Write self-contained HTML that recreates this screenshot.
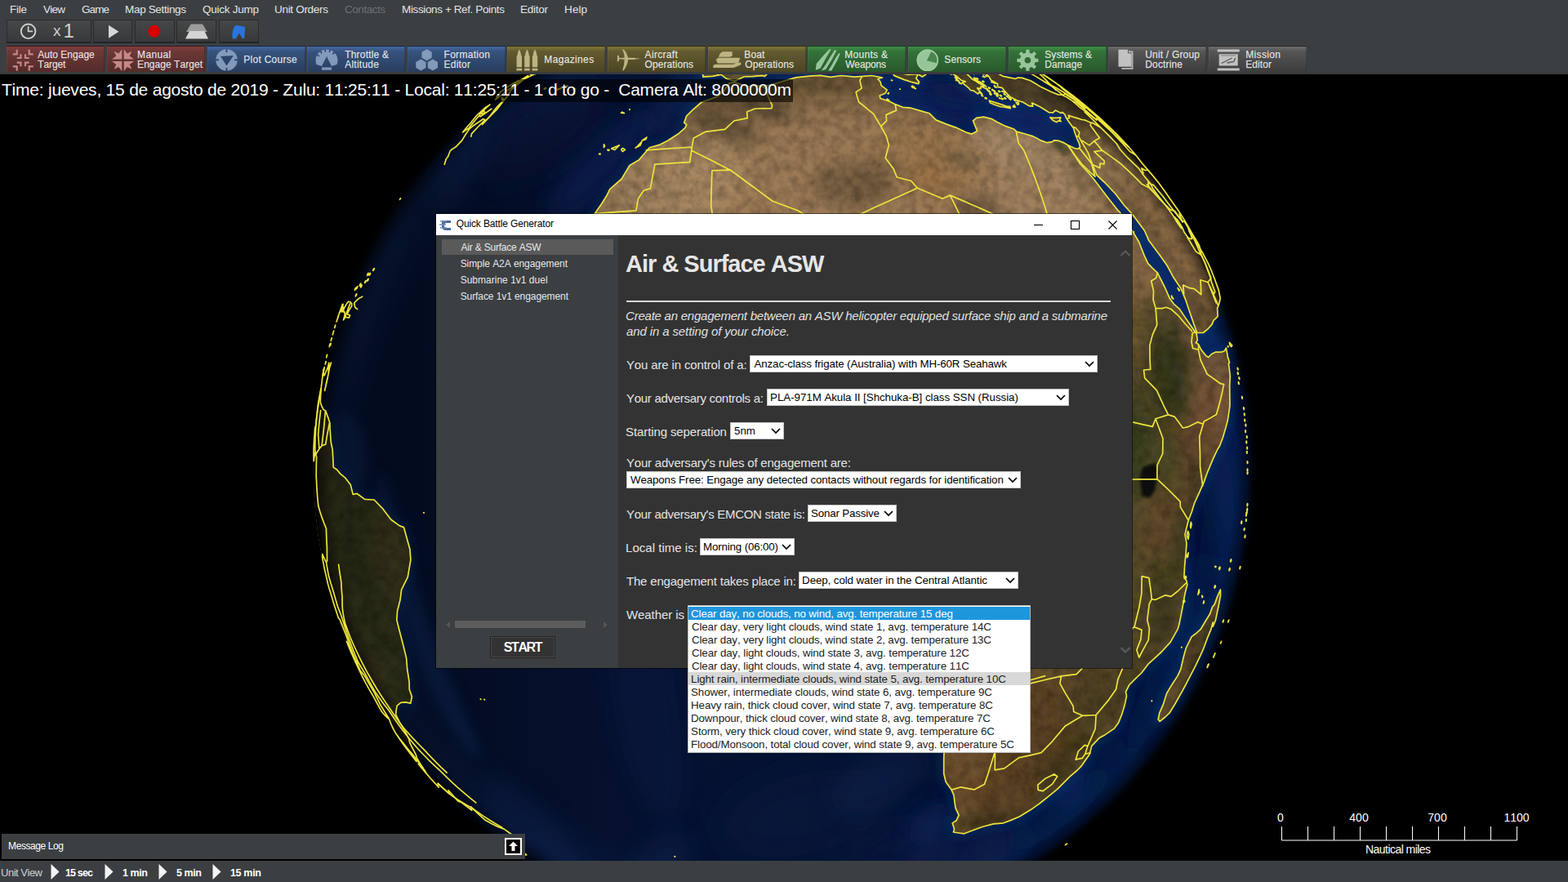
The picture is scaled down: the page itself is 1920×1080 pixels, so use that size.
<!DOCTYPE html>
<html lang="es"><head><meta charset="utf-8"><title>Quick Battle Generator</title>
<style>
*{box-sizing:border-box;margin:0;padding:0}
html,body{width:1920px;height:1080px;overflow:hidden;background:#000}
body{position:relative;font-family:"Liberation Sans",sans-serif;font-kerning:none}
.b{position:absolute}
.t{position:absolute;white-space:pre;font-weight:normal;font-style:normal;list-style:none}
svg{position:absolute;left:0;top:0}
</style></head>
<body>
<main id="map" aria-label="Map view">
<svg width="1920" height="1080" viewBox="0 0 1920 1080" class="globe">
<defs>
<clipPath id="disk"><circle cx="960.1" cy="572.4" r="576.5"/></clipPath>
<clipPath id="land"><path d="M893.0,101.8 899.3,100.8 915.1,105.9 926.7,104.8 934.6,106.4 953.2,101.2 961.2,98.8 974.7,94.9 993.6,92.9 1004.7,92.4 1017.1,94.3 1030.0,92.5 1046.5,94.2 1057.0,93.3 1067.3,92.5 1080.5,95.0 1074.9,96.8 1077.9,100.1 1079.3,104.9 1086.2,110.2 1084.1,114.2 1077.2,117.0 1078.0,120.5 1085.3,122.7 1090.3,124.8 1096.7,127.9 1105.4,131.3 1115.5,132.2 1128.6,136.1 1138.1,138.8 1146.1,146.9 1158.5,151.9 1170.4,156.1 1184.1,162.4 1189.9,164.1 1196.5,160.4 1193.4,152.7 1191.5,148.0 1195.6,144.3 1204.4,143.2 1214.6,145.7 1220.7,149.2 1231.1,154.4 1241.5,158.0 1244.8,161.1 1255.4,164.0 1264.0,166.6 1275.7,172.4 1282.2,174.7 1288.3,173.6 1290.9,171.8 1296.1,172.3 1302.2,174.6 1307.2,177.5 1316.1,190.4 1322.5,200.5 1333.2,212.0 1339.9,220.0 1349.3,232.6 1359.3,245.6 1368.1,256.6 1371.8,260.5 1375.3,270.4 1385.6,281.2 1394.5,296.0 1401.1,312.6 1405.8,322.6 1411.0,328.2 1417.4,334.2 1427.1,353.5 1432.2,365.2 1437.2,372.1 1444.3,378.4 1452.7,390.9 1460.4,402.1 1465.2,409.1 1466.3,416.6 1464.3,419.8 1467.4,421.6 1470.9,428.4 1476.9,435.7 1479.7,437.5 1483.6,433.6 1488.3,431.2 1492.2,431.1 1495.9,431.0 1499.3,429.8 1501.4,426.1 1503.3,436.7 1505.6,444.2 1504.4,444.9 1506.3,460.4 1505.7,472.1 1505.8,484.2 1506.0,496.4 1504.8,504.9 1503.3,514.8 1501.0,523.4 1497.3,536.0 1493.4,546.2 1491.0,550.0 1485.4,561.8 1478.7,577.8 1474.4,589.9 1468.3,603.6 1462.6,616.0 1459.2,627.0 1455.4,636.8 1453.9,642.3 1451.0,654.7 1453.0,665.2 1452.0,678.6 1450.6,693.2 1449.9,707.5 1452.9,710.9 1453.8,715.8 1450.9,727.5 1447.7,745.4 1444.0,764.1 1442.1,770.4 1433.1,786.4 1422.5,798.0 1412.6,807.1 1406.0,813.2 1397.7,824.0 1388.5,832.8 1382.9,838.5 1378.5,847.2 1379.5,852.4 1377.1,863.6 1373.7,874.8 1369.6,884.9 1364.4,892.1 1352.8,899.9 1346.3,903.4 1336.8,913.4 1334.3,923.4 1323.6,938.7 1318.8,943.5 1310.0,950.8 1304.6,956.4 1294.6,966.4 1283.3,975.6 1273.4,983.5 1262.1,991.6 1248.2,1000.0 1237.9,1004.4 1228.8,1007.8 1216.6,1008.9 1203.6,1012.3 1195.1,1015.3 1180.6,1020.8 1174.5,1020.0 1167.4,1019.0 1168.6,1015.2 1166.2,1007.9 1171.0,1004.8 1174.1,998.2 1170.1,989.7 1169.0,982.3 1168.0,973.8 1165.1,967.1 1158.2,957.6 1155.7,947.2 1155.7,929.5 1156.1,918.0 1156.3,906.2 1155.5,894.2 1149.9,882.2 1144.6,869.9 1139.1,857.2 1131.7,834.8 1135.8,820.2 1139.8,805.3 1149.3,780.6 1161.9,767.0 1170.0,738.7 1161.5,717.9 1163.4,710.3 1160.4,687.3 1152.4,667.3 1145.6,648.6 1129.5,628.2 1113.0,609.2 1100.8,583.6 1110.1,566.0 1113.2,556.4 1116.1,542.0 1117.5,526.0 1112.6,511.7 1103.3,508.4 1093.8,498.8 1075.1,501.8 1056.2,503.3 1040.1,484.0 1014.5,469.6 998.5,470.3 979.3,474.2 956.9,483.8 934.4,491.8 926.3,495.8 911.9,490.2 896.0,487.9 880.0,490.0 864.1,492.1 837.3,501.9 814.3,489.4 790.4,472.4 778.8,461.7 765.9,454.3 755.0,439.2 750.2,424.1 737.2,409.6 726.6,402.6 726.5,389.4 712.1,384.3 715.4,367.6 713.7,359.9 705.8,350.5 714.9,341.6 721.5,331.6 728.9,317.5 732.5,302.6 729.0,285.9 725.5,268.5 728.1,262.1 736.0,250.4 742.5,240.3 746.8,231.7 761.2,219.0 771.0,202.5 782.1,196.1 787.1,190.3 795.3,180.7 808.1,177.1 817.5,172.3 831.5,163.2 838.8,156.7 840.8,152.7 837.7,150.4 840.6,142.1 848.7,134.2 859.2,125.0 870.3,121.3 879.6,117.4 885.7,112.0 889.4,106.8 893.0,101.8Z M1494.4,722.2 1494.5,728.8 1492.9,738.1 1489.3,755.3 1488.4,759.7 1485.2,767.1 1485.2,762.1 1482.7,771.2 1478.6,780.9 1473.7,794.2 1469.1,804.3 1464.1,814.9 1456.2,830.1 1450.8,840.5 1446.5,848.4 1438.8,862.0 1431.9,873.2 1426.8,878.0 1420.2,883.4 1418.2,881.0 1419.8,872.8 1424.3,862.7 1428.7,848.7 1430.9,845.1 1436.2,836.5 1442.0,827.6 1445.8,819.4 1447.3,812.8 1449.7,802.8 1452.3,793.5 1459.1,779.6 1464.3,775.8 1470.1,770.7 1475.7,761.3 1481.5,751.8 1484.6,743.1 1487.2,740.1 1490.8,730.1 1494.4,722.2Z M899.6,99.2 907.3,95.7 910.9,94.0 922.0,93.7 932.7,92.7 936.6,93.4 940.1,89.6 951.3,86.4 954.7,82.0 962.3,78.4 956.9,72.8 965.3,66.1 970.3,63.0 982.4,61.2 991.8,55.3 992.0,49.6 1006.4,49.5 1018.3,51.7 1030.6,49.0 1043.2,46.2 1055.1,49.2 1061.2,55.0 1069.3,59.1 1079.4,63.5 1089.7,68.1 1103.3,72.0 1115.4,78.4 1126.6,86.3 1125.0,91.5 1129.4,94.1 1133.5,91.2 1136.5,88.2 1134.3,84.0 1127.8,80.0 1129.6,77.1 1140.8,81.8 1144.8,83.6 1144.8,81.4 1138.4,77.8 1126.5,73.1 1117.2,67.2 1105.9,65.2 1096.4,59.6 1087.1,54.3 1073.7,48.3 1071.2,43.6 1081.5,43.4 1084.5,47.0 1095.6,49.2 1109.6,57.5 1120.5,61.4 1131.4,65.3 1145.6,71.4 1149.0,75.3 1151.9,81.0 1161.6,87.4 1170.5,92.7 1177.2,98.4 1182.1,99.9 1178.0,101.2 1185.7,107.3 1188.4,110.5 1192.1,111.1 1197.5,114.9 1198.9,113.1 1202.8,115.5 1196.6,107.8 1201.0,108.6 1201.2,105.4 1205.5,107.8 1203.2,103.8 1190.4,96.9 1187.6,93.9 1181.7,88.5 1181.9,85.6 1189.2,88.8 1192.7,90.7 1190.1,86.1 1197.2,86.5 1205.6,88.9 1207.5,90.4 1211.5,94.7 1213.3,98.0 1221.6,102.8 1221.5,106.4 1227.2,107.7 1231.7,113.1 1237.1,118.8 1244.4,122.5 1252.9,125.2 1259.9,129.6 1264.7,130.2 1263.6,126.1 1273.5,130.7 1282.3,136.3 1284.3,137.6 1289.5,137.9 1292.1,135.1 1299.3,138.6 1300.7,137.4 1303.8,140.2 1305.6,144.3 1308.0,148.1 1314.7,157.3 1315.7,160.9 1317.2,165.5 1318.7,169.5 1321.3,175.4 1322.6,180.2 1319.7,182.5 1315.2,181.2 1307.9,177.7 1316.5,190.5 1324.9,201.1 1334.5,210.6 1341.0,216.3 1339.0,209.2 1336.6,200.1 1337.3,200.3 1343.1,214.7 1352.7,223.5 1365.5,237.0 1376.5,251.2 1386.8,262.7 1401.5,282.5 1406.4,293.9 1420.0,312.2 1429.2,325.3 1436.6,339.2 1446.4,353.9 1451.9,367.6 1456.1,380.1 1462.6,399.0 1465.6,407.4 1473.3,407.5 1479.6,402.3 1484.1,397.1 1486.0,392.4 1488.7,389.8 1491.1,387.3 1490.6,377.3 1491.9,374.3 1492.8,371.3 1493.7,368.1 1494.2,365.0 1492.3,355.6 1487.2,341.3 1483.6,332.2 1479.8,323.3 1472.8,310.0 1466.5,299.7 1460.1,288.6 1454.8,278.9 1456.1,283.3 1457.7,286.3 1459.8,292.3 1457.6,292.4 1455.2,291.4 1450.3,284.8 1447.6,278.4 1441.4,268.5 1443.9,274.6 1446.6,279.7 1441.3,272.3 1436.5,264.1 1427.4,251.5 1417.2,238.6 1411.3,230.3 1409.6,225.9 1412.2,226.4 1424.0,240.5 1433.1,252.8 1442.5,264.6 1448.2,270.9 1449.9,270.8 1460.1,287.1 1463.3,291.7 1466.1,296.2 1468.3,297.7 1469.4,299.8 1470.4,301.7 1468.3,297.7 1466.1,293.8 1463.9,289.8 1461.7,285.9 1459.4,281.9 1457.1,277.9 1454.7,274.0 1452.3,270.0 1447.7,262.6 1443.0,255.4 1438.2,248.2 1433.3,241.0 1428.3,234.0 1423.2,227.1 1418.0,220.2 1412.7,213.4 1407.3,206.7 1401.8,200.1 1396.2,193.6 1389.5,186.0 1382.6,178.5 1375.7,171.2 1368.6,164.0 1361.4,156.9 1354.1,150.0 1346.7,143.2 1339.2,136.5 1331.6,130.0 1323.8,123.6 1318.6,119.5 1313.3,115.3 1307.9,111.2 1302.4,107.1 1296.9,103.1 1291.2,99.1 1285.5,95.1 1279.7,91.2 1273.9,87.4 1267.9,83.6 1261.9,79.9 1255.9,76.2 1249.8,72.6 1243.6,69.1 1237.4,65.6 1231.1,62.3 1224.8,59.0 1218.4,55.7 1214.2,53.7 1210.0,51.6 1205.7,49.5 1201.3,47.5 1196.9,45.5 1192.4,43.5 1187.9,41.6 1183.3,39.6 1178.7,37.7 1174.1,35.8 1169.4,34.0 1164.7,32.2 1159.9,30.4 1155.1,28.7 1150.3,27.0 1145.5,25.3 1140.6,23.7 1135.7,22.1 1130.8,20.6 1126.0,19.1 1122.8,18.1 1119.5,17.2 1116.2,16.2 1112.8,15.3 1109.4,14.4 1105.9,13.4 1102.3,12.5 1098.7,11.6 1095.0,10.7 1091.3,9.8 1087.5,9.0 1083.6,8.1 1079.7,7.3 1075.8,6.5 1071.8,5.6 1067.7,4.9 1063.6,4.1 1059.5,3.4 1055.3,2.6 1051.1,2.0 1046.8,1.3 1042.5,0.7 1038.1,0.0 1033.7,-0.5 1029.3,-1.1 1024.9,-1.6 1020.4,-2.1 1015.8,-2.6 1011.3,-3.0 1006.7,-3.4 1004.9,-3.5 1002.8,-3.7 1000.4,-2.7 997.9,-2.7 995.2,-2.6 992.2,-2.3 989.0,-1.9 985.6,-1.4 981.9,-0.8 978.0,0.0 973.9,1.0 969.5,2.1 964.9,3.3 960.1,4.8 955.0,6.4 949.7,8.1 944.2,10.1 938.4,12.2 932.4,14.5 926.1,17.0 919.7,19.6 922.7,22.9 926.0,26.4 929.5,30.2 933.2,34.2 937.1,38.6 941.3,43.2 945.6,48.2 935.2,48.4 924.8,48.8 914.4,49.2 904.0,49.7 893.7,50.4 883.4,51.0 870.3,54.2 870.6,59.9 871.0,65.9 865.6,73.7 860.1,81.9 860.8,94.2 872.7,93.4 882.9,91.4 889.5,96.4 899.6,99.2Z M1095.3,88.3 1102.8,89.7 1112.2,91.4 1124.1,90.7 1121.8,96.1 1125.5,100.1 1124.6,102.6 1116.9,100.7 1106.7,97.4 1095.0,92.6 1093.3,89.5 1095.3,88.3Z M1053.8,65.0 1058.4,67.2 1060.4,73.1 1061.1,78.5 1056.2,78.8 1051.4,79.9 1048.5,77.0 1044.0,68.1 1044.3,65.6 1053.8,65.0Z M1211.3,123.2 1217.2,125.1 1225.9,127.9 1232.8,130.4 1236.7,130.4 1237.3,132.7 1231.2,131.5 1224.3,130.5 1217.3,128.0 1212.5,126.0 1211.3,123.2Z M1285.9,143.9 1289.7,144.3 1294.3,144.4 1298.7,143.9 1297.6,146.7 1299.1,148.7 1296.2,147.9 1293.9,149.6 1289.7,147.7 1285.9,143.9Z M396.6,451.7 394.6,464.0 393.2,475.5 392.6,484.1 392.3,492.7 393.3,495.6 394.5,498.5 396.1,501.4 398.7,503.1 402.0,511.9 403.8,517.7 404.4,529.3 405.2,541.0 407.2,550.9 408.3,572.4 412.5,575.0 416.7,580.1 423.1,585.4 429.2,593.4 432.2,605.4 437.0,604.3 446.6,611.4 458.1,612.0 469.1,623.4 478.8,636.3 489.4,643.9 494.4,645.6 496.8,654.0 501.9,672.4 502.9,685.5 499.3,706.7 491.6,722.1 490.0,734.8 486.6,748.0 485.8,758.9 488.6,770.3 493.8,790.3 497.6,805.9 498.7,819.5 501.1,834.9 501.3,844.2 504.4,853.0 502.8,861.1 496.6,859.8 490.8,860.3 486.2,864.2 485.1,870.1 484.7,875.1 489.6,884.9 496.4,896.1 500.4,904.1 501.8,909.6 504.6,915.2 509.3,924.2 510.5,928.5 514.0,934.3 517.7,939.9 520.7,944.3 522.1,946.8 518.6,943.0 515.3,939.1 511.2,936.0 518.6,944.9 526.2,953.7 536.3,965.0 535.5,964.0 534.7,963.2 534.1,962.5 533.5,961.9 540.0,968.9 546.6,975.8 550.9,980.1 555.3,984.5 559.7,988.8 564.3,993.1 568.9,997.4 575.7,1003.6 582.6,1009.6 589.6,1015.6 596.7,1021.4 603.9,1027.1 597.2,1021.8 590.6,1016.4 584.1,1010.9 577.7,1005.4 571.5,999.8 565.3,994.1 559.3,988.4 553.4,982.6 547.6,976.7 541.9,970.9 536.3,965.0 530.9,959.0 525.6,953.0 520.4,947.0 513.9,939.3 507.6,931.4 501.3,923.4 495.3,915.3 489.3,907.1 483.5,898.8 477.9,890.4 472.3,881.9 467.0,873.3 461.8,864.5 456.7,855.7 451.8,846.8 447.0,837.8 442.5,828.8 438.0,819.6 433.7,810.4 429.6,801.0 425.7,791.7 421.9,782.2 418.3,772.7 414.8,762.9 411.5,753.1 408.3,743.3 405.4,733.5 402.6,723.5 400.0,713.6 397.6,703.6 395.3,693.6 393.3,683.6 391.4,673.5 389.7,663.5 388.2,653.4 386.8,643.3 385.7,633.2 384.7,623.0 383.9,612.9 383.2,602.8 382.8,592.7 382.5,582.5 382.4,572.4 382.5,563.1 382.7,553.7 383.1,544.3 383.7,535.0 384.3,525.6 385.2,516.2 386.2,506.8 387.3,497.4 388.6,488.0 390.1,478.7 391.7,469.3 393.5,459.9 395.4,450.5 395.4,450.9 395.3,451.2 395.2,451.5 395.2,451.7 395.2,451.9 395.1,452.1 395.1,452.2 395.1,452.3 395.0,452.4 395.0,452.4 395.0,452.4 395.0,452.4 395.1,452.3 395.1,452.2 395.1,452.1 395.2,451.9 396.3,451.9 396.6,451.7Z M1246.5,124.7 1247.6,127.3 1246.2,128.3 1244.2,125.8 1246.5,124.7Z M1192.5,96.7 1201.3,100.9 1207.7,106.0 1198.0,101.5 1192.5,96.7Z"/></clipPath>
<radialGradient id="ocean" cx="0.5" cy="0.5" r="0.5"><stop offset="0" stop-color="#051232"/><stop offset="1" stop-color="#051232"/></radialGradient>
<radialGradient id="limb" cx="0.5" cy="0.5" r="0.5"><stop offset="0" stop-color="#000" stop-opacity="0"/><stop offset="0.96" stop-color="#000" stop-opacity="0"/><stop offset="0.985" stop-color="#000" stop-opacity="0.4"/><stop offset="0.997" stop-color="#000" stop-opacity="0.9"/><stop offset="1" stop-color="#000" stop-opacity="1"/></radialGradient>
<radialGradient id="rim" cx="0.5" cy="0.5" r="0.5"><stop offset="0.86" stop-color="#1a4a9a" stop-opacity="0"/><stop offset="0.95" stop-color="#1a4a9a" stop-opacity="0.13"/><stop offset="0.98" stop-color="#1a4a9a" stop-opacity="0.08"/><stop offset="1" stop-color="#1a4a9a" stop-opacity="0"/></radialGradient>
<linearGradient id="night" gradientUnits="userSpaceOnUse" x1="385" y1="0" x2="850" y2="0"><stop offset="0" stop-color="#000" stop-opacity="0.5"/><stop offset="0.3" stop-color="#000" stop-opacity="0.36"/><stop offset="0.65" stop-color="#000" stop-opacity="0.14"/><stop offset="1" stop-color="#000" stop-opacity="0"/></linearGradient>
<filter id="b1" x="-20%" y="-20%" width="140%" height="140%"><feGaussianBlur stdDeviation="1.500"/></filter>
<filter id="b4" x="-20%" y="-20%" width="140%" height="140%"><feGaussianBlur stdDeviation="4"/></filter>
<filter id="b8" x="-30%" y="-30%" width="160%" height="160%"><feGaussianBlur stdDeviation="8"/></filter>
<filter id="b14" x="-40%" y="-40%" width="180%" height="180%"><feGaussianBlur stdDeviation="14"/></filter>
<filter id="b25" x="-50%" y="-50%" width="200%" height="200%"><feGaussianBlur stdDeviation="25"/></filter>
<filter id="grain" x="0" y="0" width="100%" height="100%"><feTurbulence type="fractalNoise" baseFrequency="0.09" numOctaves="3" seed="7" result="n"/><feColorMatrix in="n" type="matrix" values="0 0 0 0 0  0 0 0 0 0  0 0 0 0 0  1.500 1.500 0 0 -1.150"/></filter>
<filter id="grain2" x="0" y="0" width="100%" height="100%"><feTurbulence type="fractalNoise" baseFrequency="0.025" numOctaves="3" seed="3" result="n"/><feColorMatrix in="n" type="matrix" values="0 0 0 0 .350  0 0 0 0 .250  0 0 0 0 .120  0 1.800 1.200 0 -1.250"/></filter>
</defs>
<g clip-path="url(#disk)">
<circle cx="960.1" cy="572.4" r="576.5" fill="url(#ocean)"/>
<path d="M1309.4,164.5 1302.5,157.3 1289.3,148.3 1269.9,137.9 1244.7,126.9 1214.6,116.1 1180.4,106.4 1143.7,98.3 1106.6,92.5 1071.1,89.2 1039.4,88.3 1013.4,89.5 994.9,92.6 985.0,97.1 984.6,102.7 994.2,109.1 1013.6,116.1 1041.9,123.7 1077.4,131.8 1117.6,140.1 1159.5,148.4 1199.8,156.2 1235.9,162.9 1265.6,168.0 1287.9,171.0 1302.5,171.5 1309.5,169.3 1309.4,164.5Z" fill="#09225a" opacity="0.95" filter="url(#b14)"/>
<path d="M1317.5,167.7 1313.3,162.8 1306.5,157.5 1297.6,151.9 1286.9,146.4 1274.8,141.4 1261.7,137.1 1248.2,133.7 1235.0,131.5 1222.7,130.5 1212.2,130.9 1204.1,132.5 1199.0,135.3 1197.4,139.1 1199.5,143.7 1205.3,148.8 1214.5,154.2 1226.5,159.6 1240.4,164.7 1255.4,169.2 1270.4,173.0 1284.4,175.8 1296.7,177.4 1306.6,177.9 1313.7,177.0 1317.9,175.0 1319.2,171.8 1317.5,167.7Z" fill="#09225a" opacity="0.95" filter="url(#b14)"/>
<path d="M1101.8,97.6 1098.3,93.9 1090.5,90.0 1079.0,86.2 1064.2,82.8 1047.0,80.1 1028.1,78.1 1008.5,77.1 989.1,77.1 970.9,78.2 954.8,80.1 941.8,82.8 932.4,86.0 927.4,89.5 927.1,93.1 931.7,96.5 940.9,99.7 954.5,102.5 971.6,104.8 991.4,106.6 1012.6,107.8 1033.8,108.4 1053.7,108.3 1071.2,107.5 1085.3,106.0 1095.3,103.8 1100.9,101.0 1101.8,97.6Z" fill="#0a2860" opacity="0.9" filter="url(#b14)"/>
<path d="M1213.0,120.6 1210.4,117.7 1206.0,114.6 1200.1,111.4 1192.9,108.5 1184.8,105.9 1176.1,103.7 1167.4,102.2 1158.9,101.4 1151.2,101.2 1144.7,101.8 1139.8,103.1 1136.7,105.1 1135.6,107.5 1136.8,110.3 1140.2,113.3 1145.6,116.4 1152.7,119.4 1161.0,122.1 1170.2,124.5 1179.6,126.3 1188.6,127.5 1196.8,128.1 1203.7,127.9 1209.0,127.0 1212.3,125.4 1213.7,123.3 1213.0,120.6Z" fill="#071c4a" opacity="0.7" filter="url(#b8)"/>
<path d="M1416.2,304.6 1401.5,282.0 1386.7,261.3 1372.7,243.5 1360.5,229.6 1350.9,219.9 1344.6,214.9 1342.1,214.7 1343.4,219.4 1348.5,228.8 1357.0,242.8 1368.2,260.6 1381.5,281.6 1395.8,304.7 1410.2,328.6 1423.8,351.9 1436.0,373.2 1446.3,391.1 1454.3,404.5 1460.0,412.7 1463.3,415.3 1464.1,412.1 1462.4,403.4 1458.0,389.8 1451.1,371.9 1441.5,350.9 1429.7,328.0 1416.2,304.6Z" fill="#0c2e6c" opacity="1" filter="url(#b8)"/>
<path d="M1499.2,427.1 1498.1,422.7 1496.1,418.0 1493.4,413.1 1490.0,408.3 1486.1,403.9 1481.8,400.0 1477.3,397.0 1472.8,394.9 1468.5,394.0 1464.9,394.2 1462.0,395.6 1460.2,398.1 1459.7,401.6 1460.4,405.9 1462.4,410.7 1465.5,415.8 1469.5,420.8 1474.1,425.6 1478.9,429.7 1483.8,433.0 1488.2,435.4 1492.1,436.7 1495.3,436.8 1497.6,435.8 1499.1,433.8 1499.6,430.8 1499.2,427.1Z" fill="#0c2e6c" opacity="1" filter="url(#b8)"/>
<path d="M1537.3,594.6 1534.1,507.5 1518.8,425.8 1495.2,354.9 1468.4,298.0 1442.8,257.3 1425.0,231.9 1416.7,222.4 1418.8,229.1 1430.3,253.6 1448.3,297.8 1468.1,363.0 1484.5,447.9 1492.2,546.8 1488.5,650.2 1473.8,746.7 1451.6,827.6 1427.3,888.3 1406.3,928.6 1393.0,950.3 1390.2,955.8 1398.8,946.4 1419.1,923.2 1446.4,884.2 1477.2,829.8 1506.0,761.2 1527.4,681.2 1537.3,594.6Z" fill="#06163c" opacity="0.95" filter="url(#b25)"/>
<path d="M1468.5,829.6 1482.2,795.3 1491.9,762.2 1497.1,732.2 1497.9,707.2 1494.4,689.0 1487.2,678.9 1476.8,678.2 1463.7,687.4 1448.5,706.1 1432.0,733.4 1414.9,767.5 1397.9,805.7 1381.8,845.1 1367.5,882.6 1355.6,915.9 1346.7,943.2 1341.3,963.6 1339.7,976.8 1342.3,983.1 1349.1,982.8 1360.1,976.3 1374.9,963.8 1392.6,945.7 1412.2,922.4 1432.3,894.6 1451.5,863.2 1468.5,829.6Z" fill="#06163c" opacity="0.9" filter="url(#b25)"/>
<path d="M1368.9,972.1 1381.5,955.7 1390.2,941.0 1394.1,928.6 1392.5,919.6 1385.0,914.6 1371.5,914.3 1352.7,918.8 1329.7,928.0 1304.2,941.5 1278.5,958.3 1254.5,977.2 1234.2,996.7 1218.7,1015.4 1208.7,1032.3 1204.2,1046.3 1204.7,1056.9 1209.5,1063.9 1218.1,1067.1 1229.7,1066.9 1244.0,1063.3 1260.3,1056.7 1278.2,1047.3 1297.1,1035.4 1316.5,1021.3 1335.5,1005.6 1353.2,989.0 1368.9,972.1Z" fill="#06173e" opacity="0.9" filter="url(#b25)"/>
<path d="M1247.7,1041.0 1254.1,1031.6 1256.3,1023.2 1253.8,1016.3 1246.4,1011.4 1234.3,1008.9 1217.9,1009.0 1198.4,1011.7 1177.1,1016.8 1155.5,1024.2 1135.4,1033.2 1118.1,1043.3 1104.7,1053.8 1095.8,1064.0 1091.7,1073.4 1092.2,1081.4 1096.9,1087.8 1105.0,1092.2 1116.1,1094.6 1129.4,1095.0 1144.4,1093.4 1160.5,1089.9 1177.2,1084.6 1194.0,1077.7 1210.1,1069.6 1225.0,1060.5 1237.7,1050.8 1247.7,1041.0Z" fill="#071c46" opacity="0.8" filter="url(#b25)"/>
<path d="M1156.2,1033.4 1158.8,1024.1 1157.9,1015.4 1153.1,1007.7 1144.7,1001.6 1133.0,997.5 1118.6,995.7 1102.6,996.4 1085.9,999.5 1069.8,1004.9 1055.3,1012.1 1043.3,1020.7 1034.5,1030.2 1029.3,1039.8 1027.7,1049.1 1029.6,1057.6 1034.7,1064.8 1042.6,1070.5 1052.6,1074.4 1064.3,1076.5 1077.3,1076.6 1090.9,1074.9 1104.7,1071.3 1118.1,1066.1 1130.6,1059.4 1141.5,1051.5 1150.2,1042.7 1156.2,1033.4Z" fill="#071c46" opacity="0.5" filter="url(#b25)"/>
<path d="M1504.5,556.3 1495.3,520.2 1483.6,486.2 1470.7,456.4 1458.0,432.6 1447.1,416.3 1439.3,408.3 1435.5,409.2 1436.0,419.1 1440.6,437.6 1448.4,463.7 1458.4,495.9 1469.0,532.2 1478.9,570.2 1487.2,607.4 1493.2,641.6 1497.2,670.9 1499.5,694.1 1500.9,710.3 1502.3,719.1 1504.1,720.6 1506.4,714.8 1509.3,701.9 1512.0,682.4 1513.7,657.0 1513.5,626.6 1510.6,592.4 1504.5,556.3Z" fill="#0a2660" opacity="0.6" filter="url(#b14)"/>
<path d="M1452.3,779.3 1458.3,756.8 1462.9,735.1 1465.9,715.6 1467.4,699.4 1467.6,687.6 1466.6,680.9 1464.7,679.8 1462.0,684.3 1458.5,694.3 1454.3,709.1 1449.3,727.9 1443.6,749.4 1437.4,772.3 1430.9,795.3 1424.4,816.9 1418.4,836.1 1413.4,852.0 1409.9,863.9 1408.2,871.3 1408.7,874.1 1411.2,872.3 1415.8,865.8 1422.0,855.0 1429.3,840.2 1437.3,822.1 1445.1,801.5 1452.3,779.3Z" fill="#092258" opacity="0.5" filter="url(#b14)"/>
<path d="M1329.0,948.6 1327.5,941.8 1324.8,936.1 1321.0,931.7 1316.5,929.1 1311.5,928.4 1306.5,929.8 1301.8,933.1 1297.7,938.2 1294.5,944.7 1292.2,952.2 1290.8,960.2 1290.4,968.2 1290.8,975.7 1292.0,982.3 1293.8,987.7 1296.3,991.7 1299.2,994.1 1302.6,995.0 1306.4,994.3 1310.5,992.1 1314.7,988.5 1318.8,983.6 1322.6,977.6 1325.7,970.8 1328.0,963.5 1329.1,955.9 1329.0,948.6Z" fill="#0a2860" opacity="0.6" filter="url(#b14)"/>
<path d="M762.2,212.3 776.3,196.1 788.2,180.3 797.2,166.0 802.9,153.8 805.3,144.0 804.1,137.1 799.6,133.3 792.1,132.6 781.8,135.1 769.2,140.7 754.9,149.2 739.5,160.3 724.0,173.7 709.0,188.8 695.5,204.7 684.2,220.8 675.8,235.9 670.8,249.1 669.5,259.7 672.0,266.8 678.2,270.0 687.7,268.9 700.1,263.8 714.6,254.9 730.4,242.7 746.6,228.2 762.2,212.3Z" fill="#092458" opacity="0.8" filter="url(#b14)"/>
<path d="M855.2,143.3 862.1,135.4 867.2,127.4 870.1,119.7 870.9,112.7 869.6,106.8 866.3,102.1 861.2,99.0 854.6,97.4 846.8,97.5 838.2,99.2 829.1,102.4 819.9,107.1 811.1,113.1 803.2,120.1 796.5,127.8 791.5,135.8 788.6,143.6 788.0,150.8 789.7,157.0 793.7,161.7 799.9,164.7 807.8,165.7 817.1,164.7 827.1,161.7 837.1,156.9 846.7,150.6 855.2,143.3Z" fill="#092250" opacity="0.7" filter="url(#b14)"/>
<path d="M903.4,99.8 903.0,94.4 900.3,89.5 895.5,85.4 888.9,82.2 881.0,80.2 872.0,79.3 862.5,79.7 852.8,81.2 843.3,83.9 834.6,87.5 827.0,92.0 821.0,97.2 816.8,102.7 814.8,108.3 815.3,113.7 818.2,118.5 823.4,122.6 830.8,125.6 839.9,127.4 850.3,127.7 861.1,126.7 871.9,124.4 881.8,120.8 890.4,116.3 897.0,111.1 901.4,105.5 903.4,99.8Z" fill="#0a2558" opacity="0.6" filter="url(#b14)"/>
<path d="M742.5,138.4 746.3,124.6 745.4,113.1 740.4,104.2 731.8,98.3 720.2,95.5 706.3,95.8 690.6,99.1 673.8,105.0 656.3,113.6 638.9,124.2 622.3,136.7 607.2,150.5 594.4,164.9 584.7,179.2 578.8,192.8 577.3,204.8 580.6,214.5 588.8,221.3 601.8,224.4 618.9,223.7 639.1,219.1 660.9,210.7 682.8,199.1 703.2,185.0 720.6,169.5 733.9,153.7 742.5,138.4Z" fill="#07193f" opacity="0.6" filter="url(#b25)"/>
<path d="M1094.9,966.0 1089.0,955.6 1076.9,947.7 1059.2,942.6 1036.9,940.8 1011.3,942.3 984.2,947.0 957.4,954.5 932.9,964.2 912.0,975.5 896.0,987.7 885.6,1000.1 880.9,1012.2 881.9,1023.2 888.0,1032.9 898.7,1040.8 913.4,1046.5 931.3,1049.9 951.7,1050.8 973.8,1049.0 996.7,1044.5 1019.6,1037.5 1041.2,1028.2 1060.6,1016.9 1076.6,1004.4 1088.2,991.2 1094.5,978.1 1094.9,966.0Z" fill="#071a42" opacity="0.45" filter="url(#b25)"/>
<path d="M1138.6,925.2 1133.9,919.3 1126.0,915.5 1115.4,914.0 1102.6,914.8 1088.3,918.0 1073.5,923.2 1059.0,930.3 1045.7,938.6 1034.4,947.8 1025.6,957.3 1019.9,966.6 1017.3,975.2 1018.1,982.7 1021.9,988.7 1028.6,993.0 1037.7,995.4 1048.8,995.8 1061.4,994.2 1074.9,990.5 1088.6,985.0 1101.9,978.0 1114.0,969.6 1124.5,960.4 1132.5,950.8 1137.8,941.4 1139.9,932.7 1138.6,925.2Z" fill="#09204c" opacity="0.5" filter="url(#b14)"/>
<path d="M1167.3,1007.8 1169.1,1001.6 1169.3,995.8 1167.8,990.6 1164.8,986.5 1160.4,983.7 1154.7,982.4 1148.2,982.7 1141.3,984.6 1134.4,987.9 1127.9,992.5 1122.1,998.0 1117.5,1004.1 1114.1,1010.5 1112.2,1016.8 1111.8,1022.7 1112.9,1027.7 1115.4,1031.8 1119.1,1034.7 1123.8,1036.4 1129.3,1036.7 1135.4,1035.7 1141.8,1033.4 1148.2,1029.9 1154.2,1025.4 1159.6,1020.0 1164.1,1014.0 1167.3,1007.8Z" fill="#0a2a5e" opacity="0.6" filter="url(#b14)"/>
<path d="M604.3,153.9 608.6,141.0 612.0,131.0 613.9,124.0 614.1,120.1 612.2,119.1 608.1,120.8 601.8,125.2 593.5,132.1 583.6,141.4 572.7,152.9 561.8,166.3 551.5,181.2 542.8,196.9 536.5,212.8 533.0,227.7 532.5,240.7 534.9,250.8 539.8,257.0 546.5,258.8 554.4,255.6 562.8,247.8 571.2,235.9 579.1,220.8 586.5,203.8 593.1,186.2 599.1,169.2 604.3,153.9Z" fill="#0a2050" opacity="0.55" filter="url(#b14)"/>
<path d="M468.2,382.7 478.1,354.2 487.5,327.9 495.8,305.0 502.2,286.8 506.1,274.0 507.0,266.8 504.7,265.5 499.4,270.0 491.4,280.1 481.3,295.3 470.0,315.2 458.3,338.8 447.2,365.0 437.5,392.6 429.8,420.0 424.2,445.8 420.8,468.4 419.5,486.5 420.0,499.1 422.0,505.4 425.2,504.8 429.6,497.4 435.2,483.4 441.9,463.7 449.7,439.2 458.6,411.7 468.2,382.7Z" fill="#0a2050" opacity="0.5" filter="url(#b14)"/>
<path d="M852.0,586.8 842.2,574.6 823.5,566.7 797.1,563.4 765.0,565.0 729.2,571.2 692.4,581.6 657.1,595.4 625.2,611.7 598.4,629.6 577.8,648.0 563.6,666.0 556.1,683.0 554.8,698.0 559.6,710.6 570.2,720.3 586.5,726.6 608.2,729.0 634.8,727.3 665.6,721.3 699.4,711.2 734.5,697.2 768.6,680.2 799.6,661.0 825.0,640.8 843.1,620.9 852.3,602.6 852.0,586.8Z" fill="#081c48" opacity="0.4" filter="url(#b14)"/>
<path d="M831.0,872.7 826.2,835.5 819.7,798.5 811.6,764.3 802.3,735.4 792.1,714.0 781.5,701.4 771.1,698.7 761.4,705.9 753.2,722.4 747.2,747.1 743.9,778.1 743.8,813.2 747.0,849.9 753.3,885.9 761.9,919.1 772.3,947.8 783.4,971.2 794.4,988.6 804.8,999.9 813.9,1005.2 821.6,1004.3 827.6,997.2 831.8,983.9 834.4,964.3 835.1,938.7 834.0,907.7 831.0,872.7Z" fill="#081c48" opacity="0.45" filter="url(#b14)"/>
<path d="M833.7,1090.0 837.8,1079.0 841.1,1066.6 843.0,1053.7 843.0,1041.2 840.6,1030.5 835.8,1022.4 828.7,1017.9 819.7,1017.2 809.6,1020.4 799.4,1027.1 790.1,1036.6 782.6,1047.7 777.5,1059.6 775.1,1071.4 775.4,1082.2 777.9,1091.7 782.2,1099.6 787.7,1105.9 793.6,1110.5 799.5,1113.6 805.2,1115.3 810.4,1115.6 815.3,1114.3 820.0,1111.3 824.6,1106.3 829.2,1099.2 833.7,1090.0Z" fill="#0a2050" opacity="0.5" filter="url(#b14)"/>
<path d="M1004.1,1113.2 1002.7,1109.1 996.4,1105.1 985.2,1101.4 969.4,1098.3 950.0,1095.7 928.3,1093.9 905.8,1092.8 884.2,1092.5 864.9,1093.2 849.3,1094.7 838.1,1097.1 831.7,1100.3 830.2,1104.1 833.4,1108.4 840.7,1112.8 851.5,1117.1 865.2,1121.0 881.0,1124.3 898.3,1126.8 916.3,1128.3 934.4,1128.8 951.8,1128.3 967.9,1126.7 981.9,1124.2 993.1,1121.0 1000.7,1117.3 1004.1,1113.2Z" fill="#0a2050" opacity="0.5" filter="url(#b14)"/>
<path d="M699.9,1036.2 689.1,1021.6 676.1,1006.3 661.6,991.2 646.4,977.6 631.4,966.5 617.5,958.8 605.8,954.9 596.9,955.2 591.6,959.5 590.2,967.3 592.7,978.0 598.9,990.6 608.4,1004.4 620.5,1018.4 634.3,1031.8 649.0,1044.1 663.7,1054.9 677.6,1063.6 690.0,1070.3 700.4,1074.8 708.4,1076.9 713.9,1076.5 716.7,1073.7 716.6,1068.1 713.8,1059.9 708.2,1049.1 699.9,1036.2Z" fill="#0a2252" opacity="0.5" filter="url(#b14)"/>
<path d="M524.3,760.9 510.1,717.9 497.7,676.8 487.4,640.2 479.1,610.6 472.6,589.7 467.6,578.4 463.8,577.3 461.3,586.3 460.5,604.8 462.1,631.9 466.6,665.9 474.7,704.8 486.4,746.3 501.2,787.7 518.3,826.6 536.3,861.0 553.5,889.3 568.4,910.5 579.9,924.2 586.9,930.0 589.1,927.9 586.3,917.8 579.1,899.8 568.2,874.0 554.5,841.2 539.5,802.8 524.3,760.9Z" fill="#0a2a5e" opacity="0.8" filter="url(#b8)"/>
<path d="M446.7,592.6 448.6,581.0 449.2,568.1 448.3,554.7 446.2,541.6 443.0,529.7 438.9,519.5 434.2,511.7 429.2,506.6 424.2,504.4 419.4,505.2 415.0,508.8 411.1,515.1 408.0,523.5 405.8,533.8 404.5,545.3 404.2,557.5 405.0,569.9 406.9,581.9 409.9,592.7 413.7,602.0 418.4,609.1 423.6,613.6 429.0,615.3 434.4,614.0 439.3,609.6 443.5,602.3 446.7,592.6Z" fill="#0a2a5e" opacity="0.7" filter="url(#b8)"/>
<circle cx="960.1" cy="572.4" r="576.5" fill="url(#rim)"/>
<path d="M893.0,101.8 899.3,100.8 915.1,105.9 926.7,104.8 934.6,106.4 953.2,101.2 961.2,98.8 974.7,94.9 993.6,92.9 1004.7,92.4 1017.1,94.3 1030.0,92.5 1046.5,94.2 1057.0,93.3 1067.3,92.5 1080.5,95.0 1074.9,96.8 1077.9,100.1 1079.3,104.9 1086.2,110.2 1084.1,114.2 1077.2,117.0 1078.0,120.5 1085.3,122.7 1090.3,124.8 1096.7,127.9 1105.4,131.3 1115.5,132.2 1128.6,136.1 1138.1,138.8 1146.1,146.9 1158.5,151.9 1170.4,156.1 1184.1,162.4 1189.9,164.1 1196.5,160.4 1193.4,152.7 1191.5,148.0 1195.6,144.3 1204.4,143.2 1214.6,145.7 1220.7,149.2 1231.1,154.4 1241.5,158.0 1244.8,161.1 1255.4,164.0 1264.0,166.6 1275.7,172.4 1282.2,174.7 1288.3,173.6 1290.9,171.8 1296.1,172.3 1302.2,174.6 1307.2,177.5 1316.1,190.4 1322.5,200.5 1333.2,212.0 1339.9,220.0 1349.3,232.6 1359.3,245.6 1368.1,256.6 1371.8,260.5 1375.3,270.4 1385.6,281.2 1394.5,296.0 1401.1,312.6 1405.8,322.6 1411.0,328.2 1417.4,334.2 1427.1,353.5 1432.2,365.2 1437.2,372.1 1444.3,378.4 1452.7,390.9 1460.4,402.1 1465.2,409.1 1466.3,416.6 1464.3,419.8 1467.4,421.6 1470.9,428.4 1476.9,435.7 1479.7,437.5 1483.6,433.6 1488.3,431.2 1492.2,431.1 1495.9,431.0 1499.3,429.8 1501.4,426.1 1503.3,436.7 1505.6,444.2 1504.4,444.9 1506.3,460.4 1505.7,472.1 1505.8,484.2 1506.0,496.4 1504.8,504.9 1503.3,514.8 1501.0,523.4 1497.3,536.0 1493.4,546.2 1491.0,550.0 1485.4,561.8 1478.7,577.8 1474.4,589.9 1468.3,603.6 1462.6,616.0 1459.2,627.0 1455.4,636.8 1453.9,642.3 1451.0,654.7 1453.0,665.2 1452.0,678.6 1450.6,693.2 1449.9,707.5 1452.9,710.9 1453.8,715.8 1450.9,727.5 1447.7,745.4 1444.0,764.1 1442.1,770.4 1433.1,786.4 1422.5,798.0 1412.6,807.1 1406.0,813.2 1397.7,824.0 1388.5,832.8 1382.9,838.5 1378.5,847.2 1379.5,852.4 1377.1,863.6 1373.7,874.8 1369.6,884.9 1364.4,892.1 1352.8,899.9 1346.3,903.4 1336.8,913.4 1334.3,923.4 1323.6,938.7 1318.8,943.5 1310.0,950.8 1304.6,956.4 1294.6,966.4 1283.3,975.6 1273.4,983.5 1262.1,991.6 1248.2,1000.0 1237.9,1004.4 1228.8,1007.8 1216.6,1008.9 1203.6,1012.3 1195.1,1015.3 1180.6,1020.8 1174.5,1020.0 1167.4,1019.0 1168.6,1015.2 1166.2,1007.9 1171.0,1004.8 1174.1,998.2 1170.1,989.7 1169.0,982.3 1168.0,973.8 1165.1,967.1 1158.2,957.6 1155.7,947.2 1155.7,929.5 1156.1,918.0 1156.3,906.2 1155.5,894.2 1149.9,882.2 1144.6,869.9 1139.1,857.2 1131.7,834.8 1135.8,820.2 1139.8,805.3 1149.3,780.6 1161.9,767.0 1170.0,738.7 1161.5,717.9 1163.4,710.3 1160.4,687.3 1152.4,667.3 1145.6,648.6 1129.5,628.2 1113.0,609.2 1100.8,583.6 1110.1,566.0 1113.2,556.4 1116.1,542.0 1117.5,526.0 1112.6,511.7 1103.3,508.4 1093.8,498.8 1075.1,501.8 1056.2,503.3 1040.1,484.0 1014.5,469.6 998.5,470.3 979.3,474.2 956.9,483.8 934.4,491.8 926.3,495.8 911.9,490.2 896.0,487.9 880.0,490.0 864.1,492.1 837.3,501.9 814.3,489.4 790.4,472.4 778.8,461.7 765.9,454.3 755.0,439.2 750.2,424.1 737.2,409.6 726.6,402.6 726.5,389.4 712.1,384.3 715.4,367.6 713.7,359.9 705.8,350.5 714.9,341.6 721.5,331.6 728.9,317.5 732.5,302.6 729.0,285.9 725.5,268.5 728.1,262.1 736.0,250.4 742.5,240.3 746.8,231.7 761.2,219.0 771.0,202.5 782.1,196.1 787.1,190.3 795.3,180.7 808.1,177.1 817.5,172.3 831.5,163.2 838.8,156.7 840.8,152.7 837.7,150.4 840.6,142.1 848.7,134.2 859.2,125.0 870.3,121.3 879.6,117.4 885.7,112.0 889.4,106.8 893.0,101.8Z M1494.4,722.2 1494.5,728.8 1492.9,738.1 1489.3,755.3 1488.4,759.7 1485.2,767.1 1485.2,762.1 1482.7,771.2 1478.6,780.9 1473.7,794.2 1469.1,804.3 1464.1,814.9 1456.2,830.1 1450.8,840.5 1446.5,848.4 1438.8,862.0 1431.9,873.2 1426.8,878.0 1420.2,883.4 1418.2,881.0 1419.8,872.8 1424.3,862.7 1428.7,848.7 1430.9,845.1 1436.2,836.5 1442.0,827.6 1445.8,819.4 1447.3,812.8 1449.7,802.8 1452.3,793.5 1459.1,779.6 1464.3,775.8 1470.1,770.7 1475.7,761.3 1481.5,751.8 1484.6,743.1 1487.2,740.1 1490.8,730.1 1494.4,722.2Z M899.6,99.2 907.3,95.7 910.9,94.0 922.0,93.7 932.7,92.7 936.6,93.4 940.1,89.6 951.3,86.4 954.7,82.0 962.3,78.4 956.9,72.8 965.3,66.1 970.3,63.0 982.4,61.2 991.8,55.3 992.0,49.6 1006.4,49.5 1018.3,51.7 1030.6,49.0 1043.2,46.2 1055.1,49.2 1061.2,55.0 1069.3,59.1 1079.4,63.5 1089.7,68.1 1103.3,72.0 1115.4,78.4 1126.6,86.3 1125.0,91.5 1129.4,94.1 1133.5,91.2 1136.5,88.2 1134.3,84.0 1127.8,80.0 1129.6,77.1 1140.8,81.8 1144.8,83.6 1144.8,81.4 1138.4,77.8 1126.5,73.1 1117.2,67.2 1105.9,65.2 1096.4,59.6 1087.1,54.3 1073.7,48.3 1071.2,43.6 1081.5,43.4 1084.5,47.0 1095.6,49.2 1109.6,57.5 1120.5,61.4 1131.4,65.3 1145.6,71.4 1149.0,75.3 1151.9,81.0 1161.6,87.4 1170.5,92.7 1177.2,98.4 1182.1,99.9 1178.0,101.2 1185.7,107.3 1188.4,110.5 1192.1,111.1 1197.5,114.9 1198.9,113.1 1202.8,115.5 1196.6,107.8 1201.0,108.6 1201.2,105.4 1205.5,107.8 1203.2,103.8 1190.4,96.9 1187.6,93.9 1181.7,88.5 1181.9,85.6 1189.2,88.8 1192.7,90.7 1190.1,86.1 1197.2,86.5 1205.6,88.9 1207.5,90.4 1211.5,94.7 1213.3,98.0 1221.6,102.8 1221.5,106.4 1227.2,107.7 1231.7,113.1 1237.1,118.8 1244.4,122.5 1252.9,125.2 1259.9,129.6 1264.7,130.2 1263.6,126.1 1273.5,130.7 1282.3,136.3 1284.3,137.6 1289.5,137.9 1292.1,135.1 1299.3,138.6 1300.7,137.4 1303.8,140.2 1305.6,144.3 1308.0,148.1 1314.7,157.3 1315.7,160.9 1317.2,165.5 1318.7,169.5 1321.3,175.4 1322.6,180.2 1319.7,182.5 1315.2,181.2 1307.9,177.7 1316.5,190.5 1324.9,201.1 1334.5,210.6 1341.0,216.3 1339.0,209.2 1336.6,200.1 1337.3,200.3 1343.1,214.7 1352.7,223.5 1365.5,237.0 1376.5,251.2 1386.8,262.7 1401.5,282.5 1406.4,293.9 1420.0,312.2 1429.2,325.3 1436.6,339.2 1446.4,353.9 1451.9,367.6 1456.1,380.1 1462.6,399.0 1465.6,407.4 1473.3,407.5 1479.6,402.3 1484.1,397.1 1486.0,392.4 1488.7,389.8 1491.1,387.3 1490.6,377.3 1491.9,374.3 1492.8,371.3 1493.7,368.1 1494.2,365.0 1492.3,355.6 1487.2,341.3 1483.6,332.2 1479.8,323.3 1472.8,310.0 1466.5,299.7 1460.1,288.6 1454.8,278.9 1456.1,283.3 1457.7,286.3 1459.8,292.3 1457.6,292.4 1455.2,291.4 1450.3,284.8 1447.6,278.4 1441.4,268.5 1443.9,274.6 1446.6,279.7 1441.3,272.3 1436.5,264.1 1427.4,251.5 1417.2,238.6 1411.3,230.3 1409.6,225.9 1412.2,226.4 1424.0,240.5 1433.1,252.8 1442.5,264.6 1448.2,270.9 1449.9,270.8 1460.1,287.1 1463.3,291.7 1466.1,296.2 1468.3,297.7 1469.4,299.8 1470.4,301.7 1468.3,297.7 1466.1,293.8 1463.9,289.8 1461.7,285.9 1459.4,281.9 1457.1,277.9 1454.7,274.0 1452.3,270.0 1447.7,262.6 1443.0,255.4 1438.2,248.2 1433.3,241.0 1428.3,234.0 1423.2,227.1 1418.0,220.2 1412.7,213.4 1407.3,206.7 1401.8,200.1 1396.2,193.6 1389.5,186.0 1382.6,178.5 1375.7,171.2 1368.6,164.0 1361.4,156.9 1354.1,150.0 1346.7,143.2 1339.2,136.5 1331.6,130.0 1323.8,123.6 1318.6,119.5 1313.3,115.3 1307.9,111.2 1302.4,107.1 1296.9,103.1 1291.2,99.1 1285.5,95.1 1279.7,91.2 1273.9,87.4 1267.9,83.6 1261.9,79.9 1255.9,76.2 1249.8,72.6 1243.6,69.1 1237.4,65.6 1231.1,62.3 1224.8,59.0 1218.4,55.7 1214.2,53.7 1210.0,51.6 1205.7,49.5 1201.3,47.5 1196.9,45.5 1192.4,43.5 1187.9,41.6 1183.3,39.6 1178.7,37.7 1174.1,35.8 1169.4,34.0 1164.7,32.2 1159.9,30.4 1155.1,28.7 1150.3,27.0 1145.5,25.3 1140.6,23.7 1135.7,22.1 1130.8,20.6 1126.0,19.1 1122.8,18.1 1119.5,17.2 1116.2,16.2 1112.8,15.3 1109.4,14.4 1105.9,13.4 1102.3,12.5 1098.7,11.6 1095.0,10.7 1091.3,9.8 1087.5,9.0 1083.6,8.1 1079.7,7.3 1075.8,6.5 1071.8,5.6 1067.7,4.9 1063.6,4.1 1059.5,3.4 1055.3,2.6 1051.1,2.0 1046.8,1.3 1042.5,0.7 1038.1,0.0 1033.7,-0.5 1029.3,-1.1 1024.9,-1.6 1020.4,-2.1 1015.8,-2.6 1011.3,-3.0 1006.7,-3.4 1004.9,-3.5 1002.8,-3.7 1000.4,-2.7 997.9,-2.7 995.2,-2.6 992.2,-2.3 989.0,-1.9 985.6,-1.4 981.9,-0.8 978.0,0.0 973.9,1.0 969.5,2.1 964.9,3.3 960.1,4.8 955.0,6.4 949.7,8.1 944.2,10.1 938.4,12.2 932.4,14.5 926.1,17.0 919.7,19.6 922.7,22.9 926.0,26.4 929.5,30.2 933.2,34.2 937.1,38.6 941.3,43.2 945.6,48.2 935.2,48.4 924.8,48.8 914.4,49.2 904.0,49.7 893.7,50.4 883.4,51.0 870.3,54.2 870.6,59.9 871.0,65.9 865.6,73.7 860.1,81.9 860.8,94.2 872.7,93.4 882.9,91.4 889.5,96.4 899.6,99.2Z M1095.3,88.3 1102.8,89.7 1112.2,91.4 1124.1,90.7 1121.8,96.1 1125.5,100.1 1124.6,102.6 1116.9,100.7 1106.7,97.4 1095.0,92.6 1093.3,89.5 1095.3,88.3Z M1053.8,65.0 1058.4,67.2 1060.4,73.1 1061.1,78.5 1056.2,78.8 1051.4,79.9 1048.5,77.0 1044.0,68.1 1044.3,65.6 1053.8,65.0Z M1211.3,123.2 1217.2,125.1 1225.9,127.9 1232.8,130.4 1236.7,130.4 1237.3,132.7 1231.2,131.5 1224.3,130.5 1217.3,128.0 1212.5,126.0 1211.3,123.2Z M1285.9,143.9 1289.7,144.3 1294.3,144.4 1298.7,143.9 1297.6,146.7 1299.1,148.7 1296.2,147.9 1293.9,149.6 1289.7,147.7 1285.9,143.9Z M396.6,451.7 394.6,464.0 393.2,475.5 392.6,484.1 392.3,492.7 393.3,495.6 394.5,498.5 396.1,501.4 398.7,503.1 402.0,511.9 403.8,517.7 404.4,529.3 405.2,541.0 407.2,550.9 408.3,572.4 412.5,575.0 416.7,580.1 423.1,585.4 429.2,593.4 432.2,605.4 437.0,604.3 446.6,611.4 458.1,612.0 469.1,623.4 478.8,636.3 489.4,643.9 494.4,645.6 496.8,654.0 501.9,672.4 502.9,685.5 499.3,706.7 491.6,722.1 490.0,734.8 486.6,748.0 485.8,758.9 488.6,770.3 493.8,790.3 497.6,805.9 498.7,819.5 501.1,834.9 501.3,844.2 504.4,853.0 502.8,861.1 496.6,859.8 490.8,860.3 486.2,864.2 485.1,870.1 484.7,875.1 489.6,884.9 496.4,896.1 500.4,904.1 501.8,909.6 504.6,915.2 509.3,924.2 510.5,928.5 514.0,934.3 517.7,939.9 520.7,944.3 522.1,946.8 518.6,943.0 515.3,939.1 511.2,936.0 518.6,944.9 526.2,953.7 536.3,965.0 535.5,964.0 534.7,963.2 534.1,962.5 533.5,961.9 540.0,968.9 546.6,975.8 550.9,980.1 555.3,984.5 559.7,988.8 564.3,993.1 568.9,997.4 575.7,1003.6 582.6,1009.6 589.6,1015.6 596.7,1021.4 603.9,1027.1 597.2,1021.8 590.6,1016.4 584.1,1010.9 577.7,1005.4 571.5,999.8 565.3,994.1 559.3,988.4 553.4,982.6 547.6,976.7 541.9,970.9 536.3,965.0 530.9,959.0 525.6,953.0 520.4,947.0 513.9,939.3 507.6,931.4 501.3,923.4 495.3,915.3 489.3,907.1 483.5,898.8 477.9,890.4 472.3,881.9 467.0,873.3 461.8,864.5 456.7,855.7 451.8,846.8 447.0,837.8 442.5,828.8 438.0,819.6 433.7,810.4 429.6,801.0 425.7,791.7 421.9,782.2 418.3,772.7 414.8,762.9 411.5,753.1 408.3,743.3 405.4,733.5 402.6,723.5 400.0,713.6 397.6,703.6 395.3,693.6 393.3,683.6 391.4,673.5 389.7,663.5 388.2,653.4 386.8,643.3 385.7,633.2 384.7,623.0 383.9,612.9 383.2,602.8 382.8,592.7 382.5,582.5 382.4,572.4 382.5,563.1 382.7,553.7 383.1,544.3 383.7,535.0 384.3,525.6 385.2,516.2 386.2,506.8 387.3,497.4 388.6,488.0 390.1,478.7 391.7,469.3 393.5,459.9 395.4,450.5 395.4,450.9 395.3,451.2 395.2,451.5 395.2,451.7 395.2,451.9 395.1,452.1 395.1,452.2 395.1,452.3 395.0,452.4 395.0,452.4 395.0,452.4 395.0,452.4 395.1,452.3 395.1,452.2 395.1,452.1 395.2,451.9 396.3,451.9 396.6,451.7Z M1246.5,124.7 1247.6,127.3 1246.2,128.3 1244.2,125.8 1246.5,124.7Z M1192.5,96.7 1201.3,100.9 1207.7,106.0 1198.0,101.5 1192.5,96.7Z" fill="none" stroke="#0e367a" stroke-width="22" stroke-opacity="0.15" filter="url(#b8)"/>
<path d="M893.0,101.8 899.3,100.8 915.1,105.9 926.7,104.8 934.6,106.4 953.2,101.2 961.2,98.8 974.7,94.9 993.6,92.9 1004.7,92.4 1017.1,94.3 1030.0,92.5 1046.5,94.2 1057.0,93.3 1067.3,92.5 1080.5,95.0 1074.9,96.8 1077.9,100.1 1079.3,104.9 1086.2,110.2 1084.1,114.2 1077.2,117.0 1078.0,120.5 1085.3,122.7 1090.3,124.8 1096.7,127.9 1105.4,131.3 1115.5,132.2 1128.6,136.1 1138.1,138.8 1146.1,146.9 1158.5,151.9 1170.4,156.1 1184.1,162.4 1189.9,164.1 1196.5,160.4 1193.4,152.7 1191.5,148.0 1195.6,144.3 1204.4,143.2 1214.6,145.7 1220.7,149.2 1231.1,154.4 1241.5,158.0 1244.8,161.1 1255.4,164.0 1264.0,166.6 1275.7,172.4 1282.2,174.7 1288.3,173.6 1290.9,171.8 1296.1,172.3 1302.2,174.6 1307.2,177.5 1316.1,190.4 1322.5,200.5 1333.2,212.0 1339.9,220.0 1349.3,232.6 1359.3,245.6 1368.1,256.6 1371.8,260.5 1375.3,270.4 1385.6,281.2 1394.5,296.0 1401.1,312.6 1405.8,322.6 1411.0,328.2 1417.4,334.2 1427.1,353.5 1432.2,365.2 1437.2,372.1 1444.3,378.4 1452.7,390.9 1460.4,402.1 1465.2,409.1 1466.3,416.6 1464.3,419.8 1467.4,421.6 1470.9,428.4 1476.9,435.7 1479.7,437.5 1483.6,433.6 1488.3,431.2 1492.2,431.1 1495.9,431.0 1499.3,429.8 1501.4,426.1 1503.3,436.7 1505.6,444.2 1504.4,444.9 1506.3,460.4 1505.7,472.1 1505.8,484.2 1506.0,496.4 1504.8,504.9 1503.3,514.8 1501.0,523.4 1497.3,536.0 1493.4,546.2 1491.0,550.0 1485.4,561.8 1478.7,577.8 1474.4,589.9 1468.3,603.6 1462.6,616.0 1459.2,627.0 1455.4,636.8 1453.9,642.3 1451.0,654.7 1453.0,665.2 1452.0,678.6 1450.6,693.2 1449.9,707.5 1452.9,710.9 1453.8,715.8 1450.9,727.5 1447.7,745.4 1444.0,764.1 1442.1,770.4 1433.1,786.4 1422.5,798.0 1412.6,807.1 1406.0,813.2 1397.7,824.0 1388.5,832.8 1382.9,838.5 1378.5,847.2 1379.5,852.4 1377.1,863.6 1373.7,874.8 1369.6,884.9 1364.4,892.1 1352.8,899.9 1346.3,903.4 1336.8,913.4 1334.3,923.4 1323.6,938.7 1318.8,943.5 1310.0,950.8 1304.6,956.4 1294.6,966.4 1283.3,975.6 1273.4,983.5 1262.1,991.6 1248.2,1000.0 1237.9,1004.4 1228.8,1007.8 1216.6,1008.9 1203.6,1012.3 1195.1,1015.3 1180.6,1020.8 1174.5,1020.0 1167.4,1019.0 1168.6,1015.2 1166.2,1007.9 1171.0,1004.8 1174.1,998.2 1170.1,989.7 1169.0,982.3 1168.0,973.8 1165.1,967.1 1158.2,957.6 1155.7,947.2 1155.7,929.5 1156.1,918.0 1156.3,906.2 1155.5,894.2 1149.9,882.2 1144.6,869.9 1139.1,857.2 1131.7,834.8 1135.8,820.2 1139.8,805.3 1149.3,780.6 1161.9,767.0 1170.0,738.7 1161.5,717.9 1163.4,710.3 1160.4,687.3 1152.4,667.3 1145.6,648.6 1129.5,628.2 1113.0,609.2 1100.8,583.6 1110.1,566.0 1113.2,556.4 1116.1,542.0 1117.5,526.0 1112.6,511.7 1103.3,508.4 1093.8,498.8 1075.1,501.8 1056.2,503.3 1040.1,484.0 1014.5,469.6 998.5,470.3 979.3,474.2 956.9,483.8 934.4,491.8 926.3,495.8 911.9,490.2 896.0,487.9 880.0,490.0 864.1,492.1 837.3,501.9 814.3,489.4 790.4,472.4 778.8,461.7 765.9,454.3 755.0,439.2 750.2,424.1 737.2,409.6 726.6,402.6 726.5,389.4 712.1,384.3 715.4,367.6 713.7,359.9 705.8,350.5 714.9,341.6 721.5,331.6 728.9,317.5 732.5,302.6 729.0,285.9 725.5,268.5 728.1,262.1 736.0,250.4 742.5,240.3 746.8,231.7 761.2,219.0 771.0,202.5 782.1,196.1 787.1,190.3 795.3,180.7 808.1,177.1 817.5,172.3 831.5,163.2 838.8,156.7 840.8,152.7 837.7,150.4 840.6,142.1 848.7,134.2 859.2,125.0 870.3,121.3 879.6,117.4 885.7,112.0 889.4,106.8 893.0,101.8Z M1494.4,722.2 1494.5,728.8 1492.9,738.1 1489.3,755.3 1488.4,759.7 1485.2,767.1 1485.2,762.1 1482.7,771.2 1478.6,780.9 1473.7,794.2 1469.1,804.3 1464.1,814.9 1456.2,830.1 1450.8,840.5 1446.5,848.4 1438.8,862.0 1431.9,873.2 1426.8,878.0 1420.2,883.4 1418.2,881.0 1419.8,872.8 1424.3,862.7 1428.7,848.7 1430.9,845.1 1436.2,836.5 1442.0,827.6 1445.8,819.4 1447.3,812.8 1449.7,802.8 1452.3,793.5 1459.1,779.6 1464.3,775.8 1470.1,770.7 1475.7,761.3 1481.5,751.8 1484.6,743.1 1487.2,740.1 1490.8,730.1 1494.4,722.2Z M899.6,99.2 907.3,95.7 910.9,94.0 922.0,93.7 932.7,92.7 936.6,93.4 940.1,89.6 951.3,86.4 954.7,82.0 962.3,78.4 956.9,72.8 965.3,66.1 970.3,63.0 982.4,61.2 991.8,55.3 992.0,49.6 1006.4,49.5 1018.3,51.7 1030.6,49.0 1043.2,46.2 1055.1,49.2 1061.2,55.0 1069.3,59.1 1079.4,63.5 1089.7,68.1 1103.3,72.0 1115.4,78.4 1126.6,86.3 1125.0,91.5 1129.4,94.1 1133.5,91.2 1136.5,88.2 1134.3,84.0 1127.8,80.0 1129.6,77.1 1140.8,81.8 1144.8,83.6 1144.8,81.4 1138.4,77.8 1126.5,73.1 1117.2,67.2 1105.9,65.2 1096.4,59.6 1087.1,54.3 1073.7,48.3 1071.2,43.6 1081.5,43.4 1084.5,47.0 1095.6,49.2 1109.6,57.5 1120.5,61.4 1131.4,65.3 1145.6,71.4 1149.0,75.3 1151.9,81.0 1161.6,87.4 1170.5,92.7 1177.2,98.4 1182.1,99.9 1178.0,101.2 1185.7,107.3 1188.4,110.5 1192.1,111.1 1197.5,114.9 1198.9,113.1 1202.8,115.5 1196.6,107.8 1201.0,108.6 1201.2,105.4 1205.5,107.8 1203.2,103.8 1190.4,96.9 1187.6,93.9 1181.7,88.5 1181.9,85.6 1189.2,88.8 1192.7,90.7 1190.1,86.1 1197.2,86.5 1205.6,88.9 1207.5,90.4 1211.5,94.7 1213.3,98.0 1221.6,102.8 1221.5,106.4 1227.2,107.7 1231.7,113.1 1237.1,118.8 1244.4,122.5 1252.9,125.2 1259.9,129.6 1264.7,130.2 1263.6,126.1 1273.5,130.7 1282.3,136.3 1284.3,137.6 1289.5,137.9 1292.1,135.1 1299.3,138.6 1300.7,137.4 1303.8,140.2 1305.6,144.3 1308.0,148.1 1314.7,157.3 1315.7,160.9 1317.2,165.5 1318.7,169.5 1321.3,175.4 1322.6,180.2 1319.7,182.5 1315.2,181.2 1307.9,177.7 1316.5,190.5 1324.9,201.1 1334.5,210.6 1341.0,216.3 1339.0,209.2 1336.6,200.1 1337.3,200.3 1343.1,214.7 1352.7,223.5 1365.5,237.0 1376.5,251.2 1386.8,262.7 1401.5,282.5 1406.4,293.9 1420.0,312.2 1429.2,325.3 1436.6,339.2 1446.4,353.9 1451.9,367.6 1456.1,380.1 1462.6,399.0 1465.6,407.4 1473.3,407.5 1479.6,402.3 1484.1,397.1 1486.0,392.4 1488.7,389.8 1491.1,387.3 1490.6,377.3 1491.9,374.3 1492.8,371.3 1493.7,368.1 1494.2,365.0 1492.3,355.6 1487.2,341.3 1483.6,332.2 1479.8,323.3 1472.8,310.0 1466.5,299.7 1460.1,288.6 1454.8,278.9 1456.1,283.3 1457.7,286.3 1459.8,292.3 1457.6,292.4 1455.2,291.4 1450.3,284.8 1447.6,278.4 1441.4,268.5 1443.9,274.6 1446.6,279.7 1441.3,272.3 1436.5,264.1 1427.4,251.5 1417.2,238.6 1411.3,230.3 1409.6,225.9 1412.2,226.4 1424.0,240.5 1433.1,252.8 1442.5,264.6 1448.2,270.9 1449.9,270.8 1460.1,287.1 1463.3,291.7 1466.1,296.2 1468.3,297.7 1469.4,299.8 1470.4,301.7 1468.3,297.7 1466.1,293.8 1463.9,289.8 1461.7,285.9 1459.4,281.9 1457.1,277.9 1454.7,274.0 1452.3,270.0 1447.7,262.6 1443.0,255.4 1438.2,248.2 1433.3,241.0 1428.3,234.0 1423.2,227.1 1418.0,220.2 1412.7,213.4 1407.3,206.7 1401.8,200.1 1396.2,193.6 1389.5,186.0 1382.6,178.5 1375.7,171.2 1368.6,164.0 1361.4,156.9 1354.1,150.0 1346.7,143.2 1339.2,136.5 1331.6,130.0 1323.8,123.6 1318.6,119.5 1313.3,115.3 1307.9,111.2 1302.4,107.1 1296.9,103.1 1291.2,99.1 1285.5,95.1 1279.7,91.2 1273.9,87.4 1267.9,83.6 1261.9,79.9 1255.9,76.2 1249.8,72.6 1243.6,69.1 1237.4,65.6 1231.1,62.3 1224.8,59.0 1218.4,55.7 1214.2,53.7 1210.0,51.6 1205.7,49.5 1201.3,47.5 1196.9,45.5 1192.4,43.5 1187.9,41.6 1183.3,39.6 1178.7,37.7 1174.1,35.8 1169.4,34.0 1164.7,32.2 1159.9,30.4 1155.1,28.7 1150.3,27.0 1145.5,25.3 1140.6,23.7 1135.7,22.1 1130.8,20.6 1126.0,19.1 1122.8,18.1 1119.5,17.2 1116.2,16.2 1112.8,15.3 1109.4,14.4 1105.9,13.4 1102.3,12.5 1098.7,11.6 1095.0,10.7 1091.3,9.8 1087.5,9.0 1083.6,8.1 1079.7,7.3 1075.8,6.5 1071.8,5.6 1067.7,4.9 1063.6,4.1 1059.5,3.4 1055.3,2.6 1051.1,2.0 1046.8,1.3 1042.5,0.7 1038.1,0.0 1033.7,-0.5 1029.3,-1.1 1024.9,-1.6 1020.4,-2.1 1015.8,-2.6 1011.3,-3.0 1006.7,-3.4 1004.9,-3.5 1002.8,-3.7 1000.4,-2.7 997.9,-2.7 995.2,-2.6 992.2,-2.3 989.0,-1.9 985.6,-1.4 981.9,-0.8 978.0,0.0 973.9,1.0 969.5,2.1 964.9,3.3 960.1,4.8 955.0,6.4 949.7,8.1 944.2,10.1 938.4,12.2 932.4,14.5 926.1,17.0 919.7,19.6 922.7,22.9 926.0,26.4 929.5,30.2 933.2,34.2 937.1,38.6 941.3,43.2 945.6,48.2 935.2,48.4 924.8,48.8 914.4,49.2 904.0,49.7 893.7,50.4 883.4,51.0 870.3,54.2 870.6,59.9 871.0,65.9 865.6,73.7 860.1,81.9 860.8,94.2 872.7,93.4 882.9,91.4 889.5,96.4 899.6,99.2Z M1095.3,88.3 1102.8,89.7 1112.2,91.4 1124.1,90.7 1121.8,96.1 1125.5,100.1 1124.6,102.6 1116.9,100.7 1106.7,97.4 1095.0,92.6 1093.3,89.5 1095.3,88.3Z M1053.8,65.0 1058.4,67.2 1060.4,73.1 1061.1,78.5 1056.2,78.8 1051.4,79.9 1048.5,77.0 1044.0,68.1 1044.3,65.6 1053.8,65.0Z M1211.3,123.2 1217.2,125.1 1225.9,127.9 1232.8,130.4 1236.7,130.4 1237.3,132.7 1231.2,131.5 1224.3,130.5 1217.3,128.0 1212.5,126.0 1211.3,123.2Z M1285.9,143.9 1289.7,144.3 1294.3,144.4 1298.7,143.9 1297.6,146.7 1299.1,148.7 1296.2,147.9 1293.9,149.6 1289.7,147.7 1285.9,143.9Z M396.6,451.7 394.6,464.0 393.2,475.5 392.6,484.1 392.3,492.7 393.3,495.6 394.5,498.5 396.1,501.4 398.7,503.1 402.0,511.9 403.8,517.7 404.4,529.3 405.2,541.0 407.2,550.9 408.3,572.4 412.5,575.0 416.7,580.1 423.1,585.4 429.2,593.4 432.2,605.4 437.0,604.3 446.6,611.4 458.1,612.0 469.1,623.4 478.8,636.3 489.4,643.9 494.4,645.6 496.8,654.0 501.9,672.4 502.9,685.5 499.3,706.7 491.6,722.1 490.0,734.8 486.6,748.0 485.8,758.9 488.6,770.3 493.8,790.3 497.6,805.9 498.7,819.5 501.1,834.9 501.3,844.2 504.4,853.0 502.8,861.1 496.6,859.8 490.8,860.3 486.2,864.2 485.1,870.1 484.7,875.1 489.6,884.9 496.4,896.1 500.4,904.1 501.8,909.6 504.6,915.2 509.3,924.2 510.5,928.5 514.0,934.3 517.7,939.9 520.7,944.3 522.1,946.8 518.6,943.0 515.3,939.1 511.2,936.0 518.6,944.9 526.2,953.7 536.3,965.0 535.5,964.0 534.7,963.2 534.1,962.5 533.5,961.9 540.0,968.9 546.6,975.8 550.9,980.1 555.3,984.5 559.7,988.8 564.3,993.1 568.9,997.4 575.7,1003.6 582.6,1009.6 589.6,1015.6 596.7,1021.4 603.9,1027.1 597.2,1021.8 590.6,1016.4 584.1,1010.9 577.7,1005.4 571.5,999.8 565.3,994.1 559.3,988.4 553.4,982.6 547.6,976.7 541.9,970.9 536.3,965.0 530.9,959.0 525.6,953.0 520.4,947.0 513.9,939.3 507.6,931.4 501.3,923.4 495.3,915.3 489.3,907.1 483.5,898.8 477.9,890.4 472.3,881.9 467.0,873.3 461.8,864.5 456.7,855.7 451.8,846.8 447.0,837.8 442.5,828.8 438.0,819.6 433.7,810.4 429.6,801.0 425.7,791.7 421.9,782.2 418.3,772.7 414.8,762.9 411.5,753.1 408.3,743.3 405.4,733.5 402.6,723.5 400.0,713.6 397.6,703.6 395.3,693.6 393.3,683.6 391.4,673.5 389.7,663.5 388.2,653.4 386.8,643.3 385.7,633.2 384.7,623.0 383.9,612.9 383.2,602.8 382.8,592.7 382.5,582.5 382.4,572.4 382.5,563.1 382.7,553.7 383.1,544.3 383.7,535.0 384.3,525.6 385.2,516.2 386.2,506.8 387.3,497.4 388.6,488.0 390.1,478.7 391.7,469.3 393.5,459.9 395.4,450.5 395.4,450.9 395.3,451.2 395.2,451.5 395.2,451.7 395.2,451.9 395.1,452.1 395.1,452.2 395.1,452.3 395.0,452.4 395.0,452.4 395.0,452.4 395.0,452.4 395.1,452.3 395.1,452.2 395.1,452.1 395.2,451.9 396.3,451.9 396.6,451.7Z M1246.5,124.7 1247.6,127.3 1246.2,128.3 1244.2,125.8 1246.5,124.7Z M1192.5,96.7 1201.3,100.9 1207.7,106.0 1198.0,101.5 1192.5,96.7Z" fill="none" stroke="#1a4e9c" stroke-width="6" stroke-opacity="0.32" filter="url(#b4)"/>
<g clip-path="url(#land)">
<rect x="383.6" y="-4.100000000000023" width="1153.0" height="1153.0" fill="#66502f"/>
<path d="M1387.0,263.7 1369.8,237.3 1341.3,210.0 1301.3,183.1 1249.4,158.5 1186.0,138.0 1113.0,123.8 1033.7,117.2 952.9,119.2 875.9,129.4 807.4,146.7 751.0,169.3 709.1,195.1 683.3,222.2 675.2,249.2 686.6,274.9 719.7,298.2 775.9,318.5 854.6,334.9 950.9,346.9 1055.5,353.8 1157.0,355.1 1244.7,351.0 1312.2,341.7 1357.8,327.7 1383.4,309.7 1392.1,288.1 1387.0,263.7Z" fill="#9c7a56" opacity="1" filter="url(#b25)"/>
<path d="M919.2,207.7 917.4,191.9 911.0,177.6 900.4,165.6 886.5,156.2 869.9,150.0 851.6,147.1 832.3,147.5 812.8,151.3 793.9,158.2 776.4,167.9 761.1,180.1 748.9,194.3 740.4,209.8 736.3,225.7 737.1,241.4 742.9,255.9 753.8,268.3 769.2,277.9 788.3,283.9 809.9,286.0 832.8,284.0 855.4,277.9 876.2,268.1 893.8,255.3 907.2,240.4 915.8,224.1 919.2,207.7Z" fill="#a88862" opacity="0.95" filter="url(#b14)"/>
<path d="M928.9,174.9 930.1,171.1 928.7,166.2 924.7,160.5 918.5,154.5 910.5,148.4 901.1,142.7 891.1,137.6 880.8,133.4 870.8,130.3 861.6,128.4 853.5,127.7 846.9,128.2 842.2,130.0 839.4,132.8 838.8,136.6 840.5,141.3 844.4,146.5 850.5,152.2 858.5,157.9 868.1,163.5 878.7,168.6 889.7,172.9 900.5,176.1 910.4,178.0 918.7,178.5 925.0,177.4 928.9,174.9Z" fill="#5e4d36" opacity="0.85" filter="url(#b8)"/>
<path d="M866.0,180.7 867.2,178.5 867.2,175.7 865.9,172.6 863.6,169.2 860.3,165.8 856.3,162.7 851.7,159.9 846.8,157.5 841.9,155.8 837.2,154.8 833.0,154.5 829.4,155.0 826.6,156.1 824.8,157.9 824.0,160.3 824.4,163.1 825.9,166.3 828.4,169.5 831.9,172.8 836.2,175.9 841.0,178.6 846.1,180.8 851.2,182.3 856.0,183.1 860.2,183.1 863.6,182.3 866.0,180.7Z" fill="#6a583e" opacity="0.7" filter="url(#b8)"/>
<path d="M1352.8,244.9 1343.0,227.1 1329.7,209.9 1313.5,194.0 1295.3,180.1 1275.8,168.9 1255.9,160.8 1236.2,156.2 1217.5,155.4 1200.7,158.6 1186.6,165.6 1176.0,176.4 1169.9,190.6 1168.9,207.4 1173.4,226.1 1183.6,245.5 1199.1,264.5 1219.0,281.8 1242.0,296.2 1266.4,306.9 1290.5,313.1 1312.6,314.7 1331.3,311.5 1345.7,304.1 1355.1,292.9 1359.3,278.7 1358.4,262.4 1352.8,244.9Z" fill="#a28260" opacity="0.9" filter="url(#b14)"/>
<path d="M1210.5,199.3 1205.5,189.2 1197.1,179.5 1186.0,170.5 1172.6,162.8 1157.7,156.7 1141.9,152.5 1125.9,150.5 1110.4,150.7 1096.1,153.1 1083.8,157.8 1074.2,164.3 1067.8,172.6 1065.2,182.0 1066.6,192.2 1072.2,202.6 1081.7,212.6 1094.8,221.6 1110.5,229.1 1128.0,234.5 1146.1,237.7 1163.7,238.4 1179.6,236.6 1193.0,232.5 1203.1,226.3 1209.5,218.4 1211.9,209.2 1210.5,199.3Z" fill="#9a744c" opacity="0.8" filter="url(#b14)"/>
<path d="M972.4,143.4 972.6,139.6 969.4,134.8 963.2,129.4 954.3,123.7 943.4,118.1 931.1,113.0 918.1,108.5 905.2,105.0 892.8,102.5 881.7,101.1 872.2,100.9 864.8,101.8 859.8,103.7 857.4,106.6 857.8,110.3 861.0,114.6 867.1,119.4 875.8,124.5 886.8,129.7 899.4,134.7 913.2,139.2 927.2,142.9 940.5,145.7 952.4,147.2 962.0,147.3 968.8,146.0 972.4,143.4Z" fill="#5c4c34" opacity="0.9" filter="url(#b8)"/>
<path d="M1073.9,109.0 1071.5,107.1 1065.0,104.9 1054.8,102.4 1041.4,100.1 1025.6,97.9 1008.0,96.2 989.8,95.0 971.8,94.4 955.0,94.4 940.3,94.9 928.4,95.9 920.0,97.3 915.5,98.9 915.1,100.6 919.1,102.3 927.1,103.9 938.9,105.5 953.9,107.0 971.2,108.3 989.8,109.6 1008.7,110.6 1026.7,111.4 1042.8,111.9 1056.2,111.9 1066.1,111.5 1072.1,110.5 1073.9,109.0Z" fill="#5b4c30" opacity="0.85" filter="url(#b8)"/>
<path d="M889.5,155.3 891.4,152.7 891.9,149.4 891.2,145.7 889.2,141.8 886.2,137.8 882.2,134.1 877.5,130.7 872.5,128.0 867.3,125.9 862.2,124.7 857.4,124.3 853.2,124.7 849.7,126.0 847.2,128.1 845.8,130.8 845.5,134.1 846.5,137.7 848.6,141.6 851.9,145.4 856.1,149.1 861.0,152.3 866.4,155.0 872.0,156.9 877.4,157.9 882.3,158.0 886.4,157.1 889.5,155.3Z" fill="#6a5737" opacity="0.7" filter="url(#b8)"/>
<path d="M1090.7,228.4 1088.6,222.3 1084.1,216.4 1077.5,211.1 1069.2,206.7 1059.5,203.3 1049.0,201.3 1038.1,200.5 1027.5,201.2 1017.7,203.3 1009.1,206.6 1002.2,211.1 997.5,216.4 995.1,222.3 995.4,228.5 998.2,234.7 1003.6,240.4 1011.1,245.4 1020.6,249.5 1031.3,252.3 1042.6,253.7 1054.0,253.7 1064.7,252.2 1074.2,249.3 1081.8,245.3 1087.2,240.2 1090.2,234.5 1090.7,228.4Z" fill="#6b553a" opacity="0.75" filter="url(#b8)"/>
<path d="M1106.7,206.0 1105.4,202.8 1102.9,199.7 1099.1,196.9 1094.5,194.5 1089.1,192.7 1083.2,191.5 1077.2,191.0 1071.4,191.2 1066.1,192.2 1061.4,193.8 1057.8,196.0 1055.4,198.7 1054.4,201.8 1054.7,205.0 1056.5,208.2 1059.6,211.2 1063.9,213.8 1069.1,216.0 1075.0,217.6 1081.2,218.4 1087.3,218.5 1093.0,217.9 1098.1,216.6 1102.1,214.6 1105.0,212.1 1106.5,209.2 1106.7,206.0Z" fill="#6f583c" opacity="0.6" filter="url(#b8)"/>
<path d="M1230.1,269.4 1227.9,263.5 1224.3,257.9 1219.3,252.8 1213.4,248.4 1206.7,245.0 1199.6,242.7 1192.5,241.7 1185.8,242.0 1179.7,243.7 1174.6,246.6 1170.8,250.5 1168.4,255.4 1167.8,261.0 1168.9,266.8 1171.7,272.7 1176.0,278.3 1181.6,283.3 1188.3,287.4 1195.6,290.3 1203.0,291.9 1210.3,292.2 1216.9,291.0 1222.5,288.6 1226.8,284.9 1229.5,280.3 1230.7,275.1 1230.1,269.4Z" fill="#5e4b34" opacity="0.8" filter="url(#b8)"/>
<path d="M1197.6,195.7 1196.3,193.1 1194.1,190.6 1191.2,188.3 1187.6,186.2 1183.6,184.6 1179.3,183.4 1175.0,182.8 1171.0,182.8 1167.3,183.3 1164.3,184.5 1162.0,186.1 1160.7,188.1 1160.4,190.4 1161.0,192.9 1162.7,195.5 1165.3,198.0 1168.6,200.2 1172.6,202.1 1176.9,203.5 1181.3,204.4 1185.6,204.7 1189.5,204.4 1192.9,203.6 1195.5,202.2 1197.1,200.3 1197.8,198.1 1197.6,195.7Z" fill="#7a6446" opacity="0.8" filter="url(#b4)"/>
<path d="M1165.7,221.8 1164.1,217.8 1161.3,213.8 1157.4,210.2 1152.6,207.1 1147.2,204.8 1141.5,203.2 1135.7,202.5 1130.1,202.7 1125.1,203.9 1120.9,205.9 1117.6,208.7 1115.6,212.1 1115.0,216.0 1115.7,220.1 1117.7,224.2 1121.1,228.1 1125.5,231.5 1130.8,234.3 1136.6,236.4 1142.7,237.5 1148.6,237.7 1154.0,236.9 1158.7,235.2 1162.4,232.7 1164.8,229.5 1165.9,225.8 1165.7,221.8Z" fill="#9a6f45" opacity="0.6" filter="url(#b8)"/>
<path d="M1289.2,188.3 1285.2,182.4 1279.0,176.4 1271.0,170.5 1261.6,165.2 1251.0,160.7 1240.0,157.2 1228.8,154.9 1218.2,153.9 1208.5,154.4 1200.4,156.2 1194.4,159.4 1190.8,163.7 1190.0,168.9 1192.0,174.8 1197.0,180.9 1204.6,187.1 1214.3,192.8 1225.6,197.9 1237.8,202.0 1250.1,204.8 1261.7,206.4 1272.0,206.5 1280.3,205.1 1286.4,202.5 1289.9,198.6 1290.8,193.8 1289.2,188.3Z" fill="#a88c6c" opacity="0.7" filter="url(#b14)"/>
<path d="M1327.0,219.6 1322.9,212.3 1317.7,205.1 1311.6,198.5 1305.0,192.7 1298.1,188.1 1291.5,184.8 1285.3,183.1 1279.8,183.0 1275.4,184.6 1272.2,187.7 1270.5,192.3 1270.3,198.2 1271.7,205.0 1274.7,212.4 1279.2,220.1 1284.9,227.5 1291.5,234.2 1298.6,239.8 1305.9,244.0 1312.9,246.6 1319.1,247.3 1324.3,246.2 1328.1,243.4 1330.3,239.0 1330.8,233.4 1329.7,226.8 1327.0,219.6Z" fill="#a48666" opacity="0.6" filter="url(#b14)"/>
<path d="M1308.3,181.8 1307.1,180.0 1305.4,178.2 1303.5,176.4 1301.4,174.9 1299.1,173.5 1296.9,172.6 1294.8,171.9 1292.9,171.7 1291.4,172.0 1290.3,172.6 1289.6,173.6 1289.5,174.9 1290.0,176.5 1290.9,178.3 1292.4,180.2 1294.2,182.0 1296.3,183.7 1298.5,185.2 1300.9,186.3 1303.1,187.1 1305.2,187.5 1306.9,187.5 1308.2,187.1 1309.0,186.2 1309.3,185.0 1309.0,183.5 1308.3,181.8Z" fill="#2f3a1a" opacity="0.95" filter="url(#b4)"/>
<path d="M1320.1,213.7 1317.3,206.3 1314.4,199.5 1311.7,193.4 1309.3,188.5 1307.3,184.9 1306.0,182.7 1305.3,182.1 1305.3,183.1 1306.1,185.7 1307.4,189.7 1309.3,194.9 1311.7,201.3 1314.3,208.3 1317.0,215.8 1319.7,223.2 1322.2,230.2 1324.5,236.3 1326.4,241.2 1327.8,244.6 1328.8,246.2 1329.2,245.9 1329.0,243.8 1328.2,240.0 1326.9,234.7 1325.1,228.3 1322.8,221.1 1320.1,213.7Z" fill="#4a4a28" opacity="0.7" filter="url(#b4)"/>
<path d="M1344.6,226.4 1338.0,218.3 1331.6,210.8 1325.7,204.2 1320.7,199.0 1316.8,195.4 1314.4,193.5 1313.5,193.3 1314.1,195.0 1316.3,198.5 1319.9,203.5 1324.7,209.9 1330.4,217.3 1336.7,225.5 1343.3,233.8 1349.7,242.0 1355.7,249.5 1361.0,255.9 1365.2,260.8 1368.1,263.9 1369.7,265.0 1369.9,264.0 1368.6,261.1 1365.9,256.4 1362.0,250.2 1356.9,242.8 1351.0,234.8 1344.6,226.4Z" fill="#5c4a34" opacity="0.8" filter="url(#b4)"/>
<path d="M1456.3,401.2 1449.0,391.4 1430.2,379.7 1397.3,366.7 1346.9,353.3 1276.3,341.0 1186.2,331.4 1081.8,326.1 972.5,326.0 869.7,330.9 782.4,339.6 715.8,350.6 671.4,362.3 648.8,373.4 647.4,383.2 667.4,391.5 710.2,398.2 776.9,403.4 866.3,407.7 973.1,411.2 1087.0,414.3 1195.6,416.8 1288.2,418.6 1359.1,419.0 1408.0,417.7 1438.0,414.4 1453.0,408.9 1456.3,401.2Z" fill="#6f5c33" opacity="0.9" filter="url(#b25)"/>
<path d="M1416.5,543.9 1411.4,514.2 1397.8,485.7 1375.8,459.6 1345.6,437.1 1307.9,419.6 1263.7,408.1 1215.1,403.8 1164.6,407.1 1115.3,418.1 1070.7,436.5 1033.9,461.1 1007.7,490.6 994.1,523.2 994.2,556.9 1008.0,589.8 1034.7,619.9 1072.2,645.4 1117.9,664.6 1168.4,676.6 1220.0,680.9 1269.4,677.3 1313.8,666.6 1351.3,649.6 1380.6,627.6 1401.2,601.8 1413.2,573.5 1416.5,543.9Z" fill="#2f3a1a" opacity="1" filter="url(#b25)"/>
<path d="M1039.4,444.6 1034.8,430.2 1022.1,416.6 1001.9,404.5 975.3,394.7 943.9,387.7 909.3,383.8 873.6,383.5 838.7,386.6 806.4,392.9 778.4,402.0 756.0,413.4 740.1,426.4 731.6,440.4 730.7,454.6 737.6,468.3 752.1,480.9 773.8,491.7 801.7,500.0 834.6,505.6 870.5,507.9 907.6,506.9 943.4,502.5 975.7,495.1 1002.8,485.0 1023.0,472.7 1035.4,459.0 1039.4,444.6Z" fill="#3b4420" opacity="0.9" filter="url(#b25)"/>
<path d="M1406.1,713.0 1406.5,691.1 1400.5,670.4 1388.0,652.0 1369.0,636.7 1343.9,625.6 1313.5,619.4 1279.2,618.6 1243.0,623.6 1207.3,634.1 1174.7,649.8 1147.5,669.8 1127.8,692.8 1117.0,717.4 1115.6,742.1 1123.5,765.4 1139.9,786.0 1163.3,802.7 1191.9,814.5 1223.8,821.0 1256.9,822.0 1289.4,817.5 1319.8,808.0 1346.8,794.2 1369.5,776.8 1387.3,756.9 1399.6,735.3 1406.1,713.0Z" fill="#4a4a25" opacity="0.9" filter="url(#b25)"/>
<path d="M1409.3,321.2 1404.7,310.0 1398.8,299.2 1391.7,289.3 1384.0,280.7 1375.9,273.9 1367.8,269.2 1360.3,266.9 1353.5,267.1 1347.9,269.8 1343.7,275.0 1341.3,282.5 1340.8,291.8 1342.2,302.6 1345.5,314.1 1350.7,325.9 1357.4,337.1 1365.2,347.2 1373.8,355.4 1382.5,361.3 1390.9,364.6 1398.4,365.2 1404.7,363.0 1409.4,358.2 1412.3,351.2 1413.2,342.3 1412.2,332.1 1409.3,321.2Z" fill="#8e6e4c" opacity="0.9" filter="url(#b14)"/>
<path d="M1392.9,291.2 1388.1,283.4 1383.2,276.2 1378.4,269.9 1374.0,265.0 1370.3,261.6 1367.4,259.9 1365.6,260.0 1364.9,262.0 1365.3,265.6 1366.9,270.8 1369.6,277.3 1373.0,284.7 1377.2,292.8 1381.8,300.9 1386.6,308.8 1391.3,315.9 1395.7,321.8 1399.6,326.2 1402.8,328.9 1405.1,329.6 1406.4,328.4 1406.6,325.3 1405.8,320.5 1403.9,314.4 1401.0,307.2 1397.3,299.3 1392.9,291.2Z" fill="#6e5a40" opacity="0.7" filter="url(#b8)"/>
<path d="M1462.3,445.6 1458.7,429.0 1453.9,413.3 1448.1,399.1 1441.7,387.2 1435.0,378.2 1428.5,372.4 1422.5,370.4 1417.3,372.1 1413.3,377.6 1410.4,386.7 1409.0,398.9 1408.9,413.7 1410.2,430.4 1412.9,447.8 1416.7,465.1 1421.5,481.2 1427.1,495.2 1433.2,506.1 1439.5,513.5 1445.7,516.9 1451.5,516.2 1456.6,511.5 1460.7,503.2 1463.4,491.7 1464.7,477.8 1464.3,462.1 1462.3,445.6Z" fill="#33361a" opacity="1" filter="url(#b14)"/>
<path d="M1443.0,392.4 1440.7,384.2 1437.8,376.3 1434.5,369.2 1430.9,363.1 1427.3,358.6 1423.9,355.7 1420.9,354.6 1418.4,355.3 1416.5,358.0 1415.3,362.4 1415.0,368.4 1415.4,375.6 1416.6,383.6 1418.5,392.0 1421.0,400.5 1424.0,408.3 1427.3,415.2 1430.8,420.7 1434.3,424.5 1437.5,426.4 1440.4,426.4 1442.7,424.4 1444.4,420.5 1445.3,415.0 1445.4,408.3 1444.6,400.6 1443.0,392.4Z" fill="#403c22" opacity="0.95" filter="url(#b8)"/>
<path d="M1443.5,476.0 1441.9,466.6 1439.6,457.6 1436.6,449.5 1433.1,442.8 1429.3,437.7 1425.4,434.6 1421.7,433.6 1418.3,434.8 1415.4,438.2 1413.1,443.5 1411.6,450.6 1411.0,459.1 1411.2,468.4 1412.3,478.1 1414.1,487.7 1416.7,496.6 1419.8,504.2 1423.4,510.2 1427.1,514.3 1431.0,516.2 1434.6,515.8 1437.9,513.2 1440.6,508.5 1442.7,502.1 1443.8,494.2 1444.1,485.4 1443.5,476.0Z" fill="#2f3618" opacity="0.9" filter="url(#b14)"/>
<path d="M1463.8,414.8 1462.6,410.4 1461.1,406.2 1459.3,402.3 1457.3,399.0 1455.3,396.5 1453.2,394.8 1451.3,394.2 1449.7,394.6 1448.4,395.9 1447.5,398.3 1447.0,401.4 1447.0,405.2 1447.5,409.5 1448.5,414.0 1449.8,418.5 1451.5,422.7 1453.4,426.3 1455.4,429.3 1457.5,431.4 1459.5,432.5 1461.3,432.5 1462.8,431.5 1463.9,429.6 1464.6,426.8 1464.8,423.2 1464.5,419.2 1463.8,414.8Z" fill="#785a40" opacity="0.8" filter="url(#b8)"/>
<path d="M1509.7,484.9 1507.5,472.1 1504.3,459.7 1500.3,448.4 1495.7,438.8 1490.7,431.4 1485.6,426.6 1480.6,424.6 1475.9,425.7 1472.0,429.9 1468.8,437.0 1466.8,446.6 1465.9,458.4 1466.3,471.6 1468.0,485.4 1470.9,499.1 1474.8,511.8 1479.5,522.7 1484.7,531.3 1490.0,537.0 1495.2,539.7 1500.1,539.2 1504.2,535.6 1507.5,529.2 1509.7,520.5 1510.9,509.8 1510.9,497.7 1509.7,484.9Z" fill="#7a563a" opacity="0.95" filter="url(#b14)"/>
<path d="M1505.9,451.1 1504.9,447.6 1503.2,444.1 1500.9,440.8 1498.0,437.7 1494.5,435.1 1490.7,433.2 1486.6,432.0 1482.5,431.5 1478.6,432.0 1475.2,433.3 1472.5,435.4 1470.8,438.1 1470.3,441.4 1470.9,445.0 1472.7,448.7 1475.5,452.3 1479.2,455.6 1483.3,458.4 1487.8,460.5 1492.1,461.9 1496.1,462.6 1499.6,462.3 1502.4,461.3 1504.4,459.6 1505.7,457.2 1506.1,454.3 1505.9,451.1Z" fill="#6c543c" opacity="0.8" filter="url(#b8)"/>
<path d="M1495.8,526.9 1494.8,517.9 1493.2,509.3 1490.9,501.6 1488.2,495.1 1485.1,490.3 1481.9,487.3 1478.7,486.4 1475.6,487.6 1472.9,490.9 1470.7,496.2 1469.1,503.1 1468.2,511.3 1468.0,520.3 1468.5,529.7 1469.8,538.9 1471.8,547.4 1474.3,554.6 1477.2,560.3 1480.3,564.0 1483.6,565.7 1486.8,565.2 1489.7,562.6 1492.2,558.0 1494.1,551.8 1495.4,544.3 1496.0,535.8 1495.8,526.9Z" fill="#6a4a30" opacity="0.9" filter="url(#b14)"/>
<path d="M1480.9,499.6 1479.9,493.5 1478.4,487.6 1476.4,482.4 1474.0,478.0 1471.2,474.6 1468.3,472.5 1465.5,471.8 1462.7,472.5 1460.3,474.7 1458.3,478.1 1456.9,482.7 1456.1,488.1 1456.0,494.2 1456.6,500.5 1457.8,506.6 1459.7,512.4 1462.0,517.3 1464.7,521.2 1467.6,523.9 1470.6,525.1 1473.4,524.9 1475.9,523.3 1478.1,520.4 1479.7,516.3 1480.7,511.3 1481.1,505.6 1480.9,499.6Z" fill="#7a5238" opacity="0.6" filter="url(#b8)"/>
<path d="M1469.5,558.8 1468.8,549.5 1467.2,540.6 1464.8,532.6 1461.7,525.9 1458.0,521.0 1454.0,518.1 1449.8,517.3 1445.7,518.7 1442.0,522.3 1438.7,528.0 1436.2,535.3 1434.4,544.0 1433.6,553.4 1433.8,563.2 1434.9,572.8 1436.9,581.5 1439.7,588.9 1443.2,594.7 1447.1,598.4 1451.2,600.0 1455.3,599.3 1459.3,596.4 1462.8,591.6 1465.7,585.0 1467.9,577.1 1469.1,568.2 1469.5,558.8Z" fill="#5e422a" opacity="0.95" filter="url(#b14)"/>
<path d="M1445.3,572.4 1445.0,562.8 1443.9,553.7 1442.3,545.5 1440.1,538.8 1437.5,533.9 1434.8,531.0 1432.0,530.3 1429.3,531.9 1426.8,535.7 1424.7,541.5 1423.1,549.0 1421.9,557.8 1421.4,567.5 1421.4,577.3 1421.9,587.0 1423.1,595.8 1424.7,603.3 1426.8,609.1 1429.3,612.9 1432.0,614.5 1434.8,613.8 1437.5,610.9 1440.1,606.0 1442.3,599.3 1443.9,591.1 1445.0,582.0 1445.3,572.4Z" fill="#4a4624" opacity="0.9" filter="url(#b8)"/>
<path d="M1469.8,596.8 1469.9,589.3 1469.5,582.2 1468.9,575.9 1467.9,570.7 1466.7,566.9 1465.4,564.7 1464.0,564.3 1462.7,565.6 1461.4,568.6 1460.3,573.1 1459.3,579.0 1458.6,585.8 1458.1,593.3 1457.9,600.9 1457.9,608.3 1458.2,615.1 1458.8,620.9 1459.7,625.4 1460.7,628.3 1462.0,629.5 1463.4,629.0 1464.9,626.7 1466.3,622.9 1467.6,617.7 1468.6,611.4 1469.4,604.3 1469.8,596.8Z" fill="#36361a" opacity="0.95" filter="url(#b8)"/>
<path d="M1421.2,558.2 1420.5,548.4 1418.9,539.0 1416.3,530.7 1413.0,523.8 1409.2,518.7 1405.0,515.7 1400.8,514.9 1396.6,516.5 1392.8,520.3 1389.5,526.2 1387.0,533.9 1385.2,542.9 1384.4,552.7 1384.6,562.9 1385.7,572.8 1387.7,581.8 1390.5,589.6 1393.9,595.6 1397.8,599.5 1402.1,601.1 1406.3,600.5 1410.4,597.5 1414.1,592.5 1417.2,585.6 1419.5,577.3 1420.8,568.0 1421.2,558.2Z" fill="#3a401c" opacity="0.9" filter="url(#b14)"/>
<path d="M1452.8,647.8 1453.0,636.8 1451.8,626.5 1449.2,617.3 1445.2,609.8 1440.1,604.3 1434.1,601.2 1427.5,600.7 1420.7,602.9 1414.1,607.6 1408.1,614.7 1402.9,623.8 1398.9,634.3 1396.4,645.7 1395.4,657.3 1396.1,668.4 1398.3,678.4 1402.0,686.8 1406.9,693.0 1412.7,696.9 1419.0,698.1 1425.6,696.8 1432.1,692.9 1438.2,686.8 1443.5,678.8 1447.9,669.3 1451.0,658.8 1452.8,647.8Z" fill="#5e4629" opacity="0.95" filter="url(#b14)"/>
<path d="M1455.4,667.6 1456.5,655.8 1457.0,644.7 1456.7,634.7 1455.9,626.6 1454.6,620.6 1453.0,617.3 1451.0,616.6 1448.9,618.8 1446.8,623.8 1444.6,631.1 1442.6,640.5 1440.7,651.4 1439.0,663.3 1437.6,675.3 1436.6,686.9 1436.0,697.5 1435.9,706.4 1436.3,713.2 1437.4,717.5 1439.0,719.3 1441.1,718.3 1443.5,714.7 1446.2,708.6 1448.9,700.4 1451.5,690.5 1453.7,679.4 1455.4,667.6Z" fill="#33341a" opacity="0.95" filter="url(#b8)"/>
<path d="M1449.4,701.1 1449.8,695.1 1449.0,689.5 1447.1,684.6 1444.1,680.7 1440.1,678.0 1435.3,676.7 1430.0,676.9 1424.4,678.5 1418.8,681.5 1413.7,685.8 1409.2,691.0 1405.7,697.0 1403.5,703.4 1402.5,709.8 1403.0,715.9 1404.7,721.2 1407.7,725.6 1411.7,728.7 1416.4,730.5 1421.6,730.9 1427.0,729.7 1432.3,727.2 1437.2,723.5 1441.6,718.8 1445.2,713.3 1447.8,707.3 1449.4,701.1Z" fill="#46421e" opacity="0.9" filter="url(#b14)"/>
<path d="M1445.3,757.9 1447.2,747.8 1447.8,738.4 1447.0,730.1 1444.8,723.5 1441.4,718.8 1436.9,716.5 1431.5,716.6 1425.6,719.3 1419.6,724.3 1413.6,731.4 1408.1,740.2 1403.4,750.3 1399.8,761.0 1397.4,771.6 1396.3,781.6 1396.7,790.5 1398.4,797.7 1401.3,802.9 1405.3,805.8 1410.2,806.4 1415.7,804.7 1421.5,800.7 1427.4,794.7 1432.9,787.0 1438.0,778.0 1442.2,768.2 1445.3,757.9Z" fill="#38361a" opacity="0.95" filter="url(#b14)"/>
<path d="M1399.9,825.8 1402.2,817.5 1403.4,809.7 1403.4,803.0 1402.2,797.5 1399.9,793.8 1396.7,792.0 1392.7,792.2 1388.1,794.4 1383.2,798.6 1378.3,804.5 1373.6,811.8 1369.4,820.0 1365.9,828.6 1363.3,837.2 1361.6,845.3 1361.1,852.4 1361.7,858.2 1363.4,862.4 1366.0,864.8 1369.5,865.3 1373.7,863.9 1378.4,860.7 1383.2,855.9 1388.1,849.6 1392.7,842.3 1396.7,834.2 1399.9,825.8Z" fill="#3c3a1c" opacity="0.95" filter="url(#b14)"/>
<path d="M1373.7,874.8 1376.0,868.3 1377.2,862.3 1377.3,857.1 1376.4,853.0 1374.4,850.3 1371.5,849.1 1367.8,849.5 1363.5,851.5 1359.0,854.9 1354.4,859.7 1349.9,865.5 1346.0,871.9 1342.6,878.7 1340.1,885.4 1338.5,891.6 1338.0,897.0 1338.5,901.4 1339.9,904.5 1342.3,906.2 1345.5,906.4 1349.4,905.2 1353.7,902.5 1358.2,898.6 1362.7,893.6 1366.9,887.7 1370.7,881.4 1373.7,874.8Z" fill="#453e20" opacity="0.95" filter="url(#b14)"/>
<path d="M1374.2,819.4 1376.5,808.0 1376.7,797.3 1374.7,787.9 1370.5,780.5 1364.3,775.3 1356.5,772.8 1347.4,773.2 1337.7,776.4 1327.8,782.4 1318.3,790.8 1309.9,801.0 1303.0,812.6 1298.0,824.8 1295.1,836.8 1294.5,848.1 1296.1,857.9 1299.8,865.8 1305.3,871.4 1312.4,874.5 1320.6,874.9 1329.5,872.8 1338.7,868.1 1347.8,861.3 1356.3,852.5 1363.8,842.3 1369.9,831.1 1374.2,819.4Z" fill="#554426" opacity="0.9" filter="url(#b14)"/>
<path d="M1314.5,897.9 1319.4,879.5 1320.0,862.1 1316.1,846.7 1307.7,834.2 1295.1,825.6 1278.9,821.3 1260.3,822.0 1240.2,827.5 1220.1,837.6 1201.2,851.8 1184.9,869.0 1172.1,888.1 1163.4,907.9 1159.3,927.1 1159.5,944.6 1164.0,959.5 1172.0,971.3 1183.2,979.3 1196.8,983.5 1212.2,983.9 1228.9,980.4 1246.1,973.2 1263.1,962.8 1279.3,949.4 1293.7,933.7 1305.7,916.2 1314.5,897.9Z" fill="#5a4024" opacity="1" filter="url(#b25)"/>
<path d="M1209.2,889.6 1211.7,875.4 1212.2,861.7 1210.6,849.5 1207.2,839.3 1202.1,832.0 1195.6,828.1 1188.1,827.6 1180.1,830.9 1172.0,837.6 1164.4,847.3 1157.6,859.4 1152.0,873.1 1147.9,887.6 1145.4,902.0 1144.5,915.5 1145.3,927.5 1147.7,937.3 1151.6,944.6 1156.8,949.1 1163.0,950.7 1170.0,949.3 1177.6,945.0 1185.3,937.9 1192.7,928.4 1199.4,916.8 1205.1,903.7 1209.2,889.6Z" fill="#785834" opacity="0.9" filter="url(#b14)"/>
<path d="M1234.7,962.0 1236.6,955.0 1236.3,948.6 1233.9,943.1 1229.4,938.8 1223.0,936.0 1215.1,934.9 1206.1,935.5 1196.5,937.9 1187.0,941.9 1178.1,947.3 1170.4,953.7 1164.3,960.8 1160.0,968.2 1157.9,975.3 1157.9,981.9 1160.0,987.6 1164.0,992.1 1169.6,995.2 1176.6,996.8 1184.6,996.8 1193.2,995.2 1201.9,992.2 1210.5,987.8 1218.4,982.4 1225.3,976.0 1230.9,969.1 1234.7,962.0Z" fill="#6e4e2c" opacity="0.9" filter="url(#b14)"/>
<path d="M1264.1,974.8 1265.7,970.1 1265.4,965.9 1263.3,962.5 1259.2,960.0 1253.6,958.7 1246.5,958.5 1238.5,959.5 1230.0,961.7 1221.5,964.9 1213.5,969.0 1206.4,973.7 1200.8,978.7 1197.0,983.9 1195.0,988.8 1195.0,993.2 1196.9,996.9 1200.6,999.7 1205.8,1001.5 1212.2,1002.1 1219.5,1001.5 1227.3,999.9 1235.2,997.3 1242.9,993.7 1249.9,989.5 1256.0,984.7 1260.8,979.8 1264.1,974.8Z" fill="#523a20" opacity="0.95" filter="url(#b14)"/>
<path d="M1289.7,937.9 1291.7,931.9 1292.3,926.5 1291.5,921.7 1289.1,918.1 1285.5,915.7 1280.6,914.8 1275.0,915.3 1268.7,917.4 1262.3,920.8 1256.2,925.4 1250.5,930.9 1245.8,937.0 1242.1,943.3 1239.8,949.4 1238.9,955.1 1239.4,960.0 1241.3,963.9 1244.4,966.6 1248.5,968.0 1253.6,968.0 1259.2,966.7 1265.2,964.0 1271.2,960.2 1276.9,955.5 1282.1,950.0 1286.5,944.0 1289.7,937.9Z" fill="#5c4226" opacity="0.8" filter="url(#b14)"/>
<path d="M1316.9,945.7 1320.5,937.9 1322.7,930.6 1323.6,924.2 1323.1,919.2 1321.1,915.7 1317.9,914.2 1313.6,914.6 1308.4,917.0 1302.7,921.2 1296.8,927.1 1291.1,934.1 1285.7,941.9 1281.1,950.0 1277.4,958.0 1274.8,965.4 1273.4,971.8 1273.2,976.9 1274.4,980.5 1276.7,982.4 1280.2,982.7 1284.7,981.3 1289.8,978.2 1295.5,973.7 1301.4,967.9 1307.1,961.1 1312.4,953.5 1316.9,945.7Z" fill="#322e16" opacity="0.95" filter="url(#b14)"/>
<path d="M1256.7,995.9 1256.5,994.3 1254.1,993.3 1249.3,992.9 1242.3,993.1 1233.5,993.9 1223.2,995.3 1212.0,997.1 1200.5,999.2 1189.4,1001.5 1179.4,1004.0 1171.0,1006.5 1164.9,1008.9 1161.3,1011.1 1160.6,1012.9 1162.6,1014.4 1167.3,1015.3 1174.3,1015.6 1183.2,1015.4 1193.4,1014.5 1204.2,1013.0 1215.2,1011.0 1225.8,1008.6 1235.4,1005.9 1243.6,1003.1 1250.0,1000.4 1254.4,998.0 1256.7,995.9Z" fill="#382e18" opacity="0.9" filter="url(#b8)"/>
<path d="M1339.9,902.9 1342.5,895.8 1344.2,889.2 1344.9,883.4 1344.5,878.8 1343.1,875.6 1340.8,874.0 1337.6,874.2 1333.9,876.1 1329.7,879.7 1325.4,884.8 1321.1,890.9 1317.1,897.8 1313.5,905.1 1310.7,912.3 1308.6,919.1 1307.4,925.1 1307.2,929.9 1308.0,933.4 1309.7,935.5 1312.3,936.0 1315.6,934.9 1319.5,932.2 1323.8,928.2 1328.2,923.0 1332.5,916.9 1336.5,910.0 1339.9,902.9Z" fill="#3c3619" opacity="0.9" filter="url(#b8)"/>
<path d="M1362.5,856.0 1364.2,849.3 1364.4,843.1 1362.9,837.8 1360.0,833.7 1355.7,831.0 1350.1,829.9 1343.7,830.6 1336.8,832.8 1329.8,836.7 1323.0,841.9 1317.0,848.1 1312.0,855.0 1308.3,862.2 1306.2,869.3 1305.7,875.8 1306.8,881.5 1309.4,886.0 1313.3,889.1 1318.4,890.7 1324.2,890.7 1330.7,889.1 1337.3,886.0 1343.8,881.6 1349.8,876.1 1355.1,869.8 1359.5,863.0 1362.5,856.0Z" fill="#4c4024" opacity="0.9" filter="url(#b14)"/>
<path d="M1470.8,798.2 1474.7,782.5 1477.4,767.9 1478.8,755.2 1479.0,745.1 1478.0,738.5 1476.1,735.6 1473.4,736.9 1470.1,742.1 1466.4,751.2 1462.4,763.4 1458.1,778.0 1453.7,794.0 1449.3,810.5 1445.0,826.5 1441.1,841.1 1437.8,853.5 1435.4,863.2 1434.2,869.9 1434.4,873.3 1436.0,873.4 1439.0,870.2 1443.2,863.8 1448.4,854.6 1454.2,842.9 1460.2,829.1 1465.8,814.0 1470.8,798.2Z" fill="#4e3c24" opacity="1" filter="url(#b8)"/>
<path d="M1474.6,790.6 1477.7,778.4 1480.2,766.8 1482.0,756.6 1483.1,748.2 1483.6,742.3 1483.4,739.2 1482.7,739.1 1481.6,742.1 1480.0,748.0 1477.9,756.4 1475.4,766.8 1472.6,778.5 1469.5,790.8 1466.2,803.1 1462.9,814.7 1459.8,825.0 1457.2,833.4 1455.4,839.6 1454.4,843.4 1454.4,844.6 1455.4,843.2 1457.4,839.3 1460.2,832.9 1463.6,824.4 1467.3,814.2 1471.1,802.8 1474.6,790.6Z" fill="#30341a" opacity="0.9" filter="url(#b4)"/>
<path d="M1466.4,306.8 1455.1,285.2 1442.4,264.4 1428.9,245.1 1415.2,228.2 1402.1,214.4 1390.1,204.3 1379.8,198.3 1371.6,196.8 1365.9,200.0 1363.0,208.1 1363.1,221.0 1366.5,238.4 1373.0,259.4 1382.7,283.0 1395.0,307.7 1409.3,331.8 1424.7,353.5 1440.1,371.5 1454.5,384.5 1466.9,391.8 1476.6,393.2 1483.2,388.9 1486.3,379.3 1485.9,365.4 1482.2,347.9 1475.6,328.0 1466.4,306.8Z" fill="#96724e" opacity="1" filter="url(#b25)"/>
<path d="M1439.7,324.7 1431.4,310.8 1423.2,298.0 1415.4,287.0 1408.7,278.2 1403.5,272.1 1400.1,269.0 1398.8,269.0 1399.7,272.1 1402.7,278.3 1407.5,287.1 1413.8,298.3 1421.3,311.3 1429.3,325.4 1437.5,339.7 1445.3,353.6 1452.4,366.2 1458.4,376.7 1463.2,384.6 1466.5,389.5 1468.4,391.0 1468.6,389.1 1467.4,383.9 1464.5,375.8 1460.1,365.1 1454.4,352.6 1447.5,338.8 1439.7,324.7Z" fill="#54452d" opacity="0.9" filter="url(#b8)"/>
<path d="M1394.2,256.6 1387.1,247.3 1380.1,238.8 1373.6,231.4 1368.0,225.7 1363.7,221.8 1360.8,219.9 1359.6,220.1 1360.2,222.4 1362.4,226.8 1366.2,232.9 1371.4,240.6 1377.5,249.5 1384.4,259.1 1391.4,268.8 1398.4,278.2 1404.8,286.6 1410.4,293.7 1414.9,298.9 1418.2,302.0 1420.0,302.8 1420.3,301.3 1419.1,297.5 1416.4,291.8 1412.4,284.3 1407.2,275.7 1401.0,266.3 1394.2,256.6Z" fill="#5f4e35" opacity="0.85" filter="url(#b8)"/>
<path d="M1475.7,383.5 1474.3,379.3 1472.2,375.1 1469.7,371.1 1466.9,367.6 1463.9,364.8 1460.8,362.7 1457.7,361.6 1455.0,361.4 1452.6,362.2 1450.7,364.0 1449.5,366.7 1449.1,370.1 1449.5,374.1 1450.7,378.4 1452.6,382.8 1455.1,387.0 1458.1,390.8 1461.3,394.1 1464.7,396.5 1467.9,398.0 1470.8,398.5 1473.2,398.0 1475.1,396.6 1476.3,394.2 1476.8,391.2 1476.6,387.5 1475.7,383.5Z" fill="#5a4a30" opacity="0.85" filter="url(#b8)"/>
<path d="M1379.1,210.9 1374.4,204.1 1368.7,197.4 1362.3,190.9 1355.5,185.0 1348.7,180.1 1342.1,176.3 1336.0,173.8 1330.9,172.9 1326.8,173.5 1324.1,175.6 1322.9,179.2 1323.3,184.1 1325.5,190.1 1329.3,196.8 1334.5,203.9 1340.9,211.0 1348.2,217.7 1355.7,223.5 1363.2,228.1 1370.1,231.2 1376.0,232.8 1380.6,232.6 1383.6,230.8 1384.9,227.5 1384.5,222.9 1382.6,217.2 1379.1,210.9Z" fill="#9a7c5a" opacity="0.9" filter="url(#b14)"/>
<path d="M1326.8,167.3 1323.1,162.2 1319.4,157.5 1315.8,153.2 1312.4,149.6 1309.6,146.9 1307.4,145.1 1306.0,144.4 1305.4,144.8 1305.7,146.3 1306.8,148.8 1308.7,152.3 1311.3,156.5 1314.3,161.2 1317.7,166.3 1321.3,171.4 1324.9,176.3 1328.3,180.6 1331.3,184.1 1333.8,186.6 1335.7,188.0 1336.8,188.1 1337.0,186.9 1336.5,184.5 1335.1,181.2 1332.9,177.0 1330.1,172.3 1326.8,167.3Z" fill="#4e4628" opacity="0.9" filter="url(#b8)"/>
<path d="M1328.3,139.9 1321.9,133.8 1313.1,127.0 1302.3,119.7 1289.8,112.4 1275.9,105.4 1261.1,99.2 1245.9,94.1 1231.1,90.3 1217.3,88.2 1205.5,87.7 1196.5,88.8 1191.2,91.6 1190.1,95.8 1193.7,101.1 1201.8,107.4 1214.1,114.3 1229.8,121.4 1247.7,128.5 1266.4,135.0 1284.4,140.8 1300.6,145.4 1313.9,148.6 1323.8,150.1 1330.1,150.0 1332.8,148.2 1332.0,144.7 1328.3,139.9Z" fill="#3e3522" opacity="1" filter="url(#b14)"/>
<path d="M1348.3,153.8 1344.2,149.7 1339.1,145.1 1333.3,140.5 1327.0,135.9 1320.4,131.7 1314.0,128.0 1307.8,125.1 1302.3,123.1 1297.7,122.1 1294.3,122.1 1292.4,123.3 1292.1,125.5 1293.6,128.6 1296.8,132.4 1301.7,136.9 1307.9,141.6 1315.0,146.4 1322.6,151.0 1330.1,155.1 1337.2,158.5 1343.2,160.9 1348.0,162.4 1351.2,162.7 1352.8,162.0 1352.8,160.1 1351.2,157.4 1348.3,153.8Z" fill="#4e4026" opacity="0.95" filter="url(#b14)"/>
<path d="M1373.9,184.4 1368.9,178.3 1363.1,172.1 1356.9,166.2 1350.6,160.7 1344.4,156.1 1338.7,152.4 1333.7,149.9 1329.6,148.6 1326.7,148.8 1325.2,150.4 1325.1,153.3 1326.5,157.5 1329.4,162.7 1333.7,168.7 1339.2,175.1 1345.5,181.6 1352.4,187.8 1359.3,193.3 1366.0,197.7 1371.8,200.9 1376.6,202.7 1380.0,202.9 1381.8,201.6 1382.0,198.9 1380.7,195.0 1377.9,190.0 1373.9,184.4Z" fill="#8a6f4c" opacity="0.9" filter="url(#b14)"/>
<path d="M1206.9,99.6 1202.7,94.5 1197.4,89.6 1191.3,85.1 1184.8,81.2 1178.2,78.0 1171.8,75.6 1165.8,74.3 1160.6,74.0 1156.4,74.8 1153.4,76.7 1151.7,79.5 1151.5,83.2 1152.8,87.7 1155.6,92.6 1159.9,97.8 1165.4,102.9 1171.8,107.7 1178.9,111.8 1186.1,115.0 1193.1,117.0 1199.4,117.8 1204.5,117.3 1208.3,115.6 1210.5,112.7 1210.9,108.9 1209.7,104.4 1206.9,99.6Z" fill="#403c22" opacity="1" filter="url(#b14)"/>
<path d="M1145.8,76.5 1139.9,69.1 1132.0,62.0 1122.7,55.8 1112.5,50.5 1102.0,46.4 1091.5,43.5 1081.5,42.0 1072.4,42.0 1064.4,43.3 1057.9,46.1 1053.1,50.3 1050.5,55.8 1050.4,62.4 1052.8,69.8 1057.8,77.6 1065.5,85.4 1075.4,92.6 1086.9,98.8 1099.5,103.4 1112.1,106.2 1124.0,106.9 1134.4,105.6 1142.4,102.3 1147.7,97.3 1150.0,91.1 1149.3,84.0 1145.8,76.5Z" fill="#454528" opacity="1" filter="url(#b14)"/>
<path d="M981.5,76.4 979.4,70.1 974.1,64.3 966.1,59.4 956.0,55.5 944.1,52.9 931.2,51.6 917.7,51.6 904.3,53.1 891.3,55.9 879.5,59.8 869.3,64.8 861.3,70.6 856.0,76.9 853.9,83.5 855.3,89.9 860.3,95.7 868.7,100.7 880.3,104.5 894.2,106.9 909.8,107.7 925.9,106.8 941.4,104.4 955.3,100.5 966.8,95.4 975.2,89.5 980.1,83.0 981.5,76.4Z" fill="#5e5330" opacity="1" filter="url(#b14)"/>
<path d="M1400.5,200.5 1390.6,189.0 1380.3,177.8 1370.1,167.2 1360.5,157.7 1351.9,149.8 1344.8,143.7 1339.6,139.7 1336.4,138.0 1335.5,138.7 1336.8,141.9 1340.4,147.6 1346.1,155.6 1353.7,165.6 1362.9,177.1 1373.2,189.5 1384.0,202.0 1394.7,213.9 1404.7,224.2 1413.3,232.4 1419.9,237.8 1424.3,240.3 1426.1,239.6 1425.4,236.0 1422.2,229.8 1416.7,221.5 1409.3,211.5 1400.5,200.5Z" fill="#7a6242" opacity="0.9" filter="url(#b14)"/>
<path d="M541.3,715.8 528.5,623.7 517.5,535.5 507.8,459.6 498.7,401.6 488.6,363.7 476.2,345.9 460.8,346.8 442.7,365.2 423.5,399.5 405.7,448.0 392.6,508.4 387.1,577.4 391.3,651.0 405.9,724.8 429.6,794.5 459.9,856.4 493.2,908.0 525.4,947.9 553.1,976.1 573.8,992.6 586.3,997.5 590.8,990.1 588.3,968.7 580.3,931.0 568.6,875.3 555.0,802.2 541.3,715.8Z" fill="#3e4420" opacity="1" filter="url(#b25)"/>
<path d="M503.6,698.4 500.4,679.3 496.5,661.0 491.9,644.6 486.8,631.1 481.5,621.1 476.1,615.4 470.9,614.0 466.2,617.1 462.2,624.4 459.2,635.5 457.6,649.7 457.4,666.1 458.7,684.0 461.6,702.3 465.8,720.1 471.1,736.5 477.1,750.7 483.3,762.0 489.4,769.9 495.0,773.9 499.8,773.8 503.4,769.6 505.9,761.4 507.1,749.6 507.1,734.6 505.9,717.2 503.6,698.4Z" fill="#56502a" opacity="0.9" filter="url(#b14)"/>
<rect x="383.6" y="90" width="1153.0" height="970" filter="url(#grain)" opacity="0.22"/>
<rect x="383.6" y="90" width="1153.0" height="970" filter="url(#grain2)" opacity="0.15"/>
</g>
<path d="M1228.1,93.3 1235.8,94.9 1243.3,96.5 1246.4,95.1 1251.7,95.4 1261.8,98.8 1274.3,106.2 1286.2,112.0 1295.6,115.9 1301.2,116.2 1290.3,107.3 1278.8,100.0 1269.7,94.4 1260.6,89.0 1249.9,83.0 1245.0,81.8 1240.1,82.1 1225.1,74.0 1223.0,70.7 1211.3,65.7 1209.3,67.1 1207.1,68.6 1206.8,72.9 1207.6,77.4 1209.1,81.5 1217.3,87.5 1228.1,93.3Z M1381.7,179.7 1379.6,178.0 1377.4,176.3 1372.1,171.5 1366.6,166.7 1355.6,156.4 1344.1,144.1 1329.9,131.6 1316.9,121.1 1300.7,108.4 1298.4,106.0 1295.8,103.7 1299.0,104.6 1301.4,106.4 1303.7,108.1 1312.2,114.4 1320.6,121.0 1326.1,125.5 1330.7,130.9 1345.5,143.7 1357.5,154.9 1367.0,164.1 1374.4,171.8 1381.7,179.7Z" fill="#0a2458"/>
<path d="M1406.3,569.5 1409.3,569.1 1412.3,568.6 1415.2,568.1 1417.0,573.1 1418.7,578.1 1417.4,582.4 1416.0,586.7 1415.3,591.4 1414.6,596.2 1413.9,601.0 1411.8,603.9 1409.6,606.8 1407.4,609.7 1404.4,608.8 1401.4,607.9 1398.3,607.1 1397.8,602.0 1397.2,597.0 1396.6,591.9 1396.0,586.9 1397.0,582.0 1398.0,577.2 1398.9,572.4 1402.6,571.0 1406.3,569.5Z" fill="#070b0c" filter="url(#b1)"/>
<rect x="383.6" y="-4.100000000000023" width="1153.0" height="1153.0" fill="url(#night)"/>
<circle cx="960.1" cy="572.4" r="576.5" fill="url(#limb)"/>
</g>
<clipPath id="disk2"><circle cx="960.1" cy="572.4" r="582.5"/></clipPath>
<g clip-path="url(#disk2)" fill="none" stroke="#ece43c" stroke-width="1.700" stroke-linejoin="round" stroke-linecap="round">
<path d="M893.0,101.8L899.3,100.8L915.1,105.9L926.7,104.8L934.6,106.4L953.2,101.2L961.2,98.8L974.7,94.9L993.6,92.9L1004.7,92.4L1017.1,94.3L1030.0,92.5L1046.5,94.2L1057.0,93.3L1067.3,92.5L1080.5,95.0L1074.9,96.8L1077.9,100.1L1079.3,104.9L1086.2,110.2L1084.1,114.2L1077.2,117.0L1078.0,120.5L1085.3,122.7L1090.3,124.8L1096.7,127.9L1105.4,131.3L1115.5,132.2L1128.6,136.1L1138.1,138.8L1146.1,146.9L1158.5,151.9L1170.4,156.1L1184.1,162.4L1189.9,164.1L1196.5,160.4L1193.4,152.7L1191.5,148.0L1195.6,144.3L1204.4,143.2L1214.6,145.7L1220.7,149.2L1231.1,154.4L1241.5,158.0L1244.8,161.1L1255.4,164.0L1264.0,166.6L1275.7,172.4L1282.2,174.7L1288.3,173.6L1290.9,171.8L1296.1,172.3L1302.2,174.6L1307.2,177.5L1316.1,190.4L1322.5,200.5L1333.2,212.0L1339.9,220.0L1349.3,232.6L1359.3,245.6L1368.1,256.6L1371.8,260.5L1375.3,270.4L1385.6,281.2L1394.5,296.0L1401.1,312.6L1405.8,322.6L1411.0,328.2L1417.4,334.2L1427.1,353.5L1432.2,365.2L1437.2,372.1L1444.3,378.4L1452.7,390.9L1460.4,402.1L1465.2,409.1L1466.3,416.6L1464.3,419.8L1467.4,421.6L1470.9,428.4L1476.9,435.7L1479.7,437.5L1483.6,433.6L1488.3,431.2L1492.2,431.1L1495.9,431.0L1499.3,429.8L1501.4,426.1L1503.3,436.7L1505.6,444.2L1504.4,444.9L1506.3,460.4L1505.7,472.1L1505.8,484.2L1506.0,496.4L1504.8,504.9L1503.3,514.8L1501.0,523.4L1497.3,536.0L1493.4,546.2L1491.0,550.0L1485.4,561.8L1478.7,577.8L1474.4,589.9L1468.3,603.6L1462.6,616.0L1459.2,627.0L1455.4,636.8L1453.9,642.3L1451.0,654.7L1453.0,665.2L1452.0,678.6L1450.6,693.2L1449.9,707.5L1452.9,710.9L1453.8,715.8L1450.9,727.5L1447.7,745.4L1444.0,764.1L1442.1,770.4L1433.1,786.4L1422.5,798.0L1412.6,807.1L1406.0,813.2L1397.7,824.0L1388.5,832.8L1382.9,838.5L1378.5,847.2L1379.5,852.4L1377.1,863.6L1373.7,874.8L1369.6,884.9L1364.4,892.1L1352.8,899.9L1346.3,903.4L1336.8,913.4L1334.3,923.4L1323.6,938.7L1318.8,943.5L1310.0,950.8L1304.6,956.4L1294.6,966.4L1283.3,975.6L1273.4,983.5L1262.1,991.6L1248.2,1000.0L1237.9,1004.4L1228.8,1007.8L1216.6,1008.9L1203.6,1012.3L1195.1,1015.3L1180.6,1020.8L1174.5,1020.0L1167.4,1019.0L1168.6,1015.2L1166.2,1007.9L1171.0,1004.8L1174.1,998.2L1170.1,989.7L1169.0,982.3L1168.0,973.8L1165.1,967.1L1158.2,957.6L1155.7,947.2L1155.7,929.5L1156.1,918.0L1156.3,906.2L1155.5,894.2L1149.9,882.2L1144.6,869.9L1139.1,857.2L1131.7,834.8L1135.8,820.2L1139.8,805.3L1149.3,780.6L1161.9,767.0L1170.0,738.7L1161.5,717.9L1163.4,710.3L1160.4,687.3L1152.4,667.3L1145.6,648.6L1129.5,628.2L1113.0,609.2L1100.8,583.6L1110.1,566.0L1113.2,556.4L1116.1,542.0L1117.5,526.0L1112.6,511.7L1103.3,508.4L1093.8,498.8L1075.1,501.8L1056.2,503.3L1040.1,484.0L1014.5,469.6L998.5,470.3L979.3,474.2L956.9,483.8L934.4,491.8L926.3,495.8L911.9,490.2L896.0,487.9L880.0,490.0L864.1,492.1L837.3,501.9L814.3,489.4L790.4,472.4L778.8,461.7L765.9,454.3L755.0,439.2L750.2,424.1L737.2,409.6L726.6,402.6L726.5,389.4L712.1,384.3L715.4,367.6L713.7,359.9L705.8,350.5L714.9,341.6L721.5,331.6L728.9,317.5L732.5,302.6L729.0,285.9L725.5,268.5L728.1,262.1L736.0,250.4L742.5,240.3L746.8,231.7L761.2,219.0L771.0,202.5L782.1,196.1L787.1,190.3L795.3,180.7L808.1,177.1L817.5,172.3L831.5,163.2L838.8,156.7L840.8,152.7L837.7,150.4L840.6,142.1L848.7,134.2L859.2,125.0L870.3,121.3L879.6,117.4L885.7,112.0L889.4,106.8L893.0,101.8 M1494.4,722.2L1494.5,728.8L1492.9,738.1L1489.3,755.3L1488.4,759.7L1485.2,767.1L1485.2,762.1L1482.7,771.2L1478.6,780.9L1473.7,794.2L1469.1,804.3L1464.1,814.9L1456.2,830.1L1450.8,840.5L1446.5,848.4L1438.8,862.0L1431.9,873.2L1426.8,878.0L1420.2,883.4L1418.2,881.0L1419.8,872.8L1424.3,862.7L1428.7,848.7L1430.9,845.1L1436.2,836.5L1442.0,827.6L1445.8,819.4L1447.3,812.8L1449.7,802.8L1452.3,793.5L1459.1,779.6L1464.3,775.8L1470.1,770.7L1475.7,761.3L1481.5,751.8L1484.6,743.1L1487.2,740.1L1490.8,730.1L1494.4,722.2 M1095.3,88.3L1102.8,89.7L1112.2,91.4L1124.1,90.7L1121.8,96.1L1125.5,100.1L1124.6,102.6L1116.9,100.7L1106.7,97.4L1095.0,92.6L1093.3,89.5L1095.3,88.3 M1053.8,65.0L1058.4,67.2L1060.4,73.1L1061.1,78.5L1056.2,78.8L1051.4,79.9L1048.5,77.0L1044.0,68.1L1044.3,65.6L1053.8,65.0 M1211.3,123.2L1217.2,125.1L1225.9,127.9L1232.8,130.4L1236.7,130.4L1237.3,132.7L1231.2,131.5L1224.3,130.5L1217.3,128.0L1212.5,126.0L1211.3,123.2 M1285.9,143.9L1289.7,144.3L1294.3,144.4L1298.7,143.9L1297.6,146.7L1299.1,148.7L1296.2,147.9L1293.9,149.6L1289.7,147.7L1285.9,143.9 M1246.5,124.7L1247.6,127.3L1246.2,128.3L1244.2,125.8L1246.5,124.7 M1192.5,96.7L1201.3,100.9L1207.7,106.0L1198.0,101.5L1192.5,96.7 M1228.1,93.3L1235.8,94.9L1243.3,96.5L1246.4,95.1L1251.7,95.4L1261.8,98.8L1274.3,106.2L1286.2,112.0L1295.6,115.9L1301.2,116.2L1290.3,107.3L1278.8,100.0L1269.7,94.4L1260.6,89.0L1249.9,83.0L1245.0,81.8L1240.1,82.1L1225.1,74.0L1223.0,70.7L1211.3,65.7L1209.3,67.1L1207.1,68.6L1206.8,72.9L1207.6,77.4L1209.1,81.5L1217.3,87.5L1228.1,93.3 M1381.7,179.7L1379.6,178.0L1377.4,176.3L1372.1,171.5L1366.6,166.7L1355.6,156.4L1344.1,144.1L1329.9,131.6L1316.9,121.1L1300.7,108.4L1298.4,106.0L1295.8,103.7L1298.3,105.5L1300.7,107.3L1302.9,109.2L1311.4,115.5L1319.8,122.0L1325.3,126.3L1330.7,130.9L1345.5,143.7L1357.5,154.9L1367.0,164.1L1374.4,171.8L1381.7,179.7 M748.8,181.9L758.4,177.9L752.8,183.5L748.8,181.9 M762.4,181.5L765.4,183.3L762.4,185.6L760.8,183.2L762.4,181.5 M785.9,173.2L784.1,178.0L778.1,181.1L780.3,179.3L785.9,173.2 M791.9,168.1L790.6,170.8L786.2,172.2L791.9,168.1 M739.5,176.9L739.4,180.4L740.5,178.8L739.5,176.9 M743.9,183.4L744.8,184.4L746.1,183.7L743.9,183.4 M734.8,188.0L735.1,189.0L733.5,188.7L734.8,188.0 M761.9,137.2L764.4,138.6L760.5,138.2L761.9,137.2 M770.8,134.0L771.1,134.3L771.3,133.9"/>
<path d="M899.6,99.2L907.3,95.7L910.9,94.0L922.0,93.7L932.7,92.7L936.6,93.4L940.1,89.6L951.3,86.4L954.7,82.0L962.3,78.4L956.9,72.8L965.3,66.1L970.3,63.0L982.4,61.2L991.8,55.3L992.0,49.6L1006.4,49.5L1018.3,51.7L1030.6,49.0L1043.2,46.2L1055.1,49.2L1061.2,55.0L1069.3,59.1L1079.4,63.5L1089.7,68.1L1103.3,72.0L1115.4,78.4L1126.6,86.3L1125.0,91.5L1129.4,94.1L1133.5,91.2L1136.5,88.2L1134.3,84.0L1127.8,80.0L1129.6,77.1L1140.8,81.8L1144.8,83.6L1144.8,81.4L1138.4,77.8L1126.5,73.1L1117.2,67.2L1105.9,65.2L1096.4,59.6L1087.1,54.3L1073.7,48.3L1071.2,43.6L1081.5,43.4L1084.5,47.0L1095.6,49.2L1109.6,57.5L1120.5,61.4L1131.4,65.3L1145.6,71.4L1149.0,75.3L1151.9,81.0L1161.6,87.4L1170.5,92.7L1177.2,98.4L1182.1,99.9L1178.0,101.2L1185.7,107.3L1188.4,110.5L1192.1,111.1L1197.5,114.9L1198.9,113.1L1202.8,115.5L1196.6,107.8L1201.0,108.6L1201.2,105.4L1205.5,107.8L1203.2,103.8L1190.4,96.9L1187.6,93.9L1181.7,88.5L1181.9,85.6L1189.2,88.8L1192.7,90.7L1190.1,86.1L1197.2,86.5L1205.6,88.9L1207.5,90.4L1211.5,94.7L1213.3,98.0L1221.6,102.8L1221.5,106.4L1227.2,107.7L1231.7,113.1L1237.1,118.8L1244.4,122.5L1252.9,125.2L1259.9,129.6L1264.7,130.2L1263.6,126.1L1273.5,130.7L1282.3,136.3L1284.3,137.6L1289.5,137.9L1292.1,135.1L1299.3,138.6L1300.7,137.4L1303.8,140.2L1305.6,144.3L1308.0,148.1L1314.7,157.3L1315.7,160.9L1317.2,165.5L1318.7,169.5L1321.3,175.4L1322.6,180.2L1319.7,182.5L1315.2,181.2L1307.9,177.7L1316.5,190.5L1324.9,201.1L1334.5,210.6L1341.0,216.3L1339.0,209.2L1336.6,200.1L1337.3,200.3L1343.1,214.7L1352.7,223.5L1365.5,237.0L1376.5,251.2L1386.8,262.7L1401.5,282.5L1406.4,293.9L1420.0,312.2L1429.2,325.3L1436.6,339.2L1446.4,353.9L1451.9,367.6L1456.1,380.1L1462.6,399.0L1465.6,407.4L1473.3,407.5L1479.6,402.3L1484.1,397.1L1486.0,392.4L1488.7,389.8L1491.1,387.3L1490.6,377.3L1491.9,374.3L1492.8,371.3L1493.7,368.1L1494.2,365.0L1492.3,355.6L1487.2,341.3L1483.6,332.2L1479.8,323.3L1472.8,310.0L1466.5,299.7L1460.1,288.6L1454.8,278.9L1456.1,283.3L1457.7,286.3L1459.8,292.3L1457.6,292.4L1455.2,291.4L1450.3,284.8L1447.6,278.4L1441.4,268.5L1443.9,274.6L1446.6,279.7L1441.3,272.3L1436.5,264.1L1427.4,251.5L1417.2,238.6L1411.3,230.3L1409.6,225.9L1412.2,226.4L1424.0,240.5L1433.1,252.8L1442.5,264.6L1448.2,270.9L1449.9,270.8L1460.1,287.1M989.0,-1.9L985.6,-1.4L981.9,-0.8L978.0,0.0L973.9,1.0L969.5,2.1L964.9,3.3L960.1,4.8L955.0,6.4L949.7,8.1L944.2,10.1L938.4,12.2L932.4,14.5L926.1,17.0L919.7,19.6L922.7,22.9L926.0,26.4L929.5,30.2L933.2,34.2L937.1,38.6L941.3,43.2L945.6,48.2L935.2,48.4L924.8,48.8L914.4,49.2L904.0,49.7L893.7,50.4L883.4,51.0L870.3,54.2L870.6,59.9L871.0,65.9L865.6,73.7L860.1,81.9L860.8,94.2L872.7,93.4L882.9,91.4L889.5,96.4L899.6,99.2"/>
<path d="M396.6,451.7L394.6,464.0L393.2,475.5L392.6,484.1L392.3,492.7L393.3,495.6L394.5,498.5L396.1,501.4L398.7,503.1L402.0,511.9L403.8,517.7L404.4,529.3L405.2,541.0L407.2,550.9L408.3,572.4L412.5,575.0L416.7,580.1L423.1,585.4L429.2,593.4L432.2,605.4L437.0,604.3L446.6,611.4L458.1,612.0L469.1,623.4L478.8,636.3L489.4,643.9L494.4,645.6L496.8,654.0L501.9,672.4L502.9,685.5L499.3,706.7L491.6,722.1L490.0,734.8L486.6,748.0L485.8,758.9L488.6,770.3L493.8,790.3L497.6,805.9L498.7,819.5L501.1,834.9L501.3,844.2L504.4,853.0L502.8,861.1L496.6,859.8L490.8,860.3L486.2,864.2L485.1,870.1L484.7,875.1L489.6,884.9L496.4,896.1L500.4,904.1L501.8,909.6L504.6,915.2L509.3,924.2L510.5,928.5L514.0,934.3L517.7,939.9L520.7,944.3L522.1,946.8L518.6,943.0L515.3,939.1L512.2,935.2L519.5,944.1L527.1,953.0L537.3,964.1L536.7,962.9L536.3,961.7L536.2,960.6L536.3,959.4L543.3,965.9L550.4,972.1L555.4,975.7L560.6,979.1L565.9,982.4L571.3,985.7L576.8,988.8L584.2,994.0L591.7,999.1L599.3,1004.0L607.0,1008.7L614.7,1013.3"/>
<path d="M791.3,183.9L805.1,182.9L819.0,181.9L833.1,181.0L847.3,180.2L844.6,198.6L830.2,199.4L816.0,200.3L801.9,201.2L799.1,215.8L796.4,230.9L788.3,233.2L781.4,243.3L778.9,257.9L761.7,259.1L744.7,260.3L728.1,261.7 M934.6,106.5L939.1,109.6L940.5,118.3L945.5,129.0L944.8,132.7L924.7,133.0L914.6,137.0L915.2,144.6L898.8,148.0L887.7,158.3L863.6,161.4L849.1,169.3L847.3,180.2 M846.7,184.2L858.2,189.9L870.0,195.8L882.0,201.9L894.3,208.2L906.7,217.3L919.5,226.7L932.5,236.4L945.9,246.3L961.3,252.0L976.9,257.8L991.7,267.0L1006.8,276.4L1022.2,281.3L1043.6,266.6L1057.7,260.2L1071.4,253.8L1084.9,247.7L1098.0,241.7L1110.8,235.9L1123.3,230.3 M894.3,208.2L871.9,208.9L871.4,222.7L871.0,236.8L870.7,251.4L873.4,270.6L874.3,286.1L875.2,301.9L876.3,318.0L877.1,332.1 M1055.1,94.3L1052.9,98.4L1055.1,108.1L1048.2,112.7L1048.9,116.1L1051.7,125.0L1060.0,131.7L1069.7,139.6L1078.6,154.6 M1096.2,128.2L1097.5,135.1L1085.1,140.6L1085.6,148.2L1078.6,154.6 M1078.6,154.6L1085.0,166.0L1088.4,177.6L1084.2,193.5L1093.9,206.4L1098.2,217.0L1115.7,221.5L1123.3,230.3 M1123.3,230.3L1138.7,236.7L1154.1,243.2L1163.3,239.1L1176.9,244.9L1190.3,250.7L1203.7,256.6L1216.9,262.6L1229.9,268.7L1242.9,274.8L1255.6,280.9L1268.2,287.1L1280.6,293.4 M1163.3,239.1L1169.6,251.7L1175.8,264.5L1180.1,277.4L1181.4,290.8L1182.6,304.4L1183.6,318.3L1174.2,327.3L1164.5,336.5L1163.2,361.9 M1244.3,161.0L1247.3,175.6L1253.7,184.1L1258.2,194.6L1262.6,205.5L1266.9,216.6L1271.0,228.0L1275.1,239.7L1279.0,251.6L1282.8,263.9 M1280.6,293.4L1279.0,287.1L1289.8,288.5L1286.4,276.1L1282.8,263.9L1293.9,265.5L1304.6,267.2L1315.1,268.9L1325.3,270.6L1335.1,272.4L1344.6,274.2L1344.2,271.9L1345.5,274.4L1360.0,277.3L1370.0,279.5L1379.5,281.8L1388.6,284.0 M1360.0,277.3L1367.3,278.9L1371.2,277.7L1373.8,268.5 M1280.6,293.4L1284.5,309.6L1288.2,326.3L1291.7,343.2L1280.9,351.5L1274.9,371.5L1274.1,382.7L1289.6,407.8 M1417.4,334.2L1415.5,340.6L1409.7,344.0L1412.5,356.3L1412.1,367.1L1415.1,377.4 M1415.1,377.4L1423.0,377.6L1428.0,376.2L1433.9,378.5L1442.7,386.3L1451.2,396.5L1459.5,405.5 M1463.5,406.4L1460.1,408.0L1459.0,418.8L1460.6,426.5L1467.4,428.3L1467.8,422.3 M1415.1,377.4L1416.7,397.8L1411.3,409.9L1407.9,422.6L1408.0,438.7L1408.7,452.4L1400.5,453.0L1401.7,462.8L1416.3,477.8L1424.8,496.4L1430.5,507.9 M1467.4,428.3L1470.0,440.6L1478.3,458.3L1483.9,462.1L1489.3,466.0L1494.3,469.7L1498.6,470.6L1496.7,479.6L1494.6,488.8L1492.2,498.1L1489.5,507.6L1482.2,511.8L1474.3,516.1L1473.3,519.3 M1430.5,507.9L1438.5,510.4L1448.4,524.0L1454.0,522.9L1466.4,516.9L1473.3,519.3 M1473.3,519.3L1468.7,534.5L1469.4,553.4L1469.6,572.4L1472.7,594.8 M1430.5,507.9L1415.0,512.7L1411.3,522.4L1399.8,519.8L1387.9,517.2 M1415.0,512.7L1424.0,537.0L1423.7,555.4L1417.0,569.5L1416.9,586.7 M1416.9,586.7L1424.4,593.7L1431.6,600.5L1438.5,607.4L1445.1,614.1L1445.4,620.9L1455.1,636.8 M1416.9,586.7L1406.5,586.8L1395.7,586.9L1384.4,587.0 M1453.0,713.4L1442.0,724.0L1433.9,730.4L1427.0,728.8L1414.6,734.5L1410.3,733.7 M1398.2,705.7L1406.9,707.6L1408.8,720.7L1410.3,733.7L1407.3,739.4L1404.8,759.0L1407.4,769.9L1406.2,783.6L1398.2,798.4L1394.8,805.0L1391.9,795.9L1396.9,782.8L1398.0,771.4L1389.0,767.7L1394.6,745.0L1397.8,727.4L1398.2,705.7 M1389.0,767.7L1374.8,777.4L1358.7,784.7L1358.8,792.4L1363.2,796.8L1370.7,800.0L1377.9,803.2L1374.2,819.4L1368.8,832.2L1366.6,844.0L1357.5,857.1L1342.1,875.5 M1358.8,792.4L1343.0,799.6L1330.7,812.6L1318.1,825.6L1299.6,827.9 M1342.1,875.5L1325.7,876.3L1314.7,871.5L1314.1,864.7L1309.3,856.6L1304.2,848.4L1297.9,836.9L1299.6,827.9 M1325.7,876.3L1315.1,882.6L1304.4,888.9L1288.5,907.8L1275.0,921.6L1261.4,924.8L1247.5,927.9L1229.8,940.9L1218.2,942.9L1218.4,931.8L1218.3,920.4 M1205.5,960.3L1209.9,947.5L1214.1,934.1L1218.3,920.4L1222.8,904.4L1227.1,887.8L1238.7,886.5L1242.6,871.3L1246.2,855.7L1249.7,839.7L1263.7,836.4L1277.3,833.0L1299.6,827.9 M1205.5,960.3L1192.8,966.9L1176.6,963.8L1165.1,967.1 M1131.7,834.8L1147.2,834.7L1162.5,834.5L1177.2,833.6L1191.8,832.7L1206.1,831.6L1220.1,830.6L1235.6,833.2L1250.6,835.7L1265.3,831.7L1279.6,827.6 M1342.1,875.5L1341.1,892.5L1331.9,913.6L1328.6,923.4L1335.0,921.8 M1331.9,913.6L1328.2,912.4L1320.3,920.0L1317.2,930.2L1325.1,928.4L1328.6,923.4 M1290.9,948.0L1294.7,950.8L1288.5,960.1L1276.8,968.7L1271.1,967.3L1270.8,961.2L1280.5,952.9L1290.9,948.0 M1321.9,181.6L1336.6,200.1 M1337.3,200.3L1332.2,186.9L1324.3,173.4L1320.6,166.6L1317.7,167.0 M1320.6,166.6L1321.8,162.3L1317.2,156.5L1314.5,155.6 M1306.9,145.3L1309.5,144.5L1308.3,141.2L1314.4,143.4L1319.7,144.9L1324.8,146.5L1328.9,147.2L1336.0,150.4L1337.9,150.4L1347.4,155.9 M1324.8,172.1L1333.9,177.9L1337.1,175.2L1340.0,172.6L1343.4,170.8L1346.5,169.1L1340.9,161.2L1335.2,153.4L1336.0,150.4 M1340.0,172.6L1349.7,184.2L1345.0,184.9L1339.9,185.6L1352.3,197.2L1351.9,200.9L1347.1,200.1L1346.8,205.6L1338.1,201.8 M1349.7,184.2L1357.5,189.6L1365.1,195.1L1372.5,200.6L1381.4,208.8L1390.0,217.2L1398.4,225.6L1406.7,229.7L1405.8,223.1L1409.5,226.1 M1406.7,229.7L1415.4,238.2L1418.2,239.8 M1347.4,155.9L1358.4,166.7L1367.3,176.0L1371.7,183.2L1380.8,193.2L1394.0,205.8L1400.3,214.8L1409.6,225.9 M1347.4,155.9L1337.0,145.4L1328.2,137.1L1329.7,136.9L1342.7,146.8L1342.9,144.9L1354.9,155.7 M1329.7,136.9L1321.2,130.7L1313.9,124.1L1306.3,119.0L1301.7,116.8 M1449.7,360.3L1448.7,349.1L1455.5,352.3L1462.4,353.6L1470.7,360.7L1470.5,351.6L1469.9,342.8L1474.8,344.2L1479.0,345.6L1485.5,359.6L1491.5,373.7 M1479.0,345.6L1480.5,343.8L1481.8,341.9L1482.8,340.2L1479.0,330.1L1475.0,320.3L1470.8,312.3L1467.8,310.2L1464.5,308.1L1453.9,290.5 M1470.8,312.3L1464.6,298.3L1462.0,292.3L1455.8,281.1 M1206.6,89.7L1206.1,86.3L1203.9,83.8L1210.6,83.9L1214.3,84.8 M878.5,91.6L882.8,81.9L886.8,73.4L889.9,64.8L878.8,59.3 M1160.2,86.6L1164.2,80.7L1177.2,80.2L1190.6,82.4L1206.1,86.3 M403.5,517.8L400.9,530.9L398.7,544.1L394.1,545.7L396.5,524.9L398.5,503.1 M394.1,545.7L390.9,549.6L389.6,532.1L390.9,517.3L392.6,502.6 M390.9,549.6L388.4,553.5L386.4,557.2L385.8,549.2L386.1,536.9L386.7,524.7L387.6,512.7L389.2,500.3L391.1,487.9L393.2,475.5 M517.7,939.9L505.8,924.6L499.8,917.5L494.1,910.4L489.4,904.5L485.0,898.6L491.4,908.0L498.1,917.2L504.9,926.1L509.9,932.4 M485.0,898.6L482.6,894.3L480.4,890.0L478.4,885.5L476.7,880.8L465.7,863.0L458.1,847.6L452.0,837.4L446.2,827.2L443.5,824.1L441.1,820.9L432.2,800.9L427.1,789.9L425.5,787.6L424.3,785.3L429.7,798.4L435.5,811.1L439.3,819.5L443.4,828.0L447.8,836.4L452.5,844.9L457.6,853.4L462.2,862.1L466.9,870.6L469.2,873.5L471.9,876.4L474.1,878.6L476.7,880.8"/>
<path d="M1210.9,107.0L1212.5,107.9L1211.9,108.5L1210.3,107.5L1210.9,107.0 M1215.1,109.5L1216.7,110.4L1216.1,111.0L1214.5,110.0L1215.1,109.5 M1217.2,110.9L1218.8,111.9L1218.2,112.4L1216.6,111.4L1217.2,110.9 M1217.9,113.7L1219.5,114.7L1218.9,115.2L1217.3,114.2L1217.9,113.7 M1220.2,113.8L1221.8,114.8L1221.2,115.4L1219.6,114.3L1220.2,113.8 M1212.4,114.6L1214.1,115.6L1213.4,116.2L1211.8,115.1L1212.4,114.6 M1220.5,116.6L1222.1,117.6L1221.5,118.1L1219.9,117.1L1220.5,116.6 M1224.9,116.5L1226.5,117.5L1225.9,118.0L1224.3,117.0L1224.9,116.5 M1207.4,107.9L1209.0,108.9L1208.4,109.4L1206.8,108.4L1207.4,107.9 M1209.5,110.0L1211.1,111.0L1210.5,111.5L1208.9,110.5L1209.5,110.0 M1211.4,111.7L1213.0,112.7L1212.3,113.2L1210.7,112.2L1211.4,111.7 M1236.6,120.7L1238.2,121.7L1237.7,122.3L1236.1,121.3L1236.6,120.7 M1232.9,117.2L1234.5,118.2L1233.9,118.8L1232.3,117.8L1232.9,117.2 M1229.6,114.5L1231.2,115.6L1230.7,116.1L1229.1,115.1L1229.6,114.5 M1223.1,111.2L1224.7,112.2L1224.1,112.7L1222.5,111.7L1223.1,111.2 M1216.2,100.1L1217.8,101.0L1217.3,101.5L1215.7,100.6L1216.2,100.1 M1207.4,92.3L1208.9,93.2L1208.4,93.7L1206.8,92.8L1207.4,92.3 M1203.8,89.9L1205.3,90.8L1204.8,91.2L1203.3,90.3L1203.8,89.9 M1194.9,86.6L1196.4,87.4L1195.9,87.9L1194.3,87.0L1194.9,86.6 M1193.0,95.2L1194.6,96.1L1194.0,96.6L1192.4,95.7L1193.0,95.2 M1196.0,95.8L1197.6,96.7L1196.9,97.2L1195.3,96.3L1196.0,95.8 M1203.4,99.1L1205.0,100.1L1204.4,100.6L1202.8,99.6L1203.4,99.1 M1206.7,119.5L1208.3,120.5L1207.6,121.1L1206.0,120.0L1206.7,119.5 M1240.8,129.9L1242.4,131.0L1241.8,131.5L1240.2,130.5L1240.8,129.9 M1242.4,122.0L1244.0,123.1L1243.4,123.6L1241.8,122.6L1242.4,122.0 M1230.2,119.6L1231.8,120.7L1231.2,121.2L1229.6,120.2L1230.2,119.6 M1226.6,120.2L1228.2,121.2L1227.6,121.8L1225.9,120.8L1226.6,120.2 M1170.0,93.9L1171.6,94.8L1170.8,95.3L1169.2,94.4L1170.0,93.9 M1171.1,95.7L1172.7,96.6L1171.9,97.2L1170.3,96.2L1171.1,95.7 M1163.7,89.7L1165.3,90.6L1164.6,91.1L1163.0,90.2L1163.7,89.7 M1117.2,105.2L1118.9,106.2L1117.8,106.8L1116.2,105.9L1117.2,105.2 M1118.1,106.1L1119.7,107.0L1118.7,107.7L1117.0,106.7L1118.1,106.1 M400.6,434.3L400.3,435.8L399.7,437.8L400.0,436.3L400.6,434.3 M404.1,421.1L403.8,422.6L403.2,424.6L403.5,423.1L404.1,421.1 M406.2,413.8L405.9,415.3L405.2,417.3L405.6,415.8L406.2,413.8 M410.7,398.1L410.4,399.5L409.7,401.5L410.1,400.1L410.7,398.1 M416.4,380.7L416.0,382.1L415.3,384.1L415.7,382.7L416.4,380.7 M418.3,375.5L417.8,376.8L417.1,378.8L417.6,377.5L418.3,375.5 M416.7,380.0L416.2,381.4L415.5,383.4L416.0,382.0L416.7,380.0 M414.9,385.0L414.5,386.4L413.8,388.4L414.2,387.0L414.9,385.0 M419.5,372.3L419.0,373.6L418.3,375.6L418.8,374.3L419.5,372.3 M420.1,372.6L419.5,373.9L418.8,375.8L419.4,374.5L420.1,372.6 M419.9,373.2L419.3,374.5L418.6,376.5L419.2,375.2L419.9,373.2 M417.8,378.6L417.2,379.9L416.6,381.9L417.2,380.6L417.8,378.6 M399.1,442.5L398.9,444.1L398.3,446.1L398.5,444.5L399.1,442.5 M436.7,359.8L435.8,360.9L435.4,362.8L436.3,361.6L436.7,359.8 M435.7,352.3L434.9,353.4L434.4,355.3L435.3,354.2L435.7,352.3 M437.7,350.7L436.8,351.8L436.4,353.7L437.3,352.5L437.7,350.7 M441.7,347.2L440.7,348.3L440.3,350.2L441.3,349.0L441.7,347.2 M443.0,348.9L442.1,350.0L441.7,351.9L442.7,350.8L443.0,348.9 M448.1,343.6L447.1,344.6L446.7,346.5L447.7,345.4L448.1,343.6 M453.5,334.4L452.5,335.4L452.1,337.2L453.1,336.2L453.5,334.4 M458.3,328.6L457.2,329.6L456.8,331.4L457.9,330.4L458.3,328.6  M451.1,334.4L450.1,335.4L449.7,337.3L450.7,336.2L451.1,334.4 M451.1,341.4L450.0,342.4L449.7,344.2L450.7,343.2L451.1,341.4 M420.4,376.4L420.3,376.1L420.2,375.8L420.1,375.6L420.0,375.3L419.9,375.0L419.9,374.7L419.8,374.5L419.0,376.9L418.2,379.3L418.2,379.7L418.2,380.1L418.2,380.5L418.2,380.9L418.3,381.3L418.3,381.7L418.4,382.0L419.4,379.2L420.4,376.4 M429.3,370.0L429.0,369.9L428.6,369.8L428.3,369.7L428.0,369.6L427.7,369.5L427.4,369.4L427.1,369.3L426.8,369.2L426.2,369.8L425.7,370.5L425.1,371.1L424.6,371.8L424.0,372.9L423.3,374.0L422.7,375.2L422.0,376.3L421.4,377.4L420.8,379.6L420.1,381.8L420.4,381.8L420.7,381.8L420.9,381.8L421.2,381.8L421.5,381.7L421.8,381.7L421.9,382.4L421.9,383.0L422.0,383.6L422.1,384.2L422.2,384.9L422.3,385.5L421.7,387.6L421.1,389.7L420.5,391.8L421.4,390.5L422.2,389.1L423.0,387.8L423.3,388.0L423.6,388.1L424.0,388.3L424.3,388.5L424.6,388.6L425.0,388.8L425.3,388.9L425.7,388.9L426.1,388.9L426.6,388.9L427.0,389.0L427.4,389.0L428.5,386.1L428.1,386.0L427.7,385.8L427.3,385.6L427.0,385.5L426.6,385.3L426.3,385.2L425.9,385.0L425.6,384.9L425.3,384.7L425.0,384.6L425.9,382.8L426.8,381.1L427.7,379.4L428.4,378.2L429.2,377.0L430.0,375.8L430.7,374.6L430.7,373.7L430.7,372.7L430.7,371.8L430.4,371.4L430.1,371.1L429.8,370.7L429.6,370.4L429.3,370.0 M428.6,372.0L427.8,374.1L427.0,376.1L426.2,378.1L425.4,380.2L424.6,382.2L423.9,384.3L423.1,386.4L422.4,388.4 M433.8,371.1L434.5,370.2L435.3,369.3L436.1,368.5L436.9,367.6L437.6,367.0L438.3,366.4L439.0,365.8L439.8,365.2L440.4,364.9L441.0,364.5L441.7,364.2L442.3,363.9L443.0,363.5L443.6,363.2M437.7,378.6L437.3,378.3L436.8,378.0L436.4,377.8L436.0,377.5L435.6,377.2L435.3,376.7L434.9,376.1L434.6,375.5L434.4,374.9L434.2,374.0L434.0,373.0L433.9,372.1L433.8,371.1 M1520.4,638.1L1520.7,639.6L1520.1,641.2L1519.8,639.8L1520.4,638.1 M1505.8,695.7L1506.1,697.1L1505.2,698.8L1505.0,697.4L1505.8,695.7 M1518.7,693.6L1518.7,695.0L1518.1,696.6L1518.1,695.3L1518.7,693.6 M1524.7,655.4L1524.8,656.8L1524.3,658.4L1524.2,657.0L1524.7,655.4 M1507.5,684.8L1507.7,686.3L1506.9,688.0L1506.6,686.6L1507.5,684.8 M1493.7,694.2L1494.1,695.7L1493.1,697.5L1492.7,696.0L1493.7,694.2 M1488.0,716.9L1488.4,718.3L1487.3,720.1L1486.9,718.6L1488.0,716.9 M1498.3,759.1L1498.2,760.3L1497.4,762.0L1497.4,760.8L1498.3,759.1 M1495.6,785.3L1495.2,786.3L1494.6,787.9L1495.0,786.9L1495.6,785.3 M1504.7,759.1L1504.4,760.2L1503.7,761.9L1504.0,760.7L1504.7,759.1 M1527.3,622.4L1527.5,623.9L1527.1,625.5L1526.9,624.0L1527.3,622.4 M1527.2,623.0L1527.4,624.5L1526.9,626.1L1526.7,624.7L1527.2,623.0 M1527.5,616.5L1527.8,618.0L1527.3,619.6L1527.1,618.1L1527.5,616.5 M1522.8,498.8L1522.7,500.2L1523.2,501.5L1523.3,500.0L1522.8,498.8 M1523.6,506.0L1523.5,507.5L1523.9,508.7L1524.0,507.3L1523.6,506.0 M1524.1,513.3L1523.9,514.7L1524.4,516.0L1524.5,514.6L1524.1,513.3 M1525.3,519.3L1525.1,520.8L1525.5,522.0L1525.7,520.6L1525.3,519.3 M1525.0,526.8L1524.8,528.2L1525.2,529.4L1525.4,528.0L1525.0,526.8 M1526.7,533.8L1526.5,535.2L1526.8,536.4L1527.1,535.0L1526.7,533.8 M1526.2,540.1L1525.9,541.5L1526.3,542.8L1526.6,541.4L1526.2,540.1 M1527.1,547.3L1526.9,548.6L1527.2,549.9L1527.5,548.6L1527.1,547.3 M1526.8,552.5L1526.5,553.8L1526.9,555.2L1527.1,553.8L1526.8,552.5 M1527.4,564.8L1527.2,566.2L1527.5,567.5L1527.8,566.2L1527.4,564.8 M1527.5,574.2L1527.2,575.5L1527.5,576.8L1527.8,575.5L1527.5,574.2 M1527.6,577.8L1527.2,579.1L1527.5,580.5L1527.9,579.1L1527.6,577.8 M1516.5,467.7L1516.4,469.2L1517.0,470.4L1517.0,468.9L1516.5,467.7 M1517.1,461.8L1517.1,463.3L1517.7,464.4L1517.7,462.9L1517.1,461.8 M1515.5,455.9L1515.5,457.4L1516.1,458.5L1516.1,457.1L1515.5,455.9 M1515.3,450.3L1515.4,451.7L1515.9,452.9L1515.9,451.4L1515.3,450.3 M1520.7,485.5L1520.7,487.0L1521.2,488.2L1521.2,486.7L1520.7,485.5 M1526.9,626.3L1526.5,627.6L1526.6,629.0L1527.0,627.8L1526.9,626.3 M1526.0,635.7L1525.6,637.0L1525.7,638.4L1526.1,637.2L1526.0,635.7 M1523.8,646.8L1523.3,648.0L1523.4,649.5L1523.9,648.2L1523.8,646.8 M1526.1,629.3L1525.7,630.6L1525.8,632.0L1526.2,630.7L1526.1,629.3  M632.4,351.8L634.1,353.4L631.8,355.3L630.2,353.7L632.4,351.8 M644.4,325.4L646.0,327.0L643.7,328.9L642.1,327.4L644.4,325.4 M620.2,325.5L621.7,327.0L619.5,328.9L618.0,327.4L620.2,325.5 M636.4,348.7L638.1,350.3L635.8,352.3L634.1,350.7L636.4,348.7 M643.7,334.7L645.3,336.3L643.0,338.2L641.4,336.6L643.7,334.7 M627.9,329.8L629.4,331.3L627.2,333.2L625.7,331.7L627.9,329.8 M1066.2,567.1L1068.9,569.2L1066.2,571.3L1063.6,569.2L1066.2,567.1 M1078.8,544.6L1081.4,546.7L1078.8,548.7L1076.1,546.7L1078.8,544.6 M1098.7,514.3L1101.4,516.3L1098.8,518.4L1096.1,516.3L1098.7,514.3 M1050.3,592.9L1053.0,595.0L1050.3,597.1L1047.6,595.0L1050.3,592.9 M874.3,817.2L876.9,819.0L874.5,820.8L871.9,818.9L874.3,817.2 M739.2,694.8L741.8,696.8L739.5,698.8L736.9,696.7L739.2,694.8 M694.5,104.7L695.2,105.4L693.1,106.6L692.5,106.0L694.5,104.7 M684.0,108.5L684.6,109.1L682.5,110.4L681.9,109.7L684.0,108.5 M703.7,108.3L704.5,108.9L702.4,110.2L701.6,109.5L703.7,108.3 M668.3,107.5L668.7,108.1L666.7,109.4L666.3,108.8L668.3,107.5 M703.1,113.6L703.9,114.3L701.8,115.7L701.0,114.9L703.1,113.6 M687.7,107.0L688.3,107.6L686.2,108.9L685.6,108.2L687.7,107.0 M1453.9,679.3L1454.8,680.9L1453.5,682.7L1452.6,681.1L1453.9,679.3 M1451.9,705.5L1452.7,707.1L1451.3,708.9L1450.5,707.4L1451.9,705.5 M1450.0,734.8L1450.8,736.2L1449.3,738.1L1448.6,736.6L1450.0,734.8 M1439.6,267.8L1440.9,269.4L1441.0,270.4L1439.7,268.7L1439.6,267.8 M1438.7,265.9L1440.0,267.6L1440.1,268.5L1438.8,266.8L1438.7,265.9 M1245.5,1067.8L1245.5,1068.1L1243.7,1069.1L1243.7,1068.8L1245.5,1067.8 M1306.5,1033.1L1305.9,1033.5L1304.4,1034.6L1304.9,1034.3L1306.5,1033.1 M1454.6,650.3L1454.0,653.1L1453.4,655.8L1454.1,658.1L1454.9,660.3L1455.4,657.3L1455.9,654.2L1454.6,650.3 M1458.3,639.3L1457.6,643.4L1458.0,646.7L1459.1,641.9L1458.3,639.3 M1455.2,676.9L1453.1,680.4L1454.4,680.9L1455.2,676.9 M1468.2,721.8L1467.5,725.0L1466.9,728.1L1468.5,725.4L1468.2,721.8 M1471.7,729.4L1472.2,731.7L1472.7,730.4L1471.7,729.4 M1474.1,735.9L1473.4,739.0L1474.4,737.6L1474.1,735.9 M1505.4,419.3L1506.1,420.1L1506.8,420.8L1507.4,421.5L1508.1,422.3L1508.7,423.0L1508.4,423.5L1508.1,424.1L1507.8,424.6L1507.2,424.0L1506.6,423.3L1506.0,422.7L1505.4,419.3 M1503.5,423.7L1504.2,424.5L1503.8,424.9L1503.5,423.7 M1526.1,627.7L1526.1,630.1L1526.4,628.3L1526.1,627.7 M1487.8,693.4L1489.1,693.8L1488.1,694.6L1487.8,693.4 M1487.9,799.9L1486.9,802.5L1485.9,805.0L1486.0,804.3L1486.2,803.5L1487.9,799.9 M1479.4,813.6L1478.7,815.5L1478.1,817.4L1479.2,815.8L1480.1,813.1L1479.4,813.6 M1434.5,362.2L1436.8,366.2L1434.9,364.6L1434.5,362.2 M1442.1,352.7L1444.6,355.6L1443.6,355.9L1442.1,352.7 M991.5,70.4L992.0,71.8L992.5,73.2L993.0,74.6L990.5,73.8L987.9,73.1L985.4,72.3L987.5,71.7L989.5,71.1L991.5,70.4 M1119.0,107.3L1121.4,108.4L1121.1,108.7L1119.0,107.3 M1215.2,99.5L1217.2,100.9L1219.2,102.2L1217.4,101.6L1215.6,101.0L1213.8,100.4L1215.2,99.5 M1217.5,104.6L1220.1,107.3L1217.9,106.2L1217.5,104.6 M1227.1,111.4L1230.4,113.1L1228.6,112.5L1226.8,112.0L1227.1,111.4 M1219.9,114.4L1222.3,115.9L1219.9,115.1L1219.9,114.4 M1235.2,119.1L1237.9,121.0L1235.1,120.0L1235.2,119.1 M1223.4,119.9L1224.5,120.5L1223.8,120.0 M1241.9,128.7L1243.4,131.2L1242.0,130.2L1241.9,128.7 M1202.1,116.5L1203.7,117.8L1202.1,117.2L1202.1,116.5 M1170.8,97.3L1174.6,99.6L1172.6,98.9L1170.5,98.3L1170.8,97.3 M1174.3,100.6L1177.3,102.7L1174.5,101.6L1174.3,100.6 M1158.0,85.6L1160.2,87.2L1162.4,88.8L1160.4,87.9L1158.4,86.9L1158.0,85.6 M1203.7,93.2L1206.1,94.6L1203.4,93.8L1203.7,93.2 M518.7,627.8L519.2,628.1L519.2,627.8 M826.0,1048.6L826.6,1049.1L826.5,1048.7 M858.0,1073.5L858.6,1073.9L858.5,1073.6 M588.3,856.0L588.8,856.4L588.7,856.1 M592.9,856.4L593.5,856.9L593.4,856.5 M1410.2,858.2L1410.3,858.7L1410.5,858.1 M1446.7,792.5L1446.8,793.0L1447.0,792.4 M1086.5,121.1L1088.7,123.0L1085.7,122.3L1086.5,121.1 M1088.3,113.7L1088.1,114.9L1086.9,114.4L1088.3,113.7 M1091.4,98.2L1092.6,98.6L1091.9,98.4 M1101.8,109.2L1102.3,109.2L1101.9,109.0"/>
<path d="M612.6,112.9L621.6,106.4L628.4,102.0L634.9,98.4L627.9,104.3L637.3,98.3L646.7,92.6L641.0,96.8L635.4,101.0L619.8,111.8L606.5,122.1L610.0,117.8L607.9,117.9L612.8,113.3L612.6,112.9 M599.9,128.1L594.4,131.6L584.8,140.3L580.3,145.5L576.1,150.7L571.2,156.3L566.5,162.0L574.3,156.6L577.8,152.1L581.4,147.7L587.5,140.9L587.9,138.5L599.9,128.1 M649.5,91.2L655.1,88.8L660.7,86.5L664.2,85.9L667.8,85.3L661.3,87.9L655.0,90.6L648.8,93.5L642.6,96.4L637.0,100.8L631.6,105.2L626.3,109.7L624.6,112.1L623.2,114.4L621.8,116.7L620.6,119.0L614.4,125.1L608.4,131.2 M536.3,959.4L543.3,965.9L550.4,972.1L549.6,969.9L549.1,967.7L554.9,974.3L560.8,980.9L565.4,982.8L577.8,992.2L576.6,987.8L585.1,996.1L593.9,1004.1L601.8,1008.4L609.9,1012.4L617.2,1015.1L625.8,1021.2L634.5,1027.1 M637.9,1043.3L641.8,1047.0L644.7,1046.9L638.9,1041.7L637.9,1043.3 M724.8,1098.5L731.0,1101.2L737.3,1103.8L738.5,1104.4L731.9,1101.6L725.3,1098.8L724.8,1098.5 M1466.1,296.2L1467.3,298.3L1468.2,300.4L1469.0,302.4L1469.7,305.1L1470.3,307.8L1470.5,310.5L1476.2,323.7 M1381.7,179.7L1374.4,171.8L1367.0,164.1L1357.5,154.9L1345.5,143.7L1330.7,130.9L1325.3,126.3L1319.8,122.0L1311.4,115.5L1302.9,109.2 M397.3,449.7L395.7,457.5L395.2,458.3L396.7,451.4L397.3,449.7 M405.2,420.3L404.6,423.0L404.6,422.6L405.2,420.3 M408.7,405.0L407.3,410.0L407.5,409.2L408.7,405.0 M413.9,388.3L412.4,393.2L412.0,393.9L413.9,388.3 M591.7,145.7L578.3,154.8L575.3,157.3L570.8,163.5L565.8,171.9L557.7,180.3L553.4,182.7L551.3,184.8L549.8,188.5L548.5,192.0L546.4,194.3L544.3,201.3 M591.7,145.7L594.1,146.7L585.7,155.0L577.6,163.6L576.8,167.1 M608.4,131.2L604.3,136.4L600.5,141.5L595.4,147.0L590.6,152.5L596.5,146.1L602.6,139.8L608.9,133.6L611.6,129.9L614.5,126.3L617.4,122.6L620.6,119.0 M601.8,133.3L594.0,138.9L588.1,142.7L587.5,140.9 M591.0,139.7L593.9,137.8L593.2,136.6L592.7,135.5L588.9,139.1L591.0,139.7 M617.6,121.7L615.9,120.7L614.5,119.7L614.7,122.1L617.6,121.7 M490.5,242.8L489.5,244.4L489.9,243.6 M422.6,763.4L428.9,780.3L433.6,791.0L438.5,801.5L443.6,811.9L449.0,822.1L454.6,832.0L460.4,841.8L465.7,850.3L471.2,858.6L476.8,866.8L482.4,875.1L488.2,883.3L494.2,891.3L500.2,898.0L506.2,904.6L512.4,911.0L518.7,917.3L525.7,924.9L532.9,932.3L540.1,939.6L547.1,946.2 M422.6,763.4L420.8,754.8L419.4,746.1L419.1,738.7L419.1,731.3L418.2,721.4L417.7,711.6L416.0,701.5L414.6,691.4 M438.3,810.3L442.4,817.3L446.6,824.1L452.8,835.6L459.2,846.9L464.6,854.7L470.2,862.4L476.0,869.8L481.7,878.3L487.5,886.6L493.5,894.8L499.7,902.6L506.0,910.2L512.4,917.7L519.0,924.5L525.7,931.3L532.5,937.8L539.4,944.2L546.4,951.1L553.4,957.8L560.6,964.3L567.9,970.6L575.3,976.8L582.8,982.8 M394.6,682.2L397.3,696.3L400.5,710.4L401.6,715.2L402.9,720.0L404.5,724.9L409.2,740.7L414.3,756.3L416.4,759.1L424.2,778.9L427.7,788.9L431.3,798.9 M435.5,811.1L434.7,807.6L438.2,812.2L438.3,810.3L434.3,800.6L430.5,790.8L426.9,781.0L422.4,767.9L418.2,754.8L413.4,742.5L408.4,724.9L405.3,715.1L402.4,705.1L399.5,688.7L400.6,686.6 M394.6,682.2L394.9,678.5L397.0,683.7L399.5,688.7 M400.6,686.6L400.4,678.6L400.4,670.6L399.8,658.8L399.4,647.1L396.6,640.3L394.1,633.4L391.8,626.3L389.7,619.1L389.5,617.0L388.5,605.7L387.8,594.4L387.2,583.1L387.3,571.3L387.6,559.6L385.9,554.0L384.9,559.3L384.2,564.7L384.0,557.4L384.0,550.0L384.6,538.9L385.4,527.9L385.5,525.6L385.9,523.2L386.7,520.8L387.6,512.7L389.3,495.9L391.1,485.8L393.2,475.5 M396.6,451.7L396.0,453.3L395.8,454.9L395.0,460.2L396.3,457.4L397.1,459.9L398.9,455.5L401.0,451.2L402.9,444.2L402.1,458.1L399.7,468.1L397.6,478.3L401.1,463.2L403.7,449.7L405.5,444.0 M1468.4,300.5L1464.3,293.4L1460.0,286.5L1454.9,277.4L1449.6,268.4L1444.0,259.4L1434.1,245.4L1426.5,234.5L1418.6,223.7L1412.2,215.9L1405.7,208.4L1398.7,200.3L1391.2,190.5L1385.9,184.2L1380.4,178.0L1380.4,177.8L1380.1,177.6L1379.6,177.4 M1476.2,323.7L1478.3,329.7L1482.5,340.6L1483.3,344.9L1487.8,357.5L1486.2,360.1L1481.5,351.5L1485.4,361.1L1489.1,370.8 M1444.0,259.4L1444.3,260.5L1444.4,261.5L1444.3,262.6L1446.3,267.4L1448.1,272.1L1438.8,258.7L1436.0,257.6L1432.9,256.6L1426.6,250.3L1420.2,244.2L1412.3,234.9L1404.3,225.8 M1405.7,208.4L1404.8,208.4L1403.6,208.5L1402.3,208.5L1397.8,206.1L1399.0,209.2L1399.9,212.3 M1391.2,190.5L1388.9,188.8L1386.4,187.2L1383.7,185.7L1374.9,175.9L1365.8,166.4L1359.0,158.8L1351.9,151.4L1353.9,152.3L1355.6,153.3L1346.3,145.0L1336.9,137.0L1327.4,129.3L1328.2,130.9L1328.8,132.4 M1355.6,153.3L1354.2,151.6L1348.5,146.4L1342.7,141.2 M1302.9,109.2L1298.0,105.4L1293.0,101.8L1287.9,98.1L1282.6,94.5L1277.1,91.0L1269.4,85.9L1261.6,81.1L1263.1,82.1L1264.5,83.1L1265.6,84.2L1266.7,85.3L1269.5,87.5L1272.2,89.8L1274.8,92.0L1277.2,94.3L1279.5,96.6L1281.7,98.9L1283.7,101.1L1287.0,104.2L1290.1,107.4L1293.1,110.5 M1295.8,103.7L1287.5,98.0L1279.1,92.5L1268.7,85.5 M1301.7,116.8L1302.9,115.7L1303.9,114.8L1312.4,120.2L1320.7,125.6L1328.2,131.8L1329.9,131.6 M1313.9,124.1L1319.2,126.3L1328.9,134.6L1333.4,138.6L1342.0,146.1L1342.7,146.8 M1278.8,100.0L1286.6,104.0L1294.2,108.0L1302.1,112.8L1309.8,117.7L1320.7,125.6 M1249.9,83.0L1248.2,79.5L1246.1,76.3L1250.8,78.5L1250.7,80.4L1250.2,82.5L1234.6,74.1L1249.9,83.0"/>
</g>
</svg>
<div class="b status" style="left:0px;top:97px;width:970.5px;height:28px;background:rgba(0,0,0,.6);"></div>
<p class="t" id="t0" style="left:2.00px;top:96.22px;font-size:21px;line-height:27px;height:27px;color:#fff;letter-spacing:-0.221px;">Time: jueves, 15 de agosto de 2019 - Zulu: 11:25:11 - Local: 11:25:11 - 1 d to go -  Camera Alt: 8000000m</p>
<svg width="320" height="60" viewBox="1550 995 320 60" style="left:1550px;top:995px" class="scalebar"><path d="M1569.500 1012v17h288v-17M1601.5 1012v17M1633.5 1012v17M1665.5 1012v17M1697.5 1012v17M1729.5 1012v17M1761.5 1012v17M1793.5 1012v17M1825.5 1012v17" fill="none" stroke="#fff" stroke-width="1"/></svg>
<span class="t" id="t1" style="left:1564.11px;top:992.15px;font-size:14px;line-height:18px;height:18px;color:#fff;">0</span>
<span class="t" id="t2" style="left:1652.32px;top:992.15px;font-size:14px;line-height:18px;height:18px;color:#fff;">400</span>
<span class="t" id="t3" style="left:1748.32px;top:992.15px;font-size:14px;line-height:18px;height:18px;color:#fff;">700</span>
<span class="t" id="t4" style="left:1841.43px;top:992.15px;font-size:14px;line-height:18px;height:18px;color:#fff;">1100</span>
<span class="t" id="t5" style="left:1672.05px;top:1030.65px;font-size:14px;line-height:18px;height:18px;color:#fff;letter-spacing:-0.553px;">Nautical miles</span>
</main>
<header id="toolbar">
<div class="b toolbar-bg" style="left:0px;top:0px;width:1920px;height:91px;background:#3b3f42;border-bottom:2px solid #383a3b"></div>
<nav id="menubar" role="menubar">
<span class="t" id="t6" role="menuitem" style="left:12.10px;top:2.72px;font-size:13.5px;line-height:18px;height:18px;color:#e4e4e4;letter-spacing:-0.301px;">File</span>
<span class="t" id="t7" role="menuitem" style="left:52.95px;top:2.72px;font-size:13.5px;line-height:18px;height:18px;color:#e4e4e4;letter-spacing:-0.737px;">View</span>
<span class="t" id="t8" role="menuitem" style="left:100.05px;top:2.72px;font-size:13.5px;line-height:18px;height:18px;color:#e4e4e4;letter-spacing:-0.946px;">Game</span>
<span class="t" id="t9" role="menuitem" style="left:153.12px;top:2.72px;font-size:13.5px;line-height:18px;height:18px;color:#e4e4e4;letter-spacing:-0.356px;">Map Settings</span>
<span class="t" id="t10" role="menuitem" style="left:248.07px;top:2.72px;font-size:13.5px;line-height:18px;height:18px;color:#e4e4e4;letter-spacing:-0.269px;">Quick Jump</span>
<span class="t" id="t11" role="menuitem" style="left:336.07px;top:2.72px;font-size:13.5px;line-height:18px;height:18px;color:#e4e4e4;letter-spacing:-0.317px;">Unit Orders</span>
<span class="t" id="t12" role="menuitem" aria-disabled="true" style="left:422.05px;top:2.72px;font-size:13.5px;line-height:18px;height:18px;color:#6d7073;letter-spacing:-0.475px;">Contacts</span>
<span class="t" id="t13" role="menuitem" style="left:492.10px;top:2.72px;font-size:13.5px;line-height:18px;height:18px;color:#e4e4e4;letter-spacing:-0.385px;">Missions + Ref. Points</span>
<span class="t" id="t14" role="menuitem" style="left:637.12px;top:2.72px;font-size:13.5px;line-height:18px;height:18px;color:#e4e4e4;letter-spacing:-0.273px;">Editor</span>
<span class="t" id="t15" role="menuitem" style="left:691.10px;top:2.72px;font-size:13.5px;line-height:18px;height:18px;color:#e4e4e4;letter-spacing:0.037px;">Help</span>
</nav>
<div id="timebar" role="toolbar">
<div class="b sbtn" role="button" aria-label="Time compression" style="left:8px;top:24px;width:104px;height:29px;background:linear-gradient(#444647,#37393a);border:1px solid #2a2c2d;border-bottom:2px solid #232425;"></div>
<div class="b sbtn" role="button" aria-label="Play" style="left:114px;top:24px;width:48px;height:29px;background:linear-gradient(#444647,#37393a);border:1px solid #2a2c2d;border-bottom:2px solid #232425;"></div>
<div class="b sbtn" role="button" aria-label="Record" style="left:165px;top:24px;width:49px;height:29px;background:linear-gradient(#444647,#37393a);border:1px solid #2a2c2d;border-bottom:2px solid #232425;"></div>
<div class="b sbtn" role="button" aria-label="Layers" style="left:216px;top:24px;width:49px;height:29px;background:linear-gradient(#444647,#37393a);border:1px solid #2a2c2d;border-bottom:2px solid #232425;"></div>
<div class="b sbtn" role="button" aria-label="Jump" style="left:268px;top:24px;width:49px;height:29px;background:linear-gradient(#444647,#37393a);border:1px solid #2a2c2d;border-bottom:2px solid #232425;"></div>
<svg width="330" height="60" viewBox="0 0 330 60" style="left:0;top:0" class="sicons">
<circle cx="34.600" cy="38.300" r="8.800" fill="none" stroke="#cfcfcf" stroke-width="1.900"/>
<path d="M34.600 32.300v6h5.600" fill="none" stroke="#cfcfcf" stroke-width="1.700"/>
<path d="M133 30.800l12.500 7.900-12.500 8z" fill="#d6d6d6"/>
<circle cx="188.800" cy="38.300" r="7.500" fill="#d60000"/>
<path d="M233.800 29.600h14.200l5.800 9.400h-25.800z" fill="#9c9c9c"/><path d="M232 38h18.500l4.500 9.500h-28z" fill="#d4d4d4"/>
<path d="M284.800 47.600C283.600 42 285 34.500 288.600 30.800L293 31.600l7.400 1.400-1.400 14-2 .600-4-7.200-4.200 7.200z" fill="#2a74dc"/>
</svg>
<span class="t" id="t16" style="left:65.00px;top:24.72px;font-size:19px;line-height:25px;height:25px;color:#cfcfcf;">x</span>
<span class="t" id="t17" style="left:77.40px;top:21.98px;font-size:24px;line-height:31px;height:31px;color:#cfcfcf;">1</span>
</div>
<div id="actions" role="toolbar">
<div class="b bbtn red" role="button" style="left:8.3px;top:56.3px;width:120px;height:31.6px;background:linear-gradient(#7d3b3d 0,#7d3b3d 2px,#6c3836 6px,#532b29 100%);border-top:1px solid rgba(0,0,0,.35);box-shadow:inset 1px 0 0 rgba(255,255,255,.05),inset -1px 0 0 rgba(0,0,0,.2)"></div>
<span class="t" id="t18" style="left:46.20px;top:58.84px;font-size:12px;line-height:16px;height:16px;color:rgba(255,255,255,.84);letter-spacing:0.021px;-webkit-text-stroke:0.25px rgba(255,255,255,.6);">Auto Engage</span>
<span class="t" id="t19" style="left:46.20px;top:71.24px;font-size:12px;line-height:16px;height:16px;color:rgba(255,255,255,.84);letter-spacing:-0.096px;-webkit-text-stroke:0.25px rgba(255,255,255,.6);">Target</span>
<div class="b bbtn red" role="button" style="left:130.9px;top:56.3px;width:120px;height:31.6px;background:linear-gradient(#7d3b3d 0,#7d3b3d 2px,#6c3836 6px,#532b29 100%);border-top:1px solid rgba(0,0,0,.35);box-shadow:inset 1px 0 0 rgba(255,255,255,.05),inset -1px 0 0 rgba(0,0,0,.2)"></div>
<span class="t" id="t20" style="left:168.10px;top:58.84px;font-size:12px;line-height:16px;height:16px;color:rgba(255,255,255,.84);letter-spacing:0.339px;-webkit-text-stroke:0.25px rgba(255,255,255,.6);">Manual</span>
<span class="t" id="t21" style="left:168.10px;top:71.24px;font-size:12px;line-height:16px;height:16px;color:rgba(255,255,255,.84);letter-spacing:0.043px;-webkit-text-stroke:0.25px rgba(255,255,255,.6);">Engage Target</span>
<div class="b bbtn blue" role="button" style="left:253.5px;top:56.3px;width:120px;height:31.6px;background:linear-gradient(#41629a 0,#41629a 2px,#36537e 6px,#293d5e 100%);border-top:1px solid rgba(0,0,0,.35);box-shadow:inset 1px 0 0 rgba(255,255,255,.05),inset -1px 0 0 rgba(0,0,0,.2)"></div>
<span class="t" id="t22" style="left:298.30px;top:64.84px;font-size:12px;line-height:16px;height:16px;color:rgba(255,255,255,.84);letter-spacing:0.275px;-webkit-text-stroke:0.25px rgba(255,255,255,.6);">Plot Course</span>
<div class="b bbtn blue" role="button" style="left:376.2px;top:56.3px;width:120px;height:31.6px;background:linear-gradient(#41629a 0,#41629a 2px,#36537e 6px,#293d5e 100%);border-top:1px solid rgba(0,0,0,.35);box-shadow:inset 1px 0 0 rgba(255,255,255,.05),inset -1px 0 0 rgba(0,0,0,.2)"></div>
<span class="t" id="t23" style="left:422.20px;top:58.84px;font-size:12px;line-height:16px;height:16px;color:rgba(255,255,255,.84);letter-spacing:0.201px;-webkit-text-stroke:0.25px rgba(255,255,255,.6);">Throttle &amp;</span>
<span class="t" id="t24" style="left:422.20px;top:71.24px;font-size:12px;line-height:16px;height:16px;color:rgba(255,255,255,.84);letter-spacing:0.250px;-webkit-text-stroke:0.25px rgba(255,255,255,.6);">Altitude</span>
<div class="b bbtn blue" role="button" style="left:498.8px;top:56.3px;width:120px;height:31.6px;background:linear-gradient(#41629a 0,#41629a 2px,#36537e 6px,#293d5e 100%);border-top:1px solid rgba(0,0,0,.35);box-shadow:inset 1px 0 0 rgba(255,255,255,.05),inset -1px 0 0 rgba(0,0,0,.2)"></div>
<span class="t" id="t25" style="left:543.50px;top:58.84px;font-size:12px;line-height:16px;height:16px;color:rgba(255,255,255,.84);letter-spacing:0.310px;-webkit-text-stroke:0.25px rgba(255,255,255,.6);">Formation</span>
<span class="t" id="t26" style="left:543.50px;top:71.24px;font-size:12px;line-height:16px;height:16px;color:rgba(255,255,255,.84);letter-spacing:0.230px;-webkit-text-stroke:0.25px rgba(255,255,255,.6);">Editor</span>
<div class="b bbtn olive" role="button" style="left:621.4px;top:56.3px;width:120px;height:31.6px;background:linear-gradient(#787034 0,#787034 2px,#625a30 6px,#4c4524 100%);border-top:1px solid rgba(0,0,0,.35);box-shadow:inset 1px 0 0 rgba(255,255,255,.05),inset -1px 0 0 rgba(0,0,0,.2)"></div>
<span class="t" id="t27" style="left:666.30px;top:64.84px;font-size:12px;line-height:16px;height:16px;color:rgba(255,255,255,.84);letter-spacing:0.352px;-webkit-text-stroke:0.25px rgba(255,255,255,.6);">Magazines</span>
<div class="b bbtn olive" role="button" style="left:744.0px;top:56.3px;width:120px;height:31.6px;background:linear-gradient(#787034 0,#787034 2px,#625a30 6px,#4c4524 100%);border-top:1px solid rgba(0,0,0,.35);box-shadow:inset 1px 0 0 rgba(255,255,255,.05),inset -1px 0 0 rgba(0,0,0,.2)"></div>
<span class="t" id="t28" style="left:789.60px;top:58.84px;font-size:12px;line-height:16px;height:16px;color:rgba(255,255,255,.84);letter-spacing:0.321px;-webkit-text-stroke:0.25px rgba(255,255,255,.6);">Aircraft</span>
<span class="t" id="t29" style="left:789.60px;top:71.24px;font-size:12px;line-height:16px;height:16px;color:rgba(255,255,255,.84);letter-spacing:0.078px;-webkit-text-stroke:0.25px rgba(255,255,255,.6);">Operations</span>
<div class="b bbtn olive" role="button" style="left:866.6px;top:56.3px;width:120px;height:31.6px;background:linear-gradient(#787034 0,#787034 2px,#625a30 6px,#4c4524 100%);border-top:1px solid rgba(0,0,0,.35);box-shadow:inset 1px 0 0 rgba(255,255,255,.05),inset -1px 0 0 rgba(0,0,0,.2)"></div>
<span class="t" id="t30" style="left:911.30px;top:58.84px;font-size:12px;line-height:16px;height:16px;color:rgba(255,255,255,.84);letter-spacing:0.088px;-webkit-text-stroke:0.25px rgba(255,255,255,.6);">Boat</span>
<span class="t" id="t31" style="left:912.20px;top:71.24px;font-size:12px;line-height:16px;height:16px;color:rgba(255,255,255,.84);letter-spacing:0.122px;-webkit-text-stroke:0.25px rgba(255,255,255,.6);">Operations</span>
<div class="b bbtn green" role="button" style="left:989.3px;top:56.3px;width:120px;height:31.6px;background:linear-gradient(#3d8643 0,#3d8643 2px,#347238 6px,#29592d 100%);border-top:1px solid rgba(0,0,0,.35);box-shadow:inset 1px 0 0 rgba(255,255,255,.05),inset -1px 0 0 rgba(0,0,0,.2)"></div>
<span class="t" id="t32" style="left:1034.30px;top:58.84px;font-size:12px;line-height:16px;height:16px;color:rgba(255,255,255,.84);letter-spacing:0.284px;-webkit-text-stroke:0.25px rgba(255,255,255,.6);">Mounts &amp;</span>
<span class="t" id="t33" style="left:1035.20px;top:71.24px;font-size:12px;line-height:16px;height:16px;color:rgba(255,255,255,.84);letter-spacing:-0.149px;-webkit-text-stroke:0.25px rgba(255,255,255,.6);">Weapons</span>
<div class="b bbtn green" role="button" style="left:1111.9px;top:56.3px;width:120px;height:31.6px;background:linear-gradient(#3d8643 0,#3d8643 2px,#347238 6px,#29592d 100%);border-top:1px solid rgba(0,0,0,.35);box-shadow:inset 1px 0 0 rgba(255,255,255,.05),inset -1px 0 0 rgba(0,0,0,.2)"></div>
<span class="t" id="t34" style="left:1156.30px;top:64.84px;font-size:12px;line-height:16px;height:16px;color:rgba(255,255,255,.84);letter-spacing:0.117px;-webkit-text-stroke:0.25px rgba(255,255,255,.6);">Sensors</span>
<div class="b bbtn green" role="button" style="left:1234.5px;top:56.3px;width:120px;height:31.6px;background:linear-gradient(#3d8643 0,#3d8643 2px,#347238 6px,#29592d 100%);border-top:1px solid rgba(0,0,0,.35);box-shadow:inset 1px 0 0 rgba(255,255,255,.05),inset -1px 0 0 rgba(0,0,0,.2)"></div>
<span class="t" id="t35" style="left:1279.30px;top:58.84px;font-size:12px;line-height:16px;height:16px;color:rgba(255,255,255,.84);letter-spacing:0.044px;-webkit-text-stroke:0.25px rgba(255,255,255,.6);">Systems &amp;</span>
<span class="t" id="t36" style="left:1279.30px;top:71.24px;font-size:12px;line-height:16px;height:16px;color:rgba(255,255,255,.84);letter-spacing:0.099px;-webkit-text-stroke:0.25px rgba(255,255,255,.6);">Damage</span>
<div class="b bbtn gray" role="button" style="left:1357.1px;top:56.3px;width:120px;height:31.6px;background:linear-gradient(#666666 0,#666666 2px,#555555 6px,#3c3c3c 100%);border-top:1px solid rgba(0,0,0,.35);box-shadow:inset 1px 0 0 rgba(255,255,255,.05),inset -1px 0 0 rgba(0,0,0,.2)"></div>
<span class="t" id="t37" style="left:1402.25px;top:58.84px;font-size:12px;line-height:16px;height:16px;color:rgba(255,255,255,.84);letter-spacing:0.187px;-webkit-text-stroke:0.25px rgba(255,255,255,.6);">Unit / Group</span>
<span class="t" id="t38" style="left:1402.25px;top:71.24px;font-size:12px;line-height:16px;height:16px;color:rgba(255,255,255,.84);letter-spacing:0.152px;-webkit-text-stroke:0.25px rgba(255,255,255,.6);">Doctrine</span>
<div class="b bbtn gray" role="button" style="left:1479.7px;top:56.3px;width:120px;height:31.6px;background:linear-gradient(#666666 0,#666666 2px,#555555 6px,#3c3c3c 100%);border-top:1px solid rgba(0,0,0,.35);box-shadow:inset 1px 0 0 rgba(255,255,255,.05),inset -1px 0 0 rgba(0,0,0,.2)"></div>
<span class="t" id="t39" style="left:1525.25px;top:58.84px;font-size:12px;line-height:16px;height:16px;color:rgba(255,255,255,.84);letter-spacing:0.346px;-webkit-text-stroke:0.25px rgba(255,255,255,.6);">Mission</span>
<span class="t" id="t40" style="left:1525.25px;top:71.24px;font-size:12px;line-height:16px;height:16px;color:rgba(255,255,255,.84);letter-spacing:0.075px;-webkit-text-stroke:0.25px rgba(255,255,255,.6);">Editor</span>
<svg width="1620" height="92" viewBox="0 0 1620 92" class="icons" opacity="0.88"><path d="M15.7,66.3h5v-5.5M20.7,71.0h4.7v-4.7M15.7,81.3h5v5.5M20.7,76.6h4.7v4.7M40.7,66.3h-5v-5.5M35.7,71.0h-4.7v-4.7M40.7,81.3h-5v5.5M35.7,76.6h-4.7v4.7" fill="none" stroke="#d39494" stroke-width="2.200"/><path d="M149.3,72.6 149.3,60.3 145.3,65.6 139.5,62.8 142.3,68.6 137.0,72.6ZM149.3,75.0 149.3,87.3 145.3,82.0 139.5,84.8 142.3,79.0 137.0,75.0ZM151.7,72.6 151.7,60.3 155.7,65.6 161.5,62.8 158.7,68.6 164.0,72.6ZM151.7,75.0 151.7,87.3 155.7,82.0 161.5,84.8 158.7,79.0 164.0,75.0Z" fill="#d39494"/><circle cx="277.5" cy="73.4" r="13.200" fill="#8ea5c6"/><path d="M270.0,68.9L286.0,67.9L277.5,80.4Z" fill="#2c4468"/><path d="M277.5,59.900000000000006v4M277.5,86.9v-4M264.0,73.4h4M291.0,73.4h-4" stroke="#2c4468" stroke-width="1.800"/><path d="M387.5,79A13.500,13.500 0 1,1 412.5,79L406,81L400,69L394,81Z" fill="#8ea5c6"/><path d="M388.0,67.1L390.9,68.8M392.3,62.6L394.1,65.3M398.1,60.3L398.5,63.6M404.3,60.9L403.2,64.0M409.6,64.1L407.3,66.4" stroke="#2c4468" stroke-width="1.600"/><rect x="394" y="82.5" width="12" height="3.200" fill="#8ea5c6"/><path d="M528.7,70.7 522.6,74.2 516.5,70.7 516.5,63.7 522.6,60.2 528.7,63.7ZM521.5,83.1 515.4,86.6 509.3,83.1 509.3,76.1 515.4,72.6 521.5,76.1ZM536.0,83.1 529.9,86.6 523.8,83.1 523.8,76.1 529.9,72.6 536.0,76.1Z" fill="#8ea5c6"/><path d="M635.8,60.4 q2.300,3.500 2.300,7.200 l0.900,1.500 v13.200 h-6.400 v-13.200 l0.900,-1.500 q0,-3.700 2.300,-7.200Z M632.4,83.800h6.800v2.700h-6.800ZM645.4,60.4 q2.300,3.500 2.300,7.200 l0.900,1.500 v13.200 h-6.400 v-13.200 l0.900,-1.500 q0,-3.700 2.300,-7.200Z M642.0,83.800h6.800v2.700h-6.800ZM655.0,60.4 q2.300,3.500 2.300,7.200 l0.900,1.500 v13.200 h-6.400 v-13.200 l0.900,-1.500 q0,-3.700 2.300,-7.200Z M651.6,83.800h6.800v2.700h-6.800Z" fill="#cbc28f"/><path d="M782.2,72.700 q-2,-1.800 -6,-2 l-7,0 q-1.500,-6 -5.500,-10.200 l-1.600,0 q2.600,5.200 2.600,10.200 l-6.200,0.300 l-1.200,-3.300 l-1.400,0 l0,7.500 l1.400,0 l1.200,-3 l6.200,0.500 q0,6 -2.600,13.500 l1.600,0 q4.500,-6 5.500,-13.300 l7,0 q4,-0.200 6,-2.200Z" fill="#cbc28f"/><path d="M881.7,65.500l3,-2.200h12v5.200l-3,1.200h-14ZM876.7,72.800l3,-2h26.500l-1.500,5.200l-3,1.500h-23ZM873.3,80.300l2,-1.600h22l7.500,-2.200h2.500l0,2.800l-9,3.700h-25Z" fill="#cbc28f"/><path d="M998.7,86 l1,-8 l8.500,-10 l7.500,-8 l2,0.500 l-6,10 l-7,13ZM1005.7,86.500 l5,-7 l6,-10 l5.500,-8.500 l2,1 l-5,10 l-8,13ZM1014.2,86.500 l4,-6.500 l5,-9 l4,-6 l1.500,1 l-4,9 l-6.500,11.500Z" fill="#a6d3a9"/><circle cx="1135.8" cy="73.8" r="13.300" fill="#a6d3a9"/><path d="M1134.8,74.3L1140.3,63.3A11.500,11.500 0 0,1 1147.0,77.3Z" fill="#3f7d45" opacity="0.85"/><circle cx="1135.8" cy="73.8" r="12.600" fill="none" stroke="#bfe2c1" stroke-width="1.200" opacity="0.7"/><path d="M1267.8,71.7 1271.4,71.7 1271.4,75.9 1267.8,75.9 1266.5,78.9 1269.1,81.6 1266.2,84.5 1263.5,81.9 1260.5,83.2 1260.5,86.8 1256.3,86.8 1256.3,83.2 1253.3,81.9 1250.6,84.5 1247.7,81.6 1250.3,78.9 1249.0,75.9 1245.4,75.9 1245.4,71.7 1249.0,71.7 1250.3,68.7 1247.7,66.0 1250.6,63.1 1253.3,65.7 1256.3,64.4 1256.3,60.8 1260.5,60.8 1260.5,64.4 1263.5,65.7 1266.2,63.1 1269.1,66.0 1266.5,68.7ZM1262.2,73.8a3.8,3.8 0 1,0 -7.6,0a3.8,3.8 0 1,0 7.6,0Z" fill="#a6d3a9" fill-rule="evenodd"/><path d="M1374,62.500h13.500v22.500h-14v-2h12v-18.500h-11.500Z" fill="#d2d2d2" opacity=".85"/><path d="M1369.5,60.800h12l4,4v17h-16Z" fill="#d2d2d2"/><path d="M1381.5,60.800v4h4" fill="none" stroke="#555" stroke-width="1"/><path d="M1490.7,60.600h27v3h-27ZM1490.7,83.500h27v3h-27ZM1492.7,66.200h23v14.300h-23Z" fill="#d2d2d2"/><path d="M1495.7,77.500l13,-6.500M1502.7,77l8,-1.500l2,-4.500" fill="none" stroke="#555" stroke-width="1.300"/><path d="M1495.2,68h18" stroke="#888" stroke-width="1"/></svg>
</div>
</header>
<section id="dialog" role="dialog" aria-label="Quick Battle Generator">
<div class="b dialog-shadow" style="left:533px;top:261px;width:854px;height:558px;background:#000;opacity:.55"></div>
<div class="b dialog-bg" style="left:534px;top:262px;width:852px;height:556px;background:#333333;"></div>
<div class="b titlebar" style="left:534px;top:262px;width:852px;height:26px;background:#ffffff;"></div>
<h2 class="t" id="t41" style="left:558.68px;top:266.44px;font-size:12px;line-height:16px;height:16px;color:#000;letter-spacing:-0.130px;">Quick Battle Generator</h2>
<svg width="20" height="20" viewBox="0 0 20 20" style="left:538px;top:266px" class="appicon"><path d="M3 4h11v3H9c-2 0-3 1-3 3s1 3 3 3h5v3H8c-4 0-5-3-5-6z" fill="#4a6a9a"/><path d="M1 5h8M0 9h8M1 13h8" stroke="#6f8fb8" stroke-width="1.600"/></svg>
<svg width="130" height="26" viewBox="0 0 130 26" style="left:1256px;top:262px" fill="none" stroke="#000" stroke-width="1.100" class="winbtns"><path d="M10 13.500h11"/><rect x="55.500" y="8.500" width="10" height="10"/><path d="M101.500 8.500l10 10M111.500 8.500l-10 10"/></svg>
<aside id="scenarios">
<div class="b leftpanel" style="left:534px;top:288px;width:223px;height:530px;background:#3b3f42;"></div>
<div class="b sel" style="left:541px;top:293px;width:210px;height:19px;background:#5a5a5a;"></div>
<ul role="listbox">
<li class="t" id="t42" role="option" aria-selected="true" style="left:564.58px;top:294.54px;font-size:12px;line-height:16px;height:16px;color:#e8e8e8;letter-spacing:-0.210px;">Air &amp; Surface ASW</li>
<li class="t" id="t43" role="option" style="left:563.68px;top:314.54px;font-size:12px;line-height:16px;height:16px;color:#e8e8e8;letter-spacing:-0.072px;">Simple A2A engagement</li>
<li class="t" id="t44" role="option" style="left:563.68px;top:334.54px;font-size:12px;line-height:16px;height:16px;color:#e8e8e8;letter-spacing:0.010px;">Submarine 1v1 duel</li>
<li class="t" id="t45" role="option" style="left:563.68px;top:354.54px;font-size:12px;line-height:16px;height:16px;color:#e8e8e8;letter-spacing:-0.084px;">Surface 1v1 engagement</li>
</ul>
<div class="b hthumb" style="left:557px;top:760px;width:160px;height:9px;background:#5c5c5c;"></div>
<svg width="210" height="14" viewBox="0 0 210 14" style="left:541px;top:758px" class="harrows"><path d="M10 3l-5 4 5 4z M198 3l5 4-5 4z" fill="#555"/></svg>
<div class="b startbtn" role="button" style="left:600px;top:779px;width:80px;height:27px;background:#333;border:1px solid #242424;box-shadow:inset 0 0 0 1px #484848"></div>
<span class="t" id="t46" style="left:616.75px;top:781.96px;font-size:16px;line-height:21px;height:21px;color:#fff;font-weight:bold;letter-spacing:-1.395px;">START</span>
</aside>
<article id="scenario">
<h1 class="t" id="t47" style="left:766.10px;top:303.95px;font-size:29px;line-height:38px;height:38px;color:#e6e6e6;font-weight:bold;letter-spacing:-1.013px;">Air &amp; Surface ASW</h1>
<div class="b hr" style="left:767px;top:368px;width:593px;height:2px;background:#d8d8d8;"></div>
<p class="t" id="t48" style="left:766.10px;top:376.80px;font-size:15px;line-height:20px;height:20px;color:#e0e0e0;font-style:italic;letter-spacing:-0.237px;">Create an engagement between an ASW helicopter equipped surface ship and a submarine</p>
<p class="t" id="t49" style="left:767.00px;top:395.80px;font-size:15px;line-height:20px;height:20px;color:#e0e0e0;font-style:italic;letter-spacing:-0.118px;">and in a setting of your choice.</p>
<label class="t" id="t50" style="left:767.00px;top:437.00px;font-size:15px;line-height:20px;height:20px;color:#e4e4e4;letter-spacing:-0.142px;">You are in control of a:</label>
<label class="t" id="t51" style="left:767.00px;top:477.80px;font-size:15px;line-height:20px;height:20px;color:#e4e4e4;letter-spacing:-0.287px;">Your adversary controls a:</label>
<label class="t" id="t52" style="left:766.10px;top:518.80px;font-size:15px;line-height:20px;height:20px;color:#e4e4e4;letter-spacing:-0.114px;">Starting seperation</label>
<label class="t" id="t53" style="left:767.00px;top:556.80px;font-size:15px;line-height:20px;height:20px;color:#e4e4e4;letter-spacing:-0.203px;">Your adversary&#x27;s rules of engagement are:</label>
<label class="t" id="t54" style="left:767.00px;top:619.80px;font-size:15px;line-height:20px;height:20px;color:#e4e4e4;letter-spacing:-0.293px;">Your adversary&#x27;s EMCON state is:</label>
<label class="t" id="t55" style="left:766.10px;top:660.80px;font-size:15px;line-height:20px;height:20px;color:#e4e4e4;letter-spacing:0.017px;">Local time is:</label>
<label class="t" id="t56" style="left:767.00px;top:701.80px;font-size:15px;line-height:20px;height:20px;color:#e4e4e4;letter-spacing:-0.193px;">The engagement takes place in:</label>
<label class="t" id="t57" style="left:767.00px;top:742.80px;font-size:15px;line-height:20px;height:20px;color:#e4e4e4;letter-spacing:-0.082px;">Weather is</label>
<div class="b select" role="combobox" style="left:918px;top:435px;width:426px;height:21px;background:#fff;border:1px solid #c4c4c4"></div>
<span class="t" id="t58" style="left:923.57px;top:436.88px;font-size:13.33px;line-height:17px;height:17px;color:#000;letter-spacing:-0.139px;">Anzac-class frigate (Australia) with MH-60R Seahawk</span>
<svg width="12" height="8" viewBox="0 0 12 8" style="left:1328px;top:442px" class="chev"><path d="M1 1l5 5 5-5" fill="none" stroke="#000" stroke-width="1.700"/></svg>
<div class="b select" role="combobox" style="left:939px;top:476px;width:370px;height:21px;background:#fff;border:1px solid #c4c4c4"></div>
<span class="t" id="t59" style="left:943.12px;top:477.88px;font-size:13.33px;line-height:17px;height:17px;color:#000;letter-spacing:-0.045px;">PLA-971M Akula II [Shchuka-B] class SSN (Russia)</span>
<svg width="12" height="8" viewBox="0 0 12 8" style="left:1293px;top:483px" class="chev"><path d="M1 1l5 5 5-5" fill="none" stroke="#000" stroke-width="1.700"/></svg>
<div class="b select" role="combobox" style="left:894px;top:517px;width:66px;height:21px;background:#fff;border:1px solid #c4c4c4"></div>
<span class="t" id="t60" style="left:899.02px;top:518.88px;font-size:13.33px;line-height:17px;height:17px;color:#000;letter-spacing:-0.041px;">5nm</span>
<svg width="12" height="8" viewBox="0 0 12 8" style="left:944px;top:524px" class="chev"><path d="M1 1l5 5 5-5" fill="none" stroke="#000" stroke-width="1.700"/></svg>
<div class="b select" role="combobox" style="left:767px;top:577px;width:483px;height:21px;background:#fff;border:1px solid #c4c4c4"></div>
<span class="t" id="t61" style="left:772.00px;top:578.88px;font-size:13.33px;line-height:17px;height:17px;color:#000;letter-spacing:-0.121px;">Weapons Free: Engage any detected contacts without regards for identification</span>
<svg width="12" height="8" viewBox="0 0 12 8" style="left:1234px;top:584px" class="chev"><path d="M1 1l5 5 5-5" fill="none" stroke="#000" stroke-width="1.700"/></svg>
<div class="b select" role="combobox" style="left:989px;top:618px;width:109px;height:21px;background:#fff;border:1px solid #c4c4c4"></div>
<span class="t" id="t62" style="left:993.12px;top:619.88px;font-size:13.33px;line-height:17px;height:17px;color:#000;letter-spacing:-0.175px;">Sonar Passive</span>
<svg width="12" height="8" viewBox="0 0 12 8" style="left:1082px;top:625px" class="chev"><path d="M1 1l5 5 5-5" fill="none" stroke="#000" stroke-width="1.700"/></svg>
<div class="b select" role="combobox" style="left:857px;top:659px;width:116px;height:21px;background:#fff;border:1px solid #c4c4c4"></div>
<span class="t" id="t63" style="left:861.08px;top:660.88px;font-size:13.33px;line-height:17px;height:17px;color:#000;letter-spacing:-0.159px;">Morning (06:00)</span>
<svg width="12" height="8" viewBox="0 0 12 8" style="left:957px;top:666px" class="chev"><path d="M1 1l5 5 5-5" fill="none" stroke="#000" stroke-width="1.700"/></svg>
<div class="b select" role="combobox" style="left:978px;top:700px;width:269px;height:21px;background:#fff;border:1px solid #c4c4c4"></div>
<span class="t" id="t64" style="left:982.12px;top:701.88px;font-size:13.33px;line-height:17px;height:17px;color:#000;letter-spacing:-0.092px;">Deep, cold water in the Central Atlantic</span>
<svg width="12" height="8" viewBox="0 0 12 8" style="left:1231px;top:707px" class="chev"><path d="M1 1l5 5 5-5" fill="none" stroke="#000" stroke-width="1.700"/></svg>
<svg width="14" height="10" viewBox="0 0 14 10" style="left:1371px;top:305px" class="vup"><path d="M1.500 8l5.500-5.500 5.500 5.500" fill="none" stroke="#5a5a5a" stroke-width="2.200"/></svg>
<svg width="14" height="10" viewBox="0 0 14 10" style="left:1371px;top:791px" class="vdown"><path d="M1.500 2l5.500 5.500 5.500-5.500" fill="none" stroke="#5a5a5a" stroke-width="2.200"/></svg>
</article>
<div id="weather-list">
<div class="b dropdown" style="left:842px;top:741px;width:420px;height:181px;background:#fff;border:1px solid #b8b8b8"></div>
<div class="b opt-sel" style="left:843px;top:743px;width:418px;height:16px;background:#1e96dc;"></div>
<div class="b opt-hover" style="left:843px;top:823px;width:418px;height:16px;background:#d8d8d8;"></div>
<ul role="listbox">
<li class="t" id="t65" role="option" aria-selected="true" style="left:846.10px;top:742.88px;font-size:13.33px;line-height:17px;height:17px;color:#fff;letter-spacing:-0.127px;">Clear day, no clouds, no wind, avg. temperature 15 deg</li>
<li class="t" id="t66" role="option" style="left:847.00px;top:758.88px;font-size:13.33px;line-height:17px;height:17px;color:#222;letter-spacing:-0.127px;">Clear day, very light clouds, wind state 1, avg. temperature 14C</li>
<li class="t" id="t67" role="option" style="left:847.00px;top:774.88px;font-size:13.33px;line-height:17px;height:17px;color:#222;letter-spacing:-0.127px;">Clear day, very light clouds, wind state 2, avg. temperature 13C</li>
<li class="t" id="t68" role="option" style="left:847.00px;top:790.88px;font-size:13.33px;line-height:17px;height:17px;color:#222;letter-spacing:-0.106px;">Clear day, light clouds, wind state 3, avg. temperature 12C</li>
<li class="t" id="t69" role="option" style="left:847.00px;top:806.88px;font-size:13.33px;line-height:17px;height:17px;color:#222;letter-spacing:-0.106px;">Clear day, light clouds, wind state 4, avg. temperature 11C</li>
<li class="t" id="t70" role="option" style="left:846.10px;top:822.88px;font-size:13.33px;line-height:17px;height:17px;color:#222;letter-spacing:-0.105px;">Light rain, intermediate clouds, wind state 5, avg. temperature 10C</li>
<li class="t" id="t71" role="option" style="left:846.10px;top:838.88px;font-size:13.33px;line-height:17px;height:17px;color:#222;letter-spacing:-0.112px;">Shower, intermediate clouds, wind state 6, avg. temperature 9C</li>
<li class="t" id="t72" role="option" style="left:846.10px;top:854.88px;font-size:13.33px;line-height:17px;height:17px;color:#222;letter-spacing:-0.128px;">Heavy rain, thick cloud cover, wind state 7, avg. temperature 8C</li>
<li class="t" id="t73" role="option" style="left:846.10px;top:870.88px;font-size:13.33px;line-height:17px;height:17px;color:#222;letter-spacing:-0.133px;">Downpour, thick cloud cover, wind state 8, avg. temperature 7C</li>
<li class="t" id="t74" role="option" style="left:846.10px;top:886.88px;font-size:13.33px;line-height:17px;height:17px;color:#222;letter-spacing:-0.108px;">Storm, very thick cloud cover, wind state 9, avg. temperature 6C</li>
<li class="t" id="t75" role="option" style="left:846.10px;top:902.88px;font-size:13.33px;line-height:17px;height:17px;color:#222;letter-spacing:-0.121px;">Flood/Monsoon, total cloud cover, wind state 9, avg. temperature 5C</li>
</ul>
</div>
</section>
<footer id="statusbar">
<div class="b bottombar" style="left:0px;top:1054px;width:1920px;height:26px;background:#3b3f42;"></div>
<div class="b msglog" style="left:2px;top:1021px;width:641px;height:31px;background:#3b3f42;"></div>
<span class="t" id="t76" style="left:10.10px;top:1028.34px;font-size:12px;line-height:16px;height:16px;color:#fff;letter-spacing:-0.425px;">Message Log</span>
<svg width="22" height="22" viewBox="0 0 22 22" style="left:618px;top:1026px" class="expand"><rect x="1" y="1" width="19" height="19" fill="#000" stroke="#fff" stroke-width="2"/><path d="M10.500 4.500l-5.500 5.500h3.500v6h4v-6h3.500z" fill="#fff"/></svg>
<span class="t" id="t77" style="left:1.10px;top:1059.50px;font-size:13px;line-height:17px;height:17px;color:#d0d0d0;letter-spacing:-0.501px;">Unit View</span>
<span class="t" id="t78" role="button" style="left:80.00px;top:1060.67px;font-size:12.5px;line-height:16px;height:16px;color:#fff;font-weight:bold;letter-spacing:-0.846px;">15 sec</span>
<svg width="12" height="22" viewBox="0 0 12 22" style="left:62px;top:1057px" class="tri"><path d="M0.500 1l10 9.500-10 9.500z" fill="#f4f4f4"/></svg>
<span class="t" id="t79" role="button" style="left:150.00px;top:1060.67px;font-size:12.5px;line-height:16px;height:16px;color:#fff;font-weight:bold;letter-spacing:-0.437px;">1 min</span>
<svg width="12" height="22" viewBox="0 0 12 22" style="left:128px;top:1057px" class="tri"><path d="M0.500 1l10 9.500-10 9.500z" fill="#f4f4f4"/></svg>
<span class="t" id="t80" role="button" style="left:216.00px;top:1060.67px;font-size:12.5px;line-height:16px;height:16px;color:#fff;font-weight:bold;letter-spacing:-0.437px;">5 min</span>
<svg width="12" height="22" viewBox="0 0 12 22" style="left:194px;top:1057px" class="tri"><path d="M0.500 1l10 9.500-10 9.500z" fill="#f4f4f4"/></svg>
<span class="t" id="t81" role="button" style="left:282.00px;top:1060.67px;font-size:12.5px;line-height:16px;height:16px;color:#fff;font-weight:bold;letter-spacing:-0.340px;">15 min</span>
<svg width="12" height="22" viewBox="0 0 12 22" style="left:260px;top:1057px" class="tri"><path d="M0.500 1l10 9.500-10 9.500z" fill="#f4f4f4"/></svg>
</footer>
</body></html>
